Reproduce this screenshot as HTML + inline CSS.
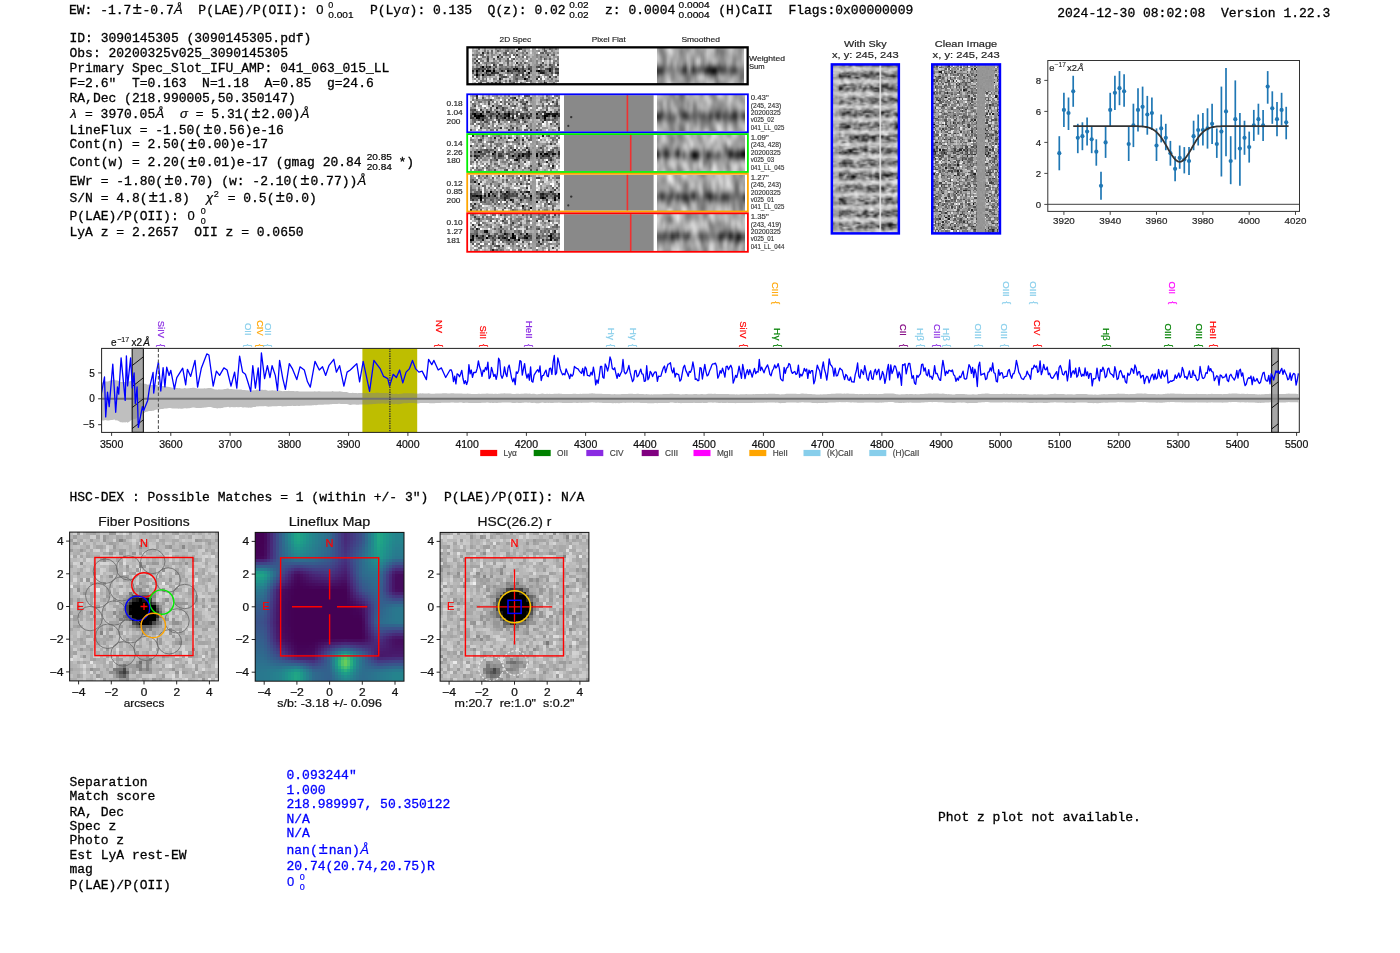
<!DOCTYPE html>
<html><head><meta charset="utf-8"><title>ELiXer report</title>
<style>html,body{margin:0;padding:0;background:#fff;width:1400px;height:953px;overflow:hidden;position:relative}
canvas{position:absolute;display:block}</style></head><body>
<canvas id="cv0" width="45" height="18" style="left:471.70px;top:47.80px;width:87.20px;height:36.00px;background:#8d8d8d;image-rendering:pixelated;filter:blur(0.45px)"></canvas>
<canvas id="cv1" width="44" height="18" style="left:657.00px;top:47.80px;width:87.30px;height:36.00px;background:#8f8f8f"></canvas>
<canvas id="cv2" width="45" height="18" style="left:470.20px;top:95.20px;width:89.80px;height:36.20px;background:#8c8c8c;image-rendering:pixelated;filter:blur(0.45px)"></canvas>
<canvas id="cv3" width="44" height="18" style="left:657.00px;top:95.20px;width:88.30px;height:36.20px;background:#8f8f8f"></canvas>
<canvas id="cv4" width="45" height="18" style="left:470.20px;top:135.00px;width:89.80px;height:36.10px;background:#929292;image-rendering:pixelated;filter:blur(0.45px)"></canvas>
<canvas id="cv5" width="44" height="18" style="left:657.00px;top:135.00px;width:88.30px;height:36.10px;background:#969696"></canvas>
<canvas id="cv6" width="45" height="18" style="left:470.20px;top:174.70px;width:89.80px;height:35.90px;background:#909090;image-rendering:pixelated;filter:blur(0.45px)"></canvas>
<canvas id="cv7" width="44" height="18" style="left:657.00px;top:174.70px;width:88.30px;height:35.90px;background:#939393"></canvas>
<canvas id="cv8" width="45" height="18" style="left:470.20px;top:214.20px;width:89.80px;height:36.70px;background:#909090;image-rendering:pixelated;filter:blur(0.45px)"></canvas>
<canvas id="cv9" width="44" height="18" style="left:657.00px;top:214.20px;width:88.30px;height:36.70px;background:#969696"></canvas>
<canvas id="cv10" width="44" height="112" style="left:832.60px;top:64.90px;width:66.00px;height:168.00px;background:#9a9a9a"></canvas>
<canvas id="cv11" width="44" height="112" style="left:932.60px;top:64.90px;width:67.00px;height:168.00px;background:#8d8d8d;image-rendering:pixelated;filter:blur(0.6px)"></canvas>
<canvas id="cv12" width="45" height="45" style="left:69.61px;top:532.11px;width:148.78px;height:148.79px;background:#aeaeae;image-rendering:pixelated;filter:blur(0.4px)"></canvas>
<canvas id="cv13" width="50" height="50" style="left:255.21px;top:532.41px;width:148.78px;height:148.79px;background:#394379;image-rendering:pixelated;filter:blur(0.4px)"></canvas>
<canvas id="cv14" width="45" height="45" style="left:440.11px;top:532.41px;width:148.79px;height:148.79px;background:#ababab;image-rendering:pixelated;filter:blur(0.4px)"></canvas>
<svg width="1400" height="953" style="position:absolute;left:0;top:0">
<text x="69.00" y="14.00" font-family="Liberation Mono" font-size="13" fill="#000" stroke="#000" stroke-width="0.30" xml:space="preserve">EW: -1.7</text>
<text x="137.09" y="14.30" font-family="Liberation Sans" font-size="16.25" fill="#000" stroke="#000" stroke-width="0.22" text-anchor="middle" >±</text>
<text x="142.53" y="14.00" font-family="Liberation Mono" font-size="13" fill="#000" stroke="#000" stroke-width="0.30" xml:space="preserve">-0.7</text>
<text x="178.30" y="14.00" font-family="Liberation Sans" font-size="13" fill="#000" stroke="#000" stroke-width="0.22" text-anchor="middle" font-style="italic" >Å</text>
<text x="182.75" y="14.00" font-family="Liberation Mono" font-size="13" fill="#000" stroke="#000" stroke-width="0.30" xml:space="preserve">  P(LAE)/P(OII): </text>
<text x="319.99" y="14.00" font-family="Liberation Sans" font-size="13" fill="#000" stroke="#000" stroke-width="0.22" text-anchor="middle" >0</text>
<text x="328.32" y="7.80" font-family="Liberation Sans" font-size="9.1" fill="#000" stroke="#000" stroke-width="0.20" textLength="5.0" lengthAdjust="spacingAndGlyphs" >0</text>
<text x="328.32" y="17.50" font-family="Liberation Sans" font-size="9.1" fill="#000" stroke="#000" stroke-width="0.20" textLength="25.2" lengthAdjust="spacingAndGlyphs" >0.001</text>
<text x="354.37" y="14.00" font-family="Liberation Mono" font-size="13" fill="#000" stroke="#000" stroke-width="0.30" xml:space="preserve">  P(Ly</text>
<text x="405.47" y="14.00" font-family="Liberation Sans" font-size="13" fill="#000" stroke="#000" stroke-width="0.22" text-anchor="middle" font-style="italic" >α</text>
<text x="409.59" y="14.00" font-family="Liberation Mono" font-size="13" fill="#000" stroke="#000" stroke-width="0.30" xml:space="preserve">): 0.135  Q(z): 0.02</text>
<text x="569.19" y="7.80" font-family="Liberation Sans" font-size="9.1" fill="#000" stroke="#000" stroke-width="0.20" textLength="19.5" lengthAdjust="spacingAndGlyphs" >0.02</text>
<text x="569.19" y="17.50" font-family="Liberation Sans" font-size="9.1" fill="#000" stroke="#000" stroke-width="0.20" textLength="19.5" lengthAdjust="spacingAndGlyphs" >0.02</text>
<text x="589.45" y="14.00" font-family="Liberation Mono" font-size="13" fill="#000" stroke="#000" stroke-width="0.30" xml:space="preserve">  z: 0.0004</text>
<text x="678.58" y="7.80" font-family="Liberation Sans" font-size="9.1" fill="#000" stroke="#000" stroke-width="0.20" textLength="31.0" lengthAdjust="spacingAndGlyphs" >0.0004</text>
<text x="678.58" y="17.50" font-family="Liberation Sans" font-size="9.1" fill="#000" stroke="#000" stroke-width="0.20" textLength="31.0" lengthAdjust="spacingAndGlyphs" >0.0004</text>
<text x="710.41" y="14.00" font-family="Liberation Mono" font-size="13" fill="#000" stroke="#000" stroke-width="0.30" xml:space="preserve"> (H)CaII  Flags:0x00000009</text>
<text x="1057.20" y="16.80" font-family="Liberation Mono" font-size="13" fill="#000" stroke="#000" stroke-width="0.30" xml:space="preserve">2024-12-30 08:02:08  Version 1.22.3</text>
<text x="69.50" y="42.40" font-family="Liberation Mono" font-size="13" fill="#000" stroke="#000" stroke-width="0.30" xml:space="preserve">ID: 3090145305 (3090145305.pdf)</text>
<text x="69.50" y="56.70" font-family="Liberation Mono" font-size="13" fill="#000" stroke="#000" stroke-width="0.30" xml:space="preserve">Obs: 20200325v025_3090145305</text>
<text x="69.50" y="71.90" font-family="Liberation Mono" font-size="13" fill="#000" stroke="#000" stroke-width="0.30" xml:space="preserve">Primary Spec_Slot_IFU_AMP: 041_063_015_LL</text>
<text x="69.50" y="86.70" font-family="Liberation Mono" font-size="13" fill="#000" stroke="#000" stroke-width="0.30" xml:space="preserve">F=2.6&quot;  T=0.163  N=1.18  A=0.85  g=24.6</text>
<text x="69.50" y="102.10" font-family="Liberation Mono" font-size="13" fill="#000" stroke="#000" stroke-width="0.30" xml:space="preserve">RA,Dec (218.990005,50.350147)</text>
<text x="73.35" y="118.10" font-family="Liberation Sans" font-size="13" fill="#000" stroke="#000" stroke-width="0.22" text-anchor="middle" font-style="italic" >λ</text>
<text x="77.20" y="118.10" font-family="Liberation Mono" font-size="13" fill="#000" stroke="#000" stroke-width="0.30" xml:space="preserve"> = 3970.05</text>
<text x="159.94" y="118.10" font-family="Liberation Sans" font-size="13" fill="#000" stroke="#000" stroke-width="0.22" text-anchor="middle" font-style="italic" >Å</text>
<text x="164.39" y="118.10" font-family="Liberation Mono" font-size="13" fill="#000" stroke="#000" stroke-width="0.30" xml:space="preserve">  </text>
<text x="183.97" y="118.10" font-family="Liberation Sans" font-size="13" fill="#000" stroke="#000" stroke-width="0.22" text-anchor="middle" font-style="italic" >σ</text>
<text x="187.89" y="118.10" font-family="Liberation Mono" font-size="13" fill="#000" stroke="#000" stroke-width="0.30" xml:space="preserve"> = 5.31(</text>
<text x="255.97" y="118.40" font-family="Liberation Sans" font-size="16.25" fill="#000" stroke="#000" stroke-width="0.22" text-anchor="middle" >±</text>
<text x="261.42" y="118.10" font-family="Liberation Mono" font-size="13" fill="#000" stroke="#000" stroke-width="0.30" xml:space="preserve">2.00)</text>
<text x="305.02" y="118.10" font-family="Liberation Sans" font-size="13" fill="#000" stroke="#000" stroke-width="0.22" text-anchor="middle" font-style="italic" >Å</text>
<text x="69.50" y="133.60" font-family="Liberation Mono" font-size="13" fill="#000" stroke="#000" stroke-width="0.30" xml:space="preserve">LineFlux = -1.50(</text>
<text x="208.06" y="133.90" font-family="Liberation Sans" font-size="16.25" fill="#000" stroke="#000" stroke-width="0.22" text-anchor="middle" >±</text>
<text x="213.50" y="133.60" font-family="Liberation Mono" font-size="13" fill="#000" stroke="#000" stroke-width="0.30" xml:space="preserve">0.56)e-16</text>
<text x="69.50" y="148.30" font-family="Liberation Mono" font-size="13" fill="#000" stroke="#000" stroke-width="0.30" xml:space="preserve">Cont(n) = 2.50(</text>
<text x="192.40" y="148.60" font-family="Liberation Sans" font-size="16.25" fill="#000" stroke="#000" stroke-width="0.22" text-anchor="middle" >±</text>
<text x="197.84" y="148.30" font-family="Liberation Mono" font-size="13" fill="#000" stroke="#000" stroke-width="0.30" xml:space="preserve">0.00)e-17</text>
<text x="69.50" y="166.40" font-family="Liberation Mono" font-size="13" fill="#000" stroke="#000" stroke-width="0.30" xml:space="preserve">Cont(w) = 2.20(</text>
<text x="192.40" y="166.70" font-family="Liberation Sans" font-size="16.25" fill="#000" stroke="#000" stroke-width="0.22" text-anchor="middle" >±</text>
<text x="197.84" y="166.40" font-family="Liberation Mono" font-size="13" fill="#000" stroke="#000" stroke-width="0.30" xml:space="preserve">0.01)e-17 (gmag 20.84</text>
<text x="366.77" y="160.20" font-family="Liberation Sans" font-size="9.1" fill="#000" stroke="#000" stroke-width="0.20" textLength="25.2" lengthAdjust="spacingAndGlyphs" >20.85</text>
<text x="366.77" y="169.90" font-family="Liberation Sans" font-size="9.1" fill="#000" stroke="#000" stroke-width="0.20" textLength="25.2" lengthAdjust="spacingAndGlyphs" >20.84</text>
<text x="390.60" y="166.40" font-family="Liberation Mono" font-size="13" fill="#000" stroke="#000" stroke-width="0.30" xml:space="preserve"> *)</text>
<text x="69.50" y="184.60" font-family="Liberation Mono" font-size="13" fill="#000" stroke="#000" stroke-width="0.30" xml:space="preserve">EWr = -1.80(</text>
<text x="168.91" y="184.90" font-family="Liberation Sans" font-size="16.25" fill="#000" stroke="#000" stroke-width="0.22" text-anchor="middle" >±</text>
<text x="174.35" y="184.60" font-family="Liberation Mono" font-size="13" fill="#000" stroke="#000" stroke-width="0.30" xml:space="preserve">0.70) (w: -2.10(</text>
<text x="305.08" y="184.90" font-family="Liberation Sans" font-size="16.25" fill="#000" stroke="#000" stroke-width="0.22" text-anchor="middle" >±</text>
<text x="310.53" y="184.60" font-family="Liberation Mono" font-size="13" fill="#000" stroke="#000" stroke-width="0.30" xml:space="preserve">0.77))</text>
<text x="361.95" y="184.60" font-family="Liberation Sans" font-size="13" fill="#000" stroke="#000" stroke-width="0.22" text-anchor="middle" font-style="italic" >Å</text>
<text x="69.50" y="202.10" font-family="Liberation Mono" font-size="13" fill="#000" stroke="#000" stroke-width="0.30" xml:space="preserve">S/N = 4.8(</text>
<text x="153.25" y="202.40" font-family="Liberation Sans" font-size="16.25" fill="#000" stroke="#000" stroke-width="0.22" text-anchor="middle" >±</text>
<text x="158.69" y="202.10" font-family="Liberation Mono" font-size="13" fill="#000" stroke="#000" stroke-width="0.30" xml:space="preserve">1.8)  </text>
<text x="209.52" y="202.10" font-family="Liberation Sans" font-size="13" fill="#000" stroke="#000" stroke-width="0.22" text-anchor="middle" font-style="italic" >χ</text>
<text x="213.87" y="196.60" font-family="Liberation Sans" font-size="9.1" fill="#000" stroke="#000" stroke-width="0.20" >2</text>
<text x="219.87" y="202.10" font-family="Liberation Mono" font-size="13" fill="#000" stroke="#000" stroke-width="0.30" xml:space="preserve"> = 0.5(</text>
<text x="280.13" y="202.40" font-family="Liberation Sans" font-size="16.25" fill="#000" stroke="#000" stroke-width="0.22" text-anchor="middle" >±</text>
<text x="285.57" y="202.10" font-family="Liberation Mono" font-size="13" fill="#000" stroke="#000" stroke-width="0.30" xml:space="preserve">0.0)</text>
<text x="69.50" y="220.00" font-family="Liberation Mono" font-size="13" fill="#000" stroke="#000" stroke-width="0.30" xml:space="preserve">P(LAE)/P(OII): </text>
<text x="191.08" y="220.00" font-family="Liberation Sans" font-size="13" fill="#000" stroke="#000" stroke-width="0.22" text-anchor="middle" >0</text>
<text x="200.72" y="213.80" font-family="Liberation Sans" font-size="9.1" fill="#000" stroke="#000" stroke-width="0.20" textLength="5.0" lengthAdjust="spacingAndGlyphs" >0</text>
<text x="200.72" y="223.50" font-family="Liberation Sans" font-size="9.1" fill="#000" stroke="#000" stroke-width="0.20" textLength="5.0" lengthAdjust="spacingAndGlyphs" >0</text>
<text x="69.50" y="236.40" font-family="Liberation Mono" font-size="13" fill="#000" stroke="#000" stroke-width="0.30" xml:space="preserve">LyA z = 2.2657  OII z = 0.0650</text>
<text x="69.50" y="785.70" font-family="Liberation Mono" font-size="13" fill="#000" stroke="#000" stroke-width="0.30" >Separation</text>
<text x="69.50" y="800.40" font-family="Liberation Mono" font-size="13" fill="#000" stroke="#000" stroke-width="0.30" >Match score</text>
<text x="69.50" y="815.70" font-family="Liberation Mono" font-size="13" fill="#000" stroke="#000" stroke-width="0.30" >RA, Dec</text>
<text x="69.50" y="830.00" font-family="Liberation Mono" font-size="13" fill="#000" stroke="#000" stroke-width="0.30" >Spec z</text>
<text x="69.50" y="844.30" font-family="Liberation Mono" font-size="13" fill="#000" stroke="#000" stroke-width="0.30" >Photo z</text>
<text x="69.50" y="859.30" font-family="Liberation Mono" font-size="13" fill="#000" stroke="#000" stroke-width="0.30" >Est LyA rest-EW</text>
<text x="69.50" y="872.90" font-family="Liberation Mono" font-size="13" fill="#000" stroke="#000" stroke-width="0.30" >mag</text>
<text x="69.50" y="888.60" font-family="Liberation Mono" font-size="13" fill="#000" stroke="#000" stroke-width="0.30" >P(LAE)/P(OII)</text>
<text x="286.50" y="778.80" font-family="Liberation Mono" font-size="13" fill="#0000ff" stroke="#0000ff" stroke-width="0.30" xml:space="preserve">0.093244&quot;</text>
<text x="286.50" y="793.50" font-family="Liberation Mono" font-size="13" fill="#0000ff" stroke="#0000ff" stroke-width="0.30" xml:space="preserve">1.000</text>
<text x="286.50" y="808.20" font-family="Liberation Mono" font-size="13" fill="#0000ff" stroke="#0000ff" stroke-width="0.30" xml:space="preserve">218.989997, 50.350122</text>
<text x="286.50" y="822.50" font-family="Liberation Mono" font-size="13" fill="#0000ff" stroke="#0000ff" stroke-width="0.30" xml:space="preserve">N/A</text>
<text x="286.50" y="837.10" font-family="Liberation Mono" font-size="13" fill="#0000ff" stroke="#0000ff" stroke-width="0.30" xml:space="preserve">N/A</text>
<text x="286.50" y="854.00" font-family="Liberation Mono" font-size="13" fill="#0000ff" stroke="#0000ff" stroke-width="0.30" xml:space="preserve">nan(</text>
<text x="323.27" y="854.30" font-family="Liberation Sans" font-size="16.25" fill="#0000ff" stroke="#0000ff" stroke-width="0.22" text-anchor="middle" >±</text>
<text x="328.71" y="854.00" font-family="Liberation Mono" font-size="13" fill="#0000ff" stroke="#0000ff" stroke-width="0.30" xml:space="preserve">nan)</text>
<text x="364.48" y="854.00" font-family="Liberation Sans" font-size="13" fill="#0000ff" stroke="#0000ff" stroke-width="0.22" text-anchor="middle" font-style="italic" >Å</text>
<text x="286.50" y="869.50" font-family="Liberation Mono" font-size="13" fill="#0000ff" stroke="#0000ff" stroke-width="0.30" xml:space="preserve">20.74(20.74,20.75)R</text>
<text x="290.63" y="886.40" font-family="Liberation Sans" font-size="13" fill="#0000ff" stroke="#0000ff" stroke-width="0.22" text-anchor="middle" >0</text>
<text x="299.77" y="880.20" font-family="Liberation Sans" font-size="9.1" fill="#0000ff" stroke="#0000ff" stroke-width="0.20" textLength="5.0" lengthAdjust="spacingAndGlyphs" >0</text>
<text x="299.77" y="889.90" font-family="Liberation Sans" font-size="9.1" fill="#0000ff" stroke="#0000ff" stroke-width="0.20" textLength="5.0" lengthAdjust="spacingAndGlyphs" >0</text>
<text x="938.00" y="821.10" font-family="Liberation Mono" font-size="13" fill="#000" stroke="#000" stroke-width="0.30" >Phot z plot not available.</text>
<text x="69.50" y="501.30" font-family="Liberation Mono" font-size="13" fill="#000" stroke="#000" stroke-width="0.30" xml:space="preserve">HSC-DEX : Possible Matches = 1 (within +/- 3&quot;)  P(LAE)/P(OII): N/A</text>
<rect x="362.4" y="348.4" width="54.8" height="84.0" fill="#bebe00"/>
<polygon points="101.5,382.2 102.7,382.4 103.9,382.2 105.1,381.5 106.3,381.5 107.5,381.5 108.6,381.3 109.8,380.8 111.0,380.3 112.2,380.3 113.4,379.8 114.6,379.5 115.7,380.4 116.9,380.3 118.1,380.7 119.3,381.3 120.5,382.0 121.7,382.1 122.9,382.1 124.0,381.9 125.2,382.0 126.4,381.5 127.6,382.2 128.8,381.5 130.0,381.2 131.2,380.8 132.3,381.6 133.5,381.6 134.7,382.4 135.9,383.1 137.1,383.0 138.3,382.7 139.4,382.9 140.6,383.0 141.8,383.6 143.0,383.5 144.2,383.7 145.4,383.8 146.6,384.3 147.7,384.8 148.9,384.4 150.1,385.0 151.3,385.1 152.5,385.1 153.7,385.4 154.9,385.1 156.0,385.1 157.2,385.3 158.4,385.5 159.6,385.8 160.8,385.7 162.0,385.9 163.1,386.1 164.3,386.0 165.5,386.3 166.7,386.8 167.9,386.7 169.1,387.0 170.3,387.2 171.4,387.5 172.6,387.8 173.8,387.9 175.0,387.8 176.2,387.9 177.4,388.1 178.6,388.3 179.7,388.1 180.9,388.6 182.1,388.4 183.3,388.4 184.5,388.1 185.7,388.2 186.8,388.5 188.0,388.3 189.2,388.3 190.4,388.1 191.6,387.9 192.8,387.8 194.0,387.8 195.1,388.1 196.3,388.3 197.5,388.5 198.7,388.4 199.9,388.5 201.1,388.6 202.3,388.4 203.4,388.4 204.6,388.3 205.8,388.4 207.0,388.2 208.2,388.0 209.4,387.9 210.5,388.1 211.7,388.3 212.9,388.8 214.1,389.2 215.3,389.4 216.5,389.5 217.7,389.7 218.8,389.3 220.0,389.6 221.2,389.5 222.4,389.5 223.6,389.2 224.8,388.9 226.0,388.9 227.1,388.6 228.3,388.6 229.5,389.2 230.7,389.1 231.9,389.0 233.1,389.3 234.2,389.3 235.4,389.5 236.6,389.3 237.8,389.4 239.0,389.5 240.2,389.5 241.4,389.5 242.5,389.9 243.7,390.0 244.9,390.0 246.1,390.2 247.3,390.3 248.5,390.6 249.7,390.5 250.8,390.6 252.0,390.5 253.2,390.2 254.4,390.3 255.6,390.2 256.8,389.6 257.9,389.8 259.1,389.6 260.3,389.8 261.5,389.8 262.7,389.8 263.9,389.9 265.1,389.7 266.2,390.1 267.4,390.5 268.6,390.7 269.8,390.5 271.0,390.5 272.2,390.2 273.4,390.4 274.5,390.5 275.7,390.6 276.9,390.6 278.1,390.5 279.3,390.4 280.5,390.7 281.6,390.9 282.8,391.2 284.0,391.0 285.2,391.0 286.4,391.1 287.6,391.0 288.8,390.8 289.9,391.0 291.1,391.0 292.3,391.0 293.5,391.1 294.7,391.3 295.9,391.2 297.1,391.1 298.2,391.3 299.4,391.5 300.6,391.4 301.8,391.4 303.0,391.5 304.2,391.4 305.3,391.4 306.5,391.5 307.7,391.5 308.9,391.4 310.1,391.6 311.3,391.6 312.5,391.5 313.6,391.5 314.8,391.3 316.0,391.6 317.2,391.4 318.4,391.3 319.6,391.3 320.8,391.4 321.9,391.5 323.1,391.5 324.3,391.4 325.5,391.4 326.7,391.4 327.9,391.5 329.0,391.5 330.2,391.5 331.4,391.5 332.6,391.1 333.8,391.5 335.0,391.5 336.2,391.5 337.3,391.5 338.5,391.4 339.7,391.3 340.9,391.6 342.1,391.8 343.3,391.9 344.5,391.9 345.6,392.0 346.8,392.0 348.0,392.4 349.2,392.9 350.4,393.0 351.6,392.9 352.7,392.7 353.9,392.9 355.1,392.9 356.3,393.0 357.5,393.2 358.7,393.1 359.9,393.1 361.0,393.1 362.2,393.1 363.4,393.1 364.6,393.2 365.8,393.2 367.0,393.1 368.2,393.2 369.3,393.1 370.5,393.1 371.7,393.1 372.9,393.1 374.1,392.9 375.3,393.0 376.4,392.8 377.6,392.8 378.8,392.7 380.0,392.9 381.2,392.9 382.4,392.9 383.6,392.9 384.7,393.1 385.9,393.0 387.1,393.0 388.3,393.1 389.5,393.3 390.7,393.2 391.9,393.4 393.0,393.8 394.2,393.9 395.4,393.8 396.6,393.8 397.8,394.0 399.0,394.1 400.1,393.8 401.3,393.8 402.5,393.6 403.7,393.3 404.9,393.3 406.1,393.3 407.3,393.3 408.4,393.2 409.6,393.2 410.8,393.3 412.0,393.3 413.2,393.3 414.4,393.4 415.6,393.4 416.7,393.5 417.9,393.7 419.1,393.5 420.3,393.3 421.5,393.4 422.7,393.3 423.8,393.4 425.0,393.5 426.2,393.5 427.4,393.5 428.6,393.3 429.8,393.6 431.0,393.8 432.1,393.8 433.3,393.7 434.5,393.7 435.7,393.5 436.9,393.4 438.1,393.4 439.3,393.5 440.4,393.6 441.6,393.4 442.8,393.3 444.0,393.3 445.2,393.3 446.4,393.3 447.5,393.5 448.7,393.4 449.9,393.4 451.1,393.3 452.3,393.3 453.5,393.3 454.7,393.4 455.8,393.5 457.0,393.6 458.2,393.5 459.4,393.4 460.6,393.4 461.8,393.5 463.0,393.7 464.1,393.8 465.3,393.7 466.5,393.7 467.7,393.6 468.9,393.8 470.1,393.8 471.2,394.0 472.4,394.0 473.6,394.0 474.8,393.9 476.0,394.0 477.2,393.9 478.4,393.8 479.5,393.8 480.7,393.9 481.9,393.7 483.1,393.7 484.3,393.7 485.5,393.7 486.7,393.5 487.8,393.6 489.0,393.7 490.2,393.8 491.4,393.7 492.6,393.8 493.8,393.9 494.9,393.7 496.1,393.8 497.3,393.9 498.5,393.8 499.7,393.7 500.9,393.6 502.1,393.4 503.2,393.4 504.4,393.3 505.6,393.5 506.8,393.5 508.0,393.4 509.2,393.5 510.4,393.6 511.5,393.7 512.7,393.9 513.9,393.9 515.1,393.9 516.3,393.7 517.5,393.7 518.6,393.8 519.8,393.9 521.0,393.8 522.2,393.8 523.4,393.7 524.6,393.5 525.8,393.5 526.9,393.5 528.1,393.7 529.3,393.6 530.5,393.8 531.7,393.9 532.9,393.8 534.1,393.8 535.2,394.0 536.4,394.2 537.6,394.2 538.8,394.1 540.0,394.1 541.2,393.8 542.3,393.6 543.5,393.8 544.7,393.9 545.9,393.9 547.1,393.8 548.3,393.9 549.5,393.8 550.6,393.9 551.8,394.0 553.0,394.0 554.2,393.8 555.4,393.7 556.6,393.7 557.8,393.7 558.9,393.6 560.1,393.7 561.3,393.7 562.5,393.9 563.7,393.9 564.9,394.0 566.0,394.0 567.2,393.9 568.4,394.1 569.6,394.1 570.8,394.1 572.0,393.9 573.2,393.8 574.3,393.8 575.5,393.8 576.7,393.9 577.9,394.1 579.1,393.9 580.3,393.7 581.5,393.9 582.6,393.8 583.8,393.8 585.0,393.7 586.2,393.8 587.4,393.7 588.6,393.7 589.7,393.6 590.9,393.6 592.1,393.3 593.3,393.5 594.5,393.5 595.7,393.8 596.9,393.8 598.0,393.7 599.2,393.7 600.4,393.8 601.6,393.8 602.8,394.0 604.0,394.0 605.2,394.1 606.3,393.9 607.5,393.9 608.7,394.1 609.9,394.0 611.1,394.2 612.3,394.3 613.4,394.3 614.6,394.1 615.8,394.2 617.0,394.2 618.2,394.2 619.4,394.3 620.6,394.2 621.7,394.1 622.9,393.9 624.1,393.9 625.3,394.0 626.5,393.9 627.7,393.9 628.9,393.8 630.0,393.8 631.2,393.8 632.4,393.7 633.6,394.0 634.8,393.9 636.0,393.9 637.1,393.8 638.3,393.8 639.5,393.9 640.7,394.0 641.9,394.0 643.1,394.1 644.3,394.2 645.4,394.2 646.6,394.1 647.8,394.3 649.0,394.3 650.2,394.4 651.4,394.3 652.6,394.4 653.7,394.3 654.9,394.2 656.1,394.2 657.3,394.3 658.5,394.2 659.7,394.2 660.8,394.2 662.0,394.3 663.2,394.1 664.4,394.1 665.6,394.0 666.8,394.1 668.0,394.0 669.1,394.0 670.3,393.8 671.5,393.8 672.7,393.7 673.9,394.0 675.1,394.1 676.3,394.0 677.4,394.0 678.6,394.1 679.8,394.2 681.0,394.4 682.2,394.2 683.4,394.3 684.5,394.2 685.7,394.1 686.9,394.1 688.1,394.3 689.3,394.2 690.5,394.2 691.7,394.3 692.8,394.3 694.0,394.0 695.2,394.1 696.4,394.0 697.6,394.3 698.8,394.2 700.0,394.2 701.1,394.1 702.3,394.0 703.5,394.2 704.7,394.3 705.9,394.3 707.1,394.1 708.2,393.8 709.4,393.7 710.6,393.8 711.8,393.8 713.0,393.9 714.2,393.8 715.4,393.8 716.5,393.9 717.7,394.0 718.9,394.1 720.1,394.1 721.3,394.1 722.5,394.1 723.7,394.1 724.8,394.1 726.0,394.1 727.2,394.0 728.4,394.1 729.6,394.2 730.8,394.2 731.9,394.3 733.1,394.3 734.3,394.2 735.5,394.4 736.7,394.3 737.9,394.4 739.1,394.4 740.2,394.3 741.4,394.3 742.6,394.3 743.8,394.3 745.0,394.3 746.2,394.1 747.4,394.2 748.5,394.2 749.7,394.2 750.9,394.2 752.1,394.2 753.3,394.0 754.5,394.2 755.6,394.1 756.8,394.1 758.0,393.9 759.2,393.9 760.4,394.0 761.6,394.0 762.8,393.9 763.9,393.9 765.1,393.8 766.3,393.9 767.5,393.9 768.7,393.8 769.9,393.8 771.1,393.7 772.2,393.8 773.4,393.8 774.6,393.8 775.8,394.1 777.0,393.9 778.2,394.1 779.3,394.3 780.5,394.4 781.7,394.3 782.9,394.2 784.1,394.3 785.3,394.1 786.5,393.8 787.6,393.8 788.8,393.7 790.0,393.7 791.2,393.7 792.4,393.8 793.6,393.7 794.8,393.8 795.9,393.8 797.1,394.0 798.3,394.0 799.5,393.9 800.7,393.8 801.9,393.6 803.0,393.6 804.2,393.7 805.4,393.7 806.6,393.8 807.8,393.9 809.0,393.9 810.2,393.9 811.3,394.0 812.5,394.2 813.7,394.3 814.9,394.3 816.1,394.4 817.3,394.5 818.5,394.4 819.6,394.4 820.8,394.3 822.0,394.4 823.2,394.3 824.4,394.2 825.6,394.3 826.7,394.3 827.9,394.1 829.1,394.0 830.3,393.9 831.5,393.8 832.7,393.8 833.9,393.7 835.0,393.7 836.2,393.5 837.4,393.5 838.6,393.5 839.8,393.4 841.0,393.6 842.2,393.7 843.3,393.7 844.5,393.6 845.7,393.7 846.9,393.5 848.1,393.6 849.3,393.7 850.4,393.8 851.6,393.8 852.8,393.7 854.0,393.8 855.2,394.0 856.4,394.0 857.6,394.1 858.7,394.2 859.9,394.1 861.1,394.0 862.3,394.1 863.5,394.2 864.7,394.0 865.9,393.9 867.0,393.9 868.2,393.9 869.4,393.8 870.6,393.9 871.8,394.0 873.0,394.0 874.1,393.9 875.3,394.1 876.5,394.1 877.7,394.2 878.9,394.0 880.1,394.0 881.3,394.1 882.4,393.9 883.6,393.8 884.8,393.6 886.0,393.5 887.2,393.5 888.4,393.4 889.6,393.5 890.7,393.5 891.9,393.5 893.1,393.5 894.3,393.8 895.5,394.1 896.7,394.2 897.8,394.2 899.0,394.4 900.2,394.4 901.4,394.3 902.6,394.2 903.8,394.3 905.0,394.2 906.1,394.1 907.3,394.0 908.5,394.2 909.7,394.0 910.9,394.0 912.1,394.1 913.3,394.2 914.4,394.2 915.6,394.1 916.8,394.2 918.0,394.3 919.2,394.2 920.4,394.1 921.5,394.0 922.7,394.0 923.9,393.9 925.1,393.7 926.3,393.8 927.5,393.7 928.7,393.5 929.8,393.4 931.0,393.5 932.2,393.7 933.4,393.5 934.6,393.4 935.8,393.5 937.0,393.5 938.1,393.6 939.3,393.7 940.5,393.7 941.7,393.7 942.9,393.6 944.1,393.8 945.2,394.1 946.4,394.1 947.6,394.2 948.8,394.1 950.0,394.2 951.2,394.2 952.4,394.5 953.5,394.4 954.7,394.4 955.9,394.1 957.1,394.0 958.3,393.9 959.5,394.1 960.7,394.1 961.8,394.1 963.0,394.0 964.2,394.1 965.4,394.3 966.6,394.3 967.8,394.6 968.9,394.6 970.1,394.5 971.3,394.4 972.5,394.3 973.7,394.3 974.9,394.4 976.1,394.4 977.2,394.4 978.4,394.1 979.6,394.0 980.8,393.9 982.0,393.8 983.2,393.8 984.4,393.7 985.5,393.6 986.7,393.5 987.9,393.5 989.1,393.7 990.3,393.9 991.5,394.0 992.6,394.1 993.8,394.1 995.0,394.0 996.2,394.0 997.4,394.0 998.6,394.0 999.8,393.9 1000.9,394.0 1002.1,394.0 1003.3,393.8 1004.5,393.8 1005.7,394.0 1006.9,393.8 1008.1,393.9 1009.2,393.9 1010.4,394.0 1011.6,393.8 1012.8,393.9 1014.0,394.1 1015.2,394.1 1016.3,394.1 1017.5,394.2 1018.7,394.0 1019.9,394.1 1021.1,394.0 1022.3,394.2 1023.5,394.1 1024.6,394.0 1025.8,394.0 1027.0,394.2 1028.2,394.3 1029.4,394.5 1030.6,394.5 1031.8,394.5 1032.9,394.4 1034.1,394.3 1035.3,394.3 1036.5,394.4 1037.7,394.3 1038.9,394.3 1040.0,394.3 1041.2,394.2 1042.4,394.3 1043.6,394.5 1044.8,394.5 1046.0,394.5 1047.2,394.4 1048.3,394.3 1049.5,394.2 1050.7,394.1 1051.9,394.0 1053.1,393.9 1054.3,393.7 1055.5,393.7 1056.6,393.9 1057.8,393.9 1059.0,393.9 1060.2,394.0 1061.4,394.1 1062.6,394.0 1063.7,394.1 1064.9,394.2 1066.1,394.4 1067.3,394.3 1068.5,394.3 1069.7,394.3 1070.9,394.3 1072.0,394.3 1073.2,394.4 1074.4,394.4 1075.6,394.3 1076.8,394.1 1078.0,393.9 1079.2,393.9 1080.3,393.9 1081.5,394.0 1082.7,393.9 1083.9,394.0 1085.1,394.0 1086.3,394.0 1087.4,394.2 1088.6,394.5 1089.8,394.4 1091.0,394.5 1092.2,394.6 1093.4,394.7 1094.6,394.6 1095.7,394.6 1096.9,394.7 1098.1,394.7 1099.3,394.5 1100.5,394.4 1101.7,394.3 1102.9,394.2 1104.0,394.1 1105.2,394.2 1106.4,394.3 1107.6,394.2 1108.8,394.0 1110.0,394.1 1111.1,394.0 1112.3,394.1 1113.5,393.9 1114.7,394.0 1115.9,394.0 1117.1,393.7 1118.3,393.6 1119.4,393.7 1120.6,393.7 1121.8,393.8 1123.0,393.7 1124.2,393.8 1125.4,393.9 1126.6,393.9 1127.7,394.1 1128.9,394.2 1130.1,394.0 1131.3,394.0 1132.5,393.9 1133.7,394.1 1134.8,394.0 1136.0,393.7 1137.2,393.6 1138.4,393.6 1139.6,393.6 1140.8,393.5 1142.0,393.6 1143.1,393.7 1144.3,393.6 1145.5,393.6 1146.7,393.8 1147.9,393.9 1149.1,393.9 1150.3,393.9 1151.4,394.1 1152.6,394.1 1153.8,394.1 1155.0,394.0 1156.2,394.2 1157.4,394.2 1158.5,394.1 1159.7,394.2 1160.9,394.2 1162.1,394.3 1163.3,394.1 1164.5,393.9 1165.7,393.8 1166.8,393.7 1168.0,393.6 1169.2,393.7 1170.4,393.6 1171.6,393.5 1172.8,393.5 1174.0,393.5 1175.1,393.7 1176.3,393.8 1177.5,393.7 1178.7,393.8 1179.9,393.8 1181.1,393.8 1182.2,393.9 1183.4,393.7 1184.6,393.9 1185.8,394.1 1187.0,394.1 1188.2,394.1 1189.4,394.0 1190.5,394.0 1191.7,394.0 1192.9,394.0 1194.1,394.1 1195.3,394.1 1196.5,393.8 1197.7,394.0 1198.8,394.0 1200.0,394.0 1201.2,394.1 1202.4,394.1 1203.6,394.1 1204.8,394.1 1205.9,394.1 1207.1,394.2 1208.3,393.9 1209.5,394.1 1210.7,394.0 1211.9,393.8 1213.1,394.0 1214.2,394.0 1215.4,393.9 1216.6,393.9 1217.8,394.0 1219.0,394.1 1220.2,394.0 1221.4,394.1 1222.5,394.2 1223.7,394.1 1224.9,394.1 1226.1,394.0 1227.3,393.9 1228.5,393.8 1229.6,393.6 1230.8,393.7 1232.0,393.6 1233.2,393.5 1234.4,393.5 1235.6,393.4 1236.8,393.6 1237.9,393.8 1239.1,393.8 1240.3,393.9 1241.5,393.8 1242.7,393.8 1243.9,393.8 1245.1,393.9 1246.2,394.0 1247.4,393.8 1248.6,393.9 1249.8,393.9 1251.0,394.0 1252.2,394.0 1253.3,394.0 1254.5,394.1 1255.7,394.2 1256.9,394.2 1258.1,394.4 1259.3,394.3 1260.5,394.4 1261.6,394.3 1262.8,394.3 1264.0,394.2 1265.2,394.1 1266.4,394.1 1267.6,394.0 1268.8,393.9 1269.9,393.7 1271.1,393.7 1272.3,393.8 1273.5,393.9 1274.7,393.9 1275.9,394.0 1277.0,394.0 1278.2,394.0 1279.4,394.0 1280.6,394.1 1281.8,394.1 1283.0,394.0 1284.2,394.1 1285.3,393.9 1286.5,393.8 1287.7,393.7 1288.9,393.6 1290.1,393.7 1291.3,393.7 1292.5,393.7 1293.6,393.7 1294.8,393.7 1296.0,393.8 1297.2,393.9 1298.4,394.0 1298.4,402.5 1297.2,402.3 1296.0,402.3 1294.8,402.2 1293.6,402.2 1292.5,402.2 1291.3,402.2 1290.1,402.2 1288.9,402.1 1287.7,402.2 1286.5,402.3 1285.3,402.4 1284.2,402.5 1283.0,402.5 1281.8,402.6 1280.6,402.6 1279.4,402.5 1278.2,402.5 1277.0,402.4 1275.9,402.5 1274.7,402.4 1273.5,402.4 1272.3,402.3 1271.1,402.2 1269.9,402.2 1268.8,402.4 1267.6,402.5 1266.4,402.6 1265.2,402.6 1264.0,402.7 1262.8,402.7 1261.6,402.8 1260.5,402.9 1259.3,402.8 1258.1,402.9 1256.9,402.7 1255.7,402.7 1254.5,402.6 1253.3,402.5 1252.2,402.5 1251.0,402.5 1249.8,402.4 1248.6,402.4 1247.4,402.3 1246.2,402.5 1245.1,402.4 1243.9,402.3 1242.7,402.3 1241.5,402.3 1240.3,402.4 1239.1,402.3 1237.9,402.3 1236.8,402.1 1235.6,401.9 1234.4,402.0 1233.2,402.0 1232.0,402.0 1230.8,402.2 1229.6,402.1 1228.5,402.3 1227.3,402.4 1226.1,402.5 1224.9,402.6 1223.7,402.6 1222.5,402.7 1221.4,402.6 1220.2,402.5 1219.0,402.6 1217.8,402.5 1216.6,402.4 1215.4,402.4 1214.2,402.5 1213.1,402.5 1211.9,402.3 1210.7,402.5 1209.5,402.6 1208.3,402.4 1207.1,402.7 1205.9,402.6 1204.8,402.6 1203.6,402.6 1202.4,402.6 1201.2,402.6 1200.0,402.5 1198.8,402.5 1197.7,402.5 1196.5,402.3 1195.3,402.6 1194.1,402.6 1192.9,402.5 1191.7,402.5 1190.5,402.5 1189.4,402.5 1188.2,402.5 1187.0,402.6 1185.8,402.5 1184.6,402.4 1183.4,402.2 1182.2,402.4 1181.1,402.3 1179.9,402.3 1178.7,402.3 1177.5,402.2 1176.3,402.2 1175.1,402.2 1174.0,402.0 1172.8,402.0 1171.6,402.0 1170.4,402.1 1169.2,402.2 1168.0,402.1 1166.8,402.2 1165.7,402.3 1164.5,402.4 1163.3,402.6 1162.1,402.8 1160.9,402.7 1159.7,402.7 1158.5,402.6 1157.4,402.7 1156.2,402.7 1155.0,402.5 1153.8,402.6 1152.6,402.6 1151.4,402.6 1150.3,402.4 1149.1,402.4 1147.9,402.3 1146.7,402.3 1145.5,402.1 1144.3,402.1 1143.1,402.2 1142.0,402.1 1140.8,402.0 1139.6,402.1 1138.4,402.1 1137.2,402.1 1136.0,402.2 1134.8,402.5 1133.7,402.6 1132.5,402.4 1131.3,402.5 1130.1,402.5 1128.9,402.6 1127.7,402.6 1126.6,402.4 1125.4,402.4 1124.2,402.3 1123.0,402.2 1121.8,402.3 1120.6,402.2 1119.4,402.2 1118.3,402.1 1117.1,402.2 1115.9,402.5 1114.7,402.5 1113.5,402.4 1112.3,402.6 1111.1,402.5 1110.0,402.6 1108.8,402.5 1107.6,402.7 1106.4,402.8 1105.2,402.7 1104.0,402.6 1102.9,402.7 1101.7,402.8 1100.5,402.9 1099.3,403.0 1098.1,403.2 1096.9,403.2 1095.7,403.1 1094.6,403.1 1093.4,403.2 1092.2,403.1 1091.0,403.0 1089.8,402.9 1088.6,403.0 1087.4,402.7 1086.3,402.5 1085.1,402.5 1083.9,402.5 1082.7,402.4 1081.5,402.5 1080.3,402.4 1079.2,402.4 1078.0,402.4 1076.8,402.6 1075.6,402.8 1074.4,402.9 1073.2,402.9 1072.0,402.8 1070.9,402.8 1069.7,402.8 1068.5,402.8 1067.3,402.8 1066.1,402.9 1064.9,402.7 1063.7,402.6 1062.6,402.5 1061.4,402.6 1060.2,402.5 1059.0,402.4 1057.8,402.4 1056.6,402.4 1055.5,402.2 1054.3,402.2 1053.1,402.4 1051.9,402.5 1050.7,402.6 1049.5,402.7 1048.3,402.8 1047.2,402.9 1046.0,403.0 1044.8,403.0 1043.6,403.0 1042.4,402.8 1041.2,402.7 1040.0,402.8 1038.9,402.8 1037.7,402.8 1036.5,402.9 1035.3,402.8 1034.1,402.8 1032.9,402.9 1031.8,403.0 1030.6,403.0 1029.4,403.0 1028.2,402.8 1027.0,402.7 1025.8,402.5 1024.6,402.5 1023.5,402.6 1022.3,402.7 1021.1,402.5 1019.9,402.6 1018.7,402.5 1017.5,402.7 1016.3,402.6 1015.2,402.6 1014.0,402.6 1012.8,402.4 1011.6,402.3 1010.4,402.5 1009.2,402.4 1008.1,402.4 1006.9,402.3 1005.7,402.5 1004.5,402.3 1003.3,402.3 1002.1,402.5 1000.9,402.5 999.8,402.4 998.6,402.5 997.4,402.5 996.2,402.5 995.0,402.5 993.8,402.6 992.6,402.6 991.5,402.5 990.3,402.4 989.1,402.2 987.9,402.0 986.7,402.0 985.5,402.1 984.4,402.2 983.2,402.3 982.0,402.3 980.8,402.4 979.6,402.5 978.4,402.6 977.2,402.9 976.1,402.9 974.9,402.9 973.7,402.9 972.5,402.9 971.3,403.0 970.1,403.0 968.9,403.1 967.8,403.2 966.6,402.9 965.4,402.8 964.2,402.6 963.0,402.5 961.8,402.7 960.7,402.6 959.5,402.6 958.3,402.5 957.1,402.5 955.9,402.7 954.7,402.9 953.5,403.0 952.4,403.0 951.2,402.8 950.0,402.8 948.8,402.7 947.6,402.8 946.4,402.7 945.2,402.7 944.1,402.4 942.9,402.2 941.7,402.3 940.5,402.3 939.3,402.2 938.1,402.2 937.0,402.0 935.8,402.1 934.6,402.0 933.4,402.1 932.2,402.2 931.0,402.1 929.8,402.0 928.7,402.0 927.5,402.2 926.3,402.3 925.1,402.2 923.9,402.4 922.7,402.5 921.5,402.6 920.4,402.7 919.2,402.8 918.0,402.8 916.8,402.8 915.6,402.7 914.4,402.7 913.3,402.8 912.1,402.7 910.9,402.6 909.7,402.6 908.5,402.8 907.3,402.6 906.1,402.7 905.0,402.8 903.8,402.9 902.6,402.8 901.4,402.9 900.2,403.0 899.0,403.0 897.8,402.8 896.7,402.8 895.5,402.7 894.3,402.4 893.1,402.1 891.9,402.1 890.7,402.1 889.6,402.1 888.4,402.0 887.2,402.2 886.0,402.2 884.8,402.2 883.6,402.4 882.4,402.5 881.3,402.7 880.1,402.6 878.9,402.7 877.7,402.8 876.5,402.7 875.3,402.7 874.1,402.5 873.0,402.6 871.8,402.6 870.6,402.5 869.4,402.5 868.2,402.5 867.0,402.5 865.9,402.6 864.7,402.6 863.5,402.8 862.3,402.7 861.1,402.7 859.9,402.7 858.7,402.8 857.6,402.8 856.4,402.6 855.2,402.6 854.0,402.5 852.8,402.3 851.6,402.4 850.4,402.5 849.3,402.3 848.1,402.2 846.9,402.1 845.7,402.3 844.5,402.2 843.3,402.3 842.2,402.3 841.0,402.2 839.8,402.1 838.6,402.2 837.4,402.2 836.2,402.2 835.0,402.4 833.9,402.4 832.7,402.4 831.5,402.5 830.3,402.6 829.1,402.6 827.9,402.7 826.7,403.0 825.6,403.0 824.4,402.8 823.2,402.9 822.0,403.1 820.8,403.0 819.6,403.0 818.5,403.1 817.3,403.2 816.1,403.1 814.9,403.0 813.7,403.0 812.5,402.9 811.3,402.7 810.2,402.6 809.0,402.6 807.8,402.6 806.6,402.5 805.4,402.4 804.2,402.4 803.0,402.3 801.9,402.3 800.7,402.5 799.5,402.6 798.3,402.7 797.1,402.7 795.9,402.5 794.8,402.5 793.6,402.5 792.4,402.5 791.2,402.5 790.0,402.4 788.8,402.5 787.6,402.6 786.5,402.5 785.3,402.9 784.1,403.0 782.9,403.0 781.7,403.1 780.5,403.2 779.3,403.0 778.2,402.8 777.0,402.6 775.8,402.8 774.6,402.6 773.4,402.5 772.2,402.6 771.1,402.4 769.9,402.5 768.7,402.6 767.5,402.6 766.3,402.7 765.1,402.5 763.9,402.7 762.8,402.7 761.6,402.7 760.4,402.7 759.2,402.7 758.0,402.7 756.8,402.8 755.6,402.8 754.5,402.9 753.3,402.8 752.1,402.9 750.9,402.9 749.7,402.9 748.5,403.0 747.4,403.0 746.2,402.9 745.0,403.1 743.8,403.0 742.6,403.1 741.4,403.1 740.2,403.1 739.1,403.1 737.9,403.1 736.7,403.1 735.5,403.2 734.3,403.0 733.1,403.1 731.9,403.1 730.8,403.0 729.6,403.0 728.4,402.9 727.2,402.8 726.0,402.9 724.8,402.9 723.7,402.9 722.5,402.9 721.3,402.8 720.1,402.9 718.9,402.9 717.7,402.8 716.5,402.7 715.4,402.6 714.2,402.6 713.0,402.7 711.8,402.6 710.6,402.6 709.4,402.5 708.2,402.6 707.1,402.9 705.9,403.1 704.7,403.1 703.5,403.0 702.3,402.8 701.1,402.9 700.0,403.0 698.8,403.0 697.6,403.1 696.4,402.9 695.2,402.9 694.0,402.8 692.8,403.1 691.7,403.1 690.5,403.1 689.3,403.0 688.1,403.1 686.9,402.9 685.7,403.0 684.5,403.0 683.4,403.1 682.2,403.0 681.0,403.2 679.8,403.0 678.6,402.9 677.4,402.8 676.3,402.9 675.1,402.9 673.9,402.8 672.7,402.6 671.5,402.6 670.3,402.6 669.1,402.9 668.0,402.9 666.8,402.9 665.6,402.9 664.4,403.0 663.2,403.0 662.0,403.1 660.8,403.1 659.7,403.0 658.5,403.0 657.3,403.2 656.1,403.1 654.9,403.1 653.7,403.2 652.6,403.2 651.4,403.2 650.2,403.3 649.0,403.2 647.8,403.2 646.6,403.0 645.4,403.1 644.3,403.1 643.1,403.0 641.9,402.9 640.7,402.9 639.5,402.8 638.3,402.7 637.1,402.7 636.0,402.8 634.8,402.8 633.6,402.9 632.4,402.6 631.2,402.7 630.0,402.7 628.9,402.7 627.7,402.8 626.5,402.8 625.3,402.9 624.1,402.8 622.9,402.8 621.7,403.0 620.6,403.1 619.4,403.2 618.2,403.2 617.0,403.1 615.8,403.2 614.6,403.1 613.4,403.2 612.3,403.3 611.1,403.1 609.9,402.9 608.7,403.0 607.5,402.9 606.3,402.9 605.2,403.0 604.0,403.0 602.8,403.0 601.6,402.7 600.4,402.8 599.2,402.7 598.0,402.6 596.9,402.8 595.7,402.8 594.5,402.5 593.3,402.5 592.1,402.3 590.9,402.6 589.7,402.5 588.6,402.7 587.4,402.7 586.2,402.8 585.0,402.7 583.8,402.7 582.6,402.8 581.5,402.9 580.3,402.7 579.1,402.8 577.9,403.0 576.7,402.9 575.5,402.8 574.3,402.8 573.2,402.8 572.0,402.9 570.8,403.1 569.6,403.1 568.4,403.1 567.2,402.9 566.0,403.0 564.9,403.0 563.7,402.9 562.5,402.9 561.3,402.7 560.1,402.7 558.9,402.6 557.8,402.7 556.6,402.7 555.4,402.8 554.2,402.8 553.0,403.0 551.8,403.1 550.6,403.0 549.5,402.8 548.3,402.9 547.1,402.8 545.9,402.9 544.7,402.9 543.5,402.8 542.3,402.6 541.2,402.8 540.0,403.1 538.8,403.2 537.6,403.3 536.4,403.2 535.2,403.0 534.1,402.8 532.9,402.9 531.7,402.9 530.5,402.8 529.3,402.6 528.1,402.7 526.9,402.5 525.8,402.5 524.6,402.6 523.4,402.7 522.2,402.8 521.0,402.9 519.8,403.0 518.6,402.9 517.5,402.7 516.3,402.8 515.1,402.9 513.9,402.9 512.7,403.0 511.5,402.8 510.4,402.6 509.2,402.5 508.0,402.5 506.8,402.5 505.6,402.6 504.4,402.4 503.2,402.4 502.1,402.5 500.9,402.7 499.7,402.8 498.5,402.8 497.3,403.0 496.1,402.9 494.9,402.8 493.8,403.0 492.6,402.9 491.4,402.8 490.2,402.9 489.0,402.8 487.8,402.6 486.7,402.6 485.5,402.8 484.3,402.8 483.1,402.8 481.9,402.8 480.7,403.0 479.5,402.9 478.4,402.9 477.2,403.0 476.0,403.1 474.8,403.0 473.6,403.1 472.4,403.1 471.2,403.1 470.1,403.0 468.9,402.9 467.7,402.8 466.5,402.8 465.3,402.8 464.1,402.9 463.0,402.9 461.8,402.6 460.6,402.6 459.4,402.6 458.2,402.7 457.0,402.8 455.8,402.8 454.7,402.7 453.5,402.6 452.3,402.6 451.1,402.6 449.9,402.7 448.7,402.8 447.5,402.8 446.4,402.7 445.2,402.7 444.0,402.7 442.8,402.7 441.6,402.8 440.4,403.0 439.3,403.0 438.1,402.9 436.9,402.9 435.7,403.0 434.5,403.3 433.3,403.3 432.1,403.3 431.0,403.3 429.8,403.2 428.6,402.9 427.4,403.1 426.2,403.1 425.0,403.1 423.8,403.0 422.7,402.9 421.5,403.1 420.3,403.0 419.1,403.2 417.9,403.4 416.7,403.2 415.6,403.2 414.4,403.1 413.2,403.0 412.0,403.1 410.8,403.1 409.6,403.0 408.4,403.0 407.3,403.2 406.1,403.2 404.9,403.2 403.7,403.3 402.5,403.6 401.3,403.8 400.1,403.9 399.0,404.3 397.8,404.2 396.6,404.0 395.4,404.1 394.2,404.2 393.0,404.2 391.9,403.8 390.7,403.7 389.5,403.8 388.3,403.6 387.1,403.6 385.9,403.7 384.7,403.8 383.6,403.6 382.4,403.6 381.2,403.6 380.0,403.7 378.8,403.5 377.6,403.7 376.4,403.8 375.3,404.0 374.1,403.9 372.9,404.1 371.7,404.2 370.5,404.2 369.3,404.3 368.2,404.5 367.0,404.4 365.8,404.5 364.6,404.5 363.4,404.5 362.2,404.5 361.0,404.6 359.9,404.6 358.7,404.7 357.5,404.8 356.3,404.7 355.1,404.5 353.9,404.6 352.7,404.5 351.6,404.7 350.4,404.9 349.2,404.7 348.0,404.3 346.8,404.0 345.6,404.1 344.5,404.0 343.3,404.1 342.1,404.0 340.9,403.9 339.7,403.7 338.5,403.8 337.3,404.0 336.2,404.0 335.0,404.1 333.8,404.1 332.6,403.9 331.4,404.3 330.2,404.3 329.0,404.4 327.9,404.5 326.7,404.5 325.5,404.5 324.3,404.6 323.1,404.8 321.9,404.8 320.8,404.8 319.6,404.8 318.4,404.8 317.2,404.9 316.0,405.2 314.8,405.0 313.6,405.2 312.5,405.3 311.3,405.5 310.1,405.5 308.9,405.4 307.7,405.6 306.5,405.6 305.3,405.6 304.2,405.7 303.0,405.8 301.8,405.8 300.6,405.8 299.4,406.0 298.2,405.9 297.1,405.7 295.9,405.9 294.7,406.0 293.5,405.9 292.3,405.8 291.1,406.0 289.9,406.0 288.8,405.9 287.6,406.1 286.4,406.3 285.2,406.2 284.0,406.3 282.8,406.5 281.6,406.3 280.5,406.1 279.3,405.9 278.1,406.1 276.9,406.2 275.7,406.3 274.5,406.3 273.4,406.3 272.2,406.2 271.0,406.5 269.8,406.5 268.6,406.8 267.4,406.6 266.2,406.3 265.1,406.0 263.9,406.3 262.7,406.2 261.5,406.3 260.3,406.3 259.1,406.2 257.9,406.5 256.8,406.3 255.6,407.0 254.4,407.1 253.2,407.1 252.0,407.5 250.8,407.7 249.7,407.6 248.5,407.8 247.3,407.5 246.1,407.5 244.9,407.3 243.7,407.4 242.5,407.4 241.4,407.1 240.2,407.1 239.0,407.2 237.8,407.2 236.6,407.1 235.4,407.3 234.2,407.3 233.1,407.2 231.9,407.0 230.7,407.2 229.5,407.4 228.3,406.8 227.1,406.9 226.0,407.2 224.8,407.2 223.6,407.6 222.4,408.0 221.2,408.0 220.0,408.2 218.8,407.9 217.7,408.4 216.5,408.2 215.3,408.1 214.1,408.0 212.9,407.7 211.7,407.2 210.5,407.1 209.4,407.0 208.2,407.1 207.0,407.3 205.8,407.6 204.6,407.6 203.4,407.7 202.3,407.7 201.1,408.0 199.9,407.9 198.7,407.9 197.5,408.0 196.3,407.9 195.1,407.7 194.0,407.5 192.8,407.6 191.6,407.7 190.4,408.0 189.2,408.2 188.0,408.3 186.8,408.5 185.7,408.3 184.5,408.2 183.3,408.6 182.1,408.7 180.9,408.8 179.7,408.5 178.6,408.7 177.4,408.5 176.2,408.4 175.0,408.4 173.8,408.5 172.6,408.5 171.4,408.2 170.3,408.1 169.1,408.1 167.9,408.2 166.7,408.6 165.5,408.4 164.3,408.4 163.1,408.9 162.0,409.0 160.8,409.1 159.6,409.5 158.4,409.5 157.2,409.6 156.0,409.7 154.9,410.0 153.7,410.7 152.5,410.7 151.3,411.0 150.1,411.1 148.9,410.9 147.7,411.6 146.6,411.7 145.4,412.1 144.2,412.9 143.0,413.6 141.8,414.6 140.6,414.9 139.4,415.8 138.3,416.5 137.1,417.7 135.9,418.7 134.7,418.9 133.5,419.0 132.3,419.9 131.2,420.0 130.0,421.3 128.8,422.1 127.6,422.7 126.4,421.9 125.2,422.4 124.0,422.3 122.9,422.4 121.7,422.3 120.5,422.2 119.3,421.4 118.1,420.8 116.9,420.3 115.7,420.4 114.6,419.4 113.4,419.7 112.2,420.1 111.0,419.9 109.8,420.3 108.6,420.5 107.5,420.5 106.3,420.2 105.1,420.0 103.9,420.4 102.7,420.4 101.5,420.0" fill="#808080" fill-opacity="0.5"/>
<line x1="101.6" y1="398.8" x2="1299.3" y2="398.8" stroke="#707070" stroke-width="2"/>
<pattern id="hatch" patternUnits="userSpaceOnUse" width="12" height="21" patternTransform="translate(0,0)"><path d="M-1,9.5 L13,-1.5" stroke="#111" stroke-width="1"/><path d="M-1,30.5 L13,19.5" stroke="#111" stroke-width="1"/></pattern>
<rect x="132.2" y="348.4" width="11.2" height="84.0" fill="#8a8a8a" fill-opacity="0.75" stroke="#222" stroke-width="1.2"/>
<rect x="132.2" y="348.4" width="11.2" height="84.0" fill="url(#hatch)"/>
<rect x="1271.6" y="348.4" width="6.7" height="84.0" fill="#8a8a8a" fill-opacity="0.75" stroke="#222" stroke-width="1.2"/>
<rect x="1271.6" y="348.4" width="6.7" height="84.0" fill="url(#hatch)"/>
<clipPath id="spc"><rect x="101.6" y="348.4" width="1197.7" height="84.0"/></clipPath>
<polyline points="100.9,396.2 104.5,377.0 105.7,416.9 107.5,392.1 109.2,406.6 112.8,364.1 115.7,412.3 117.5,386.9 118.7,394.1 121.1,357.9 125.2,400.4 126.4,355.8 127.6,385.9 130.6,357.9 132.3,387.9 134.1,372.9 135.3,403.5 137.1,386.9 138.3,427.3 142.4,406.6 143.6,410.7 147.7,400.4 149.5,387.9 153.1,372.4 153.7,393.1 156.6,371.3 158.4,362.0 160.8,391.0 163.1,367.7 164.9,386.9 166.7,367.2 169.1,375.5 170.8,370.3 174.4,389.0 176.8,377.6 182.7,368.2 185.7,384.8 187.4,369.3 190.7,376.4 195.0,360.4 197.6,387.1 201.4,367.9 206.8,353.9 208.9,355.0 213.2,386.1 216.4,371.1 219.6,375.4 223.9,367.9 227.1,370.0 231.0,386.1 234.6,372.1 236.8,388.2 239.6,356.1 242.6,372.1 245.4,374.3 247.5,380.7 250.7,391.4 252.8,365.7 255.4,388.2 258.2,367.9 259.7,390.4 261.4,352.9 264.6,378.6 267.4,365.7 270.0,377.5 272.1,365.7 275.3,375.4 277.5,390.4 279.6,360.4 282.8,378.6 285.4,389.3 289.3,363.6 292.5,368.9 296.8,379.6 300.0,366.8 304.3,370.0 307.5,381.8 310.3,387.1 315.0,361.4 319.3,370.0 322.5,366.8 325.7,375.4 328.9,365.7 333.8,359.3 336.4,372.1 339.6,365.7 343.9,386.1 347.1,372.1 350.3,370.0 353.6,366.8 356.8,363.6 359.6,381.8 363.2,361.4 366.4,376.4 369.6,391.4 373.9,360.4 377.1,364.6 380.3,368.9 383.6,376.4 387.8,378.6 389.6,386.1 393.2,374.3 396.4,377.5 399.6,370.0 402.8,382.9 406.1,372.1 409.3,368.9 412.5,360.4 415.7,368.9 418.9,372.1 422.1,371.1 426.4,379.6 428.6,359.3 431.8,364.6 433.9,360.4 438.2,370.0 441.4,367.9 445.7,377.5 450.0,370.0 451.2,369.8 452.3,372.8 453.5,381.7 454.7,376.2 455.9,383.8 457.1,373.8 458.3,374.5 459.5,376.7 460.6,374.0 461.8,370.3 463.0,378.5 464.2,383.7 465.4,380.6 466.6,384.5 467.8,380.7 468.9,364.7 470.1,373.8 471.3,370.0 472.5,377.4 473.7,372.5 474.9,372.5 476.0,372.3 477.2,368.4 478.4,360.8 479.6,366.8 480.8,370.3 482.0,376.3 483.2,370.2 484.3,371.5 485.5,367.4 486.7,370.0 487.9,362.2 489.1,378.5 490.3,377.0 491.5,367.3 492.6,371.5 493.8,376.3 495.0,374.4 496.2,379.3 497.4,373.5 498.6,358.2 499.7,360.5 500.9,375.0 502.1,378.3 503.3,375.3 504.5,366.9 505.7,373.8 506.9,376.7 508.0,368.1 509.2,365.1 510.4,371.7 511.6,378.1 512.8,381.9 514.0,378.2 515.2,384.7 516.3,371.9 517.5,373.3 518.7,370.2 519.9,360.6 521.1,361.6 522.3,375.2 523.4,369.2 524.6,363.6 525.8,373.1 527.0,378.0 528.2,373.9 529.4,380.2 530.6,366.9 531.7,381.3 532.9,382.1 534.1,375.1 535.3,373.2 536.5,371.1 537.7,369.7 538.9,372.1 540.0,366.0 541.2,380.5 542.4,375.7 543.6,375.3 544.8,372.2 546.0,370.1 547.1,375.9 548.3,376.7 549.5,368.6 550.7,368.1 551.9,374.4 553.1,362.2 554.3,355.5 555.4,374.7 556.6,372.8 557.8,357.8 559.0,362.5 560.2,368.9 561.4,372.2 562.6,374.8 563.7,373.7 564.9,374.9 566.1,368.8 567.3,372.2 568.5,374.6 569.7,378.7 570.8,374.2 572.0,376.3 573.2,374.3 574.4,366.5 575.6,367.7 576.8,368.3 578.0,368.8 579.1,370.6 580.3,372.1 581.5,373.4 582.7,368.3 583.9,375.7 585.1,366.8 586.3,368.8 587.4,375.4 588.6,375.6 589.8,376.1 591.0,372.1 592.2,375.0 593.4,367.1 594.5,373.5 595.7,384.9 596.9,379.8 598.1,383.4 599.3,375.7 600.5,366.3 601.7,366.3 602.8,377.3 604.0,378.2 605.2,364.0 606.4,366.6 607.6,371.0 608.8,366.2 610.0,357.0 611.1,360.3 612.3,368.5 613.5,369.6 614.7,367.8 615.9,373.6 617.1,378.3 618.2,373.4 619.4,376.4 620.6,373.8 621.8,371.3 623.0,359.5 624.2,371.6 625.4,373.9 626.5,372.8 627.7,369.8 628.9,365.5 630.1,372.2 631.3,376.8 632.5,381.6 633.7,379.6 634.8,370.8 636.0,370.5 637.2,376.8 638.4,375.6 639.6,372.3 640.8,369.1 641.9,373.8 643.1,374.1 644.3,381.4 645.5,381.0 646.7,365.7 647.9,379.8 649.1,377.6 650.2,371.3 651.4,373.2 652.6,376.6 653.8,373.6 655.0,371.9 656.2,372.2 657.4,381.4 658.5,376.1 659.7,376.4 660.9,376.2 662.1,371.7 663.3,368.1 664.5,366.0 665.6,372.6 666.8,368.1 668.0,364.1 669.2,363.9 670.4,362.7 671.6,369.9 672.8,372.9 673.9,368.0 675.1,377.1 676.3,373.3 677.5,374.1 678.7,374.7 679.9,381.2 681.1,379.6 682.2,373.6 683.4,367.4 684.6,365.2 685.8,370.4 687.0,372.9 688.2,376.3 689.3,371.4 690.5,372.3 691.7,369.3 692.9,362.0 694.1,368.7 695.3,379.4 696.5,378.9 697.6,380.7 698.8,380.5 700.0,367.6 701.2,368.3 702.4,379.0 703.6,371.4 704.8,364.4 705.9,371.3 707.1,375.9 708.3,374.8 709.5,371.1 710.7,368.2 711.9,364.9 713.0,363.8 714.2,363.9 715.4,363.1 716.6,366.2 717.8,378.2 719.0,375.4 720.2,370.7 721.3,373.2 722.5,368.2 723.7,372.1 724.9,377.1 726.1,366.7 727.3,366.2 728.5,369.7 729.6,367.2 730.8,365.3 732.0,368.5 733.2,383.1 734.4,379.6 735.6,375.4 736.7,377.5 737.9,372.8 739.1,366.1 740.3,372.2 741.5,378.3 742.7,364.5 743.9,370.6 745.0,378.7 746.2,373.1 747.4,369.7 748.6,374.6 749.8,369.7 751.0,373.0 752.2,377.2 753.3,372.9 754.5,368.3 755.7,373.7 756.9,371.7 758.1,372.0 759.3,359.4 760.4,370.6 761.6,367.1 762.8,370.0 764.0,372.8 765.2,369.1 766.4,366.9 767.6,364.9 768.7,368.5 769.9,374.4 771.1,375.7 772.3,370.8 773.5,368.7 774.7,364.9 775.9,368.0 777.0,366.7 778.2,363.6 779.4,368.9 780.6,378.7 781.8,380.2 783.0,380.8 784.1,367.5 785.3,373.4 786.5,368.1 787.7,367.5 788.9,363.5 790.1,364.8 791.3,371.1 792.4,373.4 793.6,372.3 794.8,371.4 796.0,374.5 797.2,373.4 798.4,365.1 799.6,377.3 800.7,374.1 801.9,376.0 803.1,373.1 804.3,368.3 805.5,371.2 806.7,369.0 807.8,378.3 809.0,370.1 810.2,373.3 811.4,370.6 812.6,370.6 813.8,383.8 815.0,380.2 816.1,372.7 817.3,365.1 818.5,368.5 819.7,370.8 820.9,378.4 822.1,368.4 823.3,361.9 824.4,369.3 825.6,373.4 826.8,380.2 828.0,371.3 829.2,358.9 830.4,364.7 831.5,365.6 832.7,368.0 833.9,376.1 835.1,368.2 836.3,375.9 837.5,375.6 838.7,371.7 839.8,368.1 841.0,369.2 842.2,370.2 843.4,375.4 844.6,379.7 845.8,374.5 847.0,375.7 848.1,379.7 849.3,380.5 850.5,377.0 851.7,381.8 852.9,381.8 854.1,382.2 855.2,374.6 856.4,370.5 857.6,363.0 858.8,376.0 860.0,378.2 861.2,369.7 862.4,372.1 863.5,374.5 864.7,365.6 865.9,371.4 867.1,378.5 868.3,380.5 869.5,373.4 870.7,370.8 871.8,378.4 873.0,379.4 874.2,372.0 875.4,369.3 876.6,374.7 877.8,371.1 878.9,369.2 880.1,379.8 881.3,377.2 882.5,371.5 883.7,374.7 884.9,383.3 886.1,377.6 887.2,370.0 888.4,364.5 889.6,379.9 890.8,364.9 892.0,373.5 893.2,370.5 894.4,365.8 895.5,366.4 896.7,370.6 897.9,377.8 899.1,372.0 900.3,375.0 901.5,385.3 902.6,364.6 903.8,365.1 905.0,363.7 906.2,373.9 907.4,367.9 908.6,363.5 909.8,363.4 910.9,370.5 912.1,378.3 913.3,375.7 914.5,383.0 915.7,384.2 916.9,375.4 918.1,377.2 919.2,375.4 920.4,373.8 921.6,364.7 922.8,364.1 924.0,371.1 925.2,367.8 926.3,374.5 927.5,375.8 928.7,369.6 929.9,377.0 931.1,376.3 932.3,379.3 933.5,374.7 934.6,365.7 935.8,373.7 937.0,373.3 938.2,376.7 939.4,379.6 940.6,380.4 941.8,368.7 942.9,360.3 944.1,367.1 945.3,375.5 946.5,371.2 947.7,373.4 948.9,370.2 950.0,370.6 951.2,371.5 952.4,370.0 953.6,374.7 954.8,375.9 956.0,381.4 957.2,378.0 958.3,380.2 959.5,376.2 960.7,377.6 961.9,374.3 963.1,371.1 964.3,378.7 965.5,379.1 966.6,378.7 967.8,371.5 969.0,364.6 970.2,366.7 971.4,373.4 972.6,367.4 973.7,377.5 974.9,369.2 976.1,373.7 977.3,386.5 978.5,366.3 979.7,362.1 980.9,375.2 982.0,374.3 983.2,374.0 984.4,373.2 985.6,379.6 986.8,378.7 988.0,372.4 989.2,371.6 990.3,367.8 991.5,371.1 992.7,363.0 993.9,372.7 995.1,373.4 996.3,381.3 997.4,382.0 998.6,369.7 999.8,375.3 1001.0,372.7 1002.2,372.8 1003.4,378.1 1004.6,376.7 1005.7,376.3 1006.9,376.4 1008.1,371.0 1009.3,369.4 1010.5,375.0 1011.7,378.4 1012.9,373.8 1014.0,373.5 1015.2,369.2 1016.4,360.3 1017.6,365.6 1018.8,372.4 1020.0,374.4 1021.1,377.6 1022.3,379.0 1023.5,379.5 1024.7,377.0 1025.9,376.1 1027.1,371.1 1028.3,374.2 1029.4,375.2 1030.6,379.3 1031.8,368.5 1033.0,368.8 1034.2,365.1 1035.4,367.3 1036.6,366.0 1037.7,372.4 1038.9,371.0 1040.1,360.8 1041.3,374.7 1042.5,370.7 1043.7,364.5 1044.8,369.2 1046.0,369.8 1047.2,367.0 1048.4,374.7 1049.6,373.1 1050.8,377.0 1052.0,378.3 1053.1,377.8 1054.3,375.6 1055.5,373.5 1056.7,371.6 1057.9,379.5 1059.1,367.5 1060.3,365.5 1061.4,368.8 1062.6,374.3 1063.8,375.0 1065.0,371.7 1066.2,371.2 1067.4,380.8 1068.5,373.5 1069.7,359.8 1070.9,377.4 1072.1,372.7 1073.3,370.7 1074.5,373.9 1075.7,368.1 1076.8,377.1 1078.0,375.3 1079.2,367.3 1080.4,372.5 1081.6,376.3 1082.8,374.3 1084.0,375.9 1085.1,368.0 1086.3,375.6 1087.5,371.8 1088.7,378.3 1089.9,373.3 1091.1,373.6 1092.2,385.9 1093.4,378.6 1094.6,379.0 1095.8,378.0 1097.0,368.1 1098.2,376.7 1099.4,380.9 1100.5,369.6 1101.7,371.4 1102.9,367.2 1104.1,370.3 1105.3,377.7 1106.5,376.1 1107.7,369.0 1108.8,368.1 1110.0,372.8 1111.2,374.2 1112.4,374.8 1113.6,377.2 1114.8,366.7 1115.9,371.1 1117.1,379.5 1118.3,378.5 1119.5,372.0 1120.7,370.4 1121.9,374.0 1123.1,377.7 1124.2,375.5 1125.4,381.9 1126.6,383.1 1127.8,373.1 1129.0,375.3 1130.2,373.7 1131.4,368.5 1132.5,369.6 1133.7,373.4 1134.9,365.0 1136.1,368.0 1137.3,375.1 1138.5,371.9 1139.6,371.6 1140.8,377.8 1142.0,375.8 1143.2,375.3 1144.4,383.7 1145.6,378.7 1146.8,376.2 1147.9,377.1 1149.1,382.8 1150.3,379.1 1151.5,375.5 1152.7,374.3 1153.9,379.7 1155.1,373.8 1156.2,379.1 1157.4,377.8 1158.6,369.3 1159.8,375.7 1161.0,378.3 1162.2,370.9 1163.3,374.7 1164.5,376.8 1165.7,374.4 1166.9,369.8 1168.1,383.0 1169.3,382.3 1170.5,380.8 1171.6,381.4 1172.8,380.6 1174.0,380.1 1175.2,375.0 1176.4,378.4 1177.6,375.9 1178.8,373.0 1179.9,377.6 1181.1,375.6 1182.3,367.5 1183.5,370.8 1184.7,377.3 1185.9,376.4 1187.0,379.2 1188.2,375.4 1189.4,370.8 1190.6,377.3 1191.8,377.4 1193.0,370.5 1194.2,375.5 1195.3,375.1 1196.5,379.4 1197.7,380.5 1198.9,378.8 1200.1,366.5 1201.3,373.4 1202.5,378.1 1203.6,378.5 1204.8,376.8 1206.0,372.6 1207.2,373.3 1208.4,366.0 1209.6,370.9 1210.7,368.6 1211.9,371.7 1213.1,372.2 1214.3,380.6 1215.5,378.2 1216.7,375.8 1217.9,376.5 1219.0,385.1 1220.2,375.0 1221.4,375.6 1222.6,377.9 1223.8,377.2 1225.0,376.8 1226.2,374.0 1227.3,380.3 1228.5,381.5 1229.7,375.7 1230.9,374.3 1232.1,376.8 1233.3,378.5 1234.4,380.0 1235.6,377.1 1236.8,370.4 1238.0,378.2 1239.2,370.6 1240.4,369.3 1241.6,376.1 1242.7,372.9 1243.9,380.6 1245.1,385.5 1246.3,384.0 1247.5,379.4 1248.7,377.7 1249.9,378.4 1251.0,376.0 1252.2,384.7 1253.4,376.9 1254.6,381.0 1255.8,380.8 1257.0,378.5 1258.1,381.4 1259.3,383.5 1260.5,382.3 1261.7,377.4 1262.9,373.1 1264.1,372.3 1265.3,379.1 1266.4,380.8 1267.6,381.0 1268.8,375.3 1270.0,383.9 1271.2,373.7 1272.4,375.9 1273.6,380.0 1274.7,375.6 1275.9,370.8 1277.1,372.6 1278.3,370.7 1279.5,373.5 1280.7,370.3 1281.8,368.4 1283.0,374.3 1284.2,369.8 1285.4,372.8 1286.6,375.3 1287.8,379.8 1289.0,378.7 1290.1,373.0 1291.3,380.4 1292.5,375.3 1293.7,373.4 1294.9,374.2 1296.1,385.1 1297.3,380.0 1298.4,373.4" fill="none" stroke="#0000ff" stroke-width="1.3" stroke-linejoin="round" clip-path="url(#spc)"/>
<line x1="158.4" y1="348.4" x2="158.4" y2="432.4" stroke="#555" stroke-width="1.1" stroke-dasharray="3.5,2"/>
<line x1="389.9" y1="348.4" x2="389.9" y2="432.4" stroke="#333" stroke-width="1.4" stroke-dasharray="1.3,1.1"/>
<rect x="101.6" y="348.4" width="1197.7" height="84.0" fill="none" stroke="#222" stroke-width="1"/>
<line x1="111.6" y1="432.4" x2="111.6" y2="435.9" stroke="#222" stroke-width="0.9"/>
<text x="111.60" y="447.80" font-family="Liberation Sans" font-size="10" fill="#111" stroke="#111" stroke-width="0.22" text-anchor="middle" textLength="23.4" lengthAdjust="spacingAndGlyphs" >3500</text>
<line x1="170.8" y1="432.4" x2="170.8" y2="435.9" stroke="#222" stroke-width="0.9"/>
<text x="170.85" y="447.80" font-family="Liberation Sans" font-size="10" fill="#111" stroke="#111" stroke-width="0.22" text-anchor="middle" textLength="23.4" lengthAdjust="spacingAndGlyphs" >3600</text>
<line x1="230.1" y1="432.4" x2="230.1" y2="435.9" stroke="#222" stroke-width="0.9"/>
<text x="230.10" y="447.80" font-family="Liberation Sans" font-size="10" fill="#111" stroke="#111" stroke-width="0.22" text-anchor="middle" textLength="23.4" lengthAdjust="spacingAndGlyphs" >3700</text>
<line x1="289.4" y1="432.4" x2="289.4" y2="435.9" stroke="#222" stroke-width="0.9"/>
<text x="289.35" y="447.80" font-family="Liberation Sans" font-size="10" fill="#111" stroke="#111" stroke-width="0.22" text-anchor="middle" textLength="23.4" lengthAdjust="spacingAndGlyphs" >3800</text>
<line x1="348.6" y1="432.4" x2="348.6" y2="435.9" stroke="#222" stroke-width="0.9"/>
<text x="348.60" y="447.80" font-family="Liberation Sans" font-size="10" fill="#111" stroke="#111" stroke-width="0.22" text-anchor="middle" textLength="23.4" lengthAdjust="spacingAndGlyphs" >3900</text>
<line x1="407.9" y1="432.4" x2="407.9" y2="435.9" stroke="#222" stroke-width="0.9"/>
<text x="407.85" y="447.80" font-family="Liberation Sans" font-size="10" fill="#111" stroke="#111" stroke-width="0.22" text-anchor="middle" textLength="23.4" lengthAdjust="spacingAndGlyphs" >4000</text>
<line x1="467.1" y1="432.4" x2="467.1" y2="435.9" stroke="#222" stroke-width="0.9"/>
<text x="467.10" y="447.80" font-family="Liberation Sans" font-size="10" fill="#111" stroke="#111" stroke-width="0.22" text-anchor="middle" textLength="23.4" lengthAdjust="spacingAndGlyphs" >4100</text>
<line x1="526.4" y1="432.4" x2="526.4" y2="435.9" stroke="#222" stroke-width="0.9"/>
<text x="526.35" y="447.80" font-family="Liberation Sans" font-size="10" fill="#111" stroke="#111" stroke-width="0.22" text-anchor="middle" textLength="23.4" lengthAdjust="spacingAndGlyphs" >4200</text>
<line x1="585.6" y1="432.4" x2="585.6" y2="435.9" stroke="#222" stroke-width="0.9"/>
<text x="585.60" y="447.80" font-family="Liberation Sans" font-size="10" fill="#111" stroke="#111" stroke-width="0.22" text-anchor="middle" textLength="23.4" lengthAdjust="spacingAndGlyphs" >4300</text>
<line x1="644.9" y1="432.4" x2="644.9" y2="435.9" stroke="#222" stroke-width="0.9"/>
<text x="644.85" y="447.80" font-family="Liberation Sans" font-size="10" fill="#111" stroke="#111" stroke-width="0.22" text-anchor="middle" textLength="23.4" lengthAdjust="spacingAndGlyphs" >4400</text>
<line x1="704.1" y1="432.4" x2="704.1" y2="435.9" stroke="#222" stroke-width="0.9"/>
<text x="704.10" y="447.80" font-family="Liberation Sans" font-size="10" fill="#111" stroke="#111" stroke-width="0.22" text-anchor="middle" textLength="23.4" lengthAdjust="spacingAndGlyphs" >4500</text>
<line x1="763.4" y1="432.4" x2="763.4" y2="435.9" stroke="#222" stroke-width="0.9"/>
<text x="763.35" y="447.80" font-family="Liberation Sans" font-size="10" fill="#111" stroke="#111" stroke-width="0.22" text-anchor="middle" textLength="23.4" lengthAdjust="spacingAndGlyphs" >4600</text>
<line x1="822.6" y1="432.4" x2="822.6" y2="435.9" stroke="#222" stroke-width="0.9"/>
<text x="822.60" y="447.80" font-family="Liberation Sans" font-size="10" fill="#111" stroke="#111" stroke-width="0.22" text-anchor="middle" textLength="23.4" lengthAdjust="spacingAndGlyphs" >4700</text>
<line x1="881.9" y1="432.4" x2="881.9" y2="435.9" stroke="#222" stroke-width="0.9"/>
<text x="881.85" y="447.80" font-family="Liberation Sans" font-size="10" fill="#111" stroke="#111" stroke-width="0.22" text-anchor="middle" textLength="23.4" lengthAdjust="spacingAndGlyphs" >4800</text>
<line x1="941.1" y1="432.4" x2="941.1" y2="435.9" stroke="#222" stroke-width="0.9"/>
<text x="941.10" y="447.80" font-family="Liberation Sans" font-size="10" fill="#111" stroke="#111" stroke-width="0.22" text-anchor="middle" textLength="23.4" lengthAdjust="spacingAndGlyphs" >4900</text>
<line x1="1000.4" y1="432.4" x2="1000.4" y2="435.9" stroke="#222" stroke-width="0.9"/>
<text x="1000.35" y="447.80" font-family="Liberation Sans" font-size="10" fill="#111" stroke="#111" stroke-width="0.22" text-anchor="middle" textLength="23.4" lengthAdjust="spacingAndGlyphs" >5000</text>
<line x1="1059.6" y1="432.4" x2="1059.6" y2="435.9" stroke="#222" stroke-width="0.9"/>
<text x="1059.60" y="447.80" font-family="Liberation Sans" font-size="10" fill="#111" stroke="#111" stroke-width="0.22" text-anchor="middle" textLength="23.4" lengthAdjust="spacingAndGlyphs" >5100</text>
<line x1="1118.8" y1="432.4" x2="1118.8" y2="435.9" stroke="#222" stroke-width="0.9"/>
<text x="1118.85" y="447.80" font-family="Liberation Sans" font-size="10" fill="#111" stroke="#111" stroke-width="0.22" text-anchor="middle" textLength="23.4" lengthAdjust="spacingAndGlyphs" >5200</text>
<line x1="1178.1" y1="432.4" x2="1178.1" y2="435.9" stroke="#222" stroke-width="0.9"/>
<text x="1178.10" y="447.80" font-family="Liberation Sans" font-size="10" fill="#111" stroke="#111" stroke-width="0.22" text-anchor="middle" textLength="23.4" lengthAdjust="spacingAndGlyphs" >5300</text>
<line x1="1237.3" y1="432.4" x2="1237.3" y2="435.9" stroke="#222" stroke-width="0.9"/>
<text x="1237.35" y="447.80" font-family="Liberation Sans" font-size="10" fill="#111" stroke="#111" stroke-width="0.22" text-anchor="middle" textLength="23.4" lengthAdjust="spacingAndGlyphs" >5400</text>
<line x1="1296.6" y1="432.4" x2="1296.6" y2="435.9" stroke="#222" stroke-width="0.9"/>
<text x="1296.60" y="447.80" font-family="Liberation Sans" font-size="10" fill="#111" stroke="#111" stroke-width="0.22" text-anchor="middle" textLength="23.4" lengthAdjust="spacingAndGlyphs" >5500</text>
<line x1="98.1" y1="372.9" x2="101.6" y2="372.9" stroke="#222" stroke-width="0.9"/>
<text x="94.70" y="376.50" font-family="Liberation Sans" font-size="10" fill="#111" stroke="#111" stroke-width="0.22" text-anchor="end" >5</text>
<line x1="98.1" y1="398.8" x2="101.6" y2="398.8" stroke="#222" stroke-width="0.9"/>
<text x="94.70" y="402.40" font-family="Liberation Sans" font-size="10" fill="#111" stroke="#111" stroke-width="0.22" text-anchor="end" >0</text>
<line x1="98.1" y1="424.7" x2="101.6" y2="424.7" stroke="#222" stroke-width="0.9"/>
<text x="94.70" y="428.30" font-family="Liberation Sans" font-size="10" fill="#111" stroke="#111" stroke-width="0.22" text-anchor="end" >−5</text>
<text x="111.00" y="346.40" font-family="Liberation Sans" font-size="10" fill="#111" stroke="#111" stroke-width="0.22" >e</text>
<text x="117.20" y="341.50" font-family="Liberation Sans" font-size="7" fill="#111" stroke="#111" stroke-width="0.15" >−17</text>
<text x="131.50" y="346.40" font-family="Liberation Sans" font-size="10" fill="#111" stroke="#111" stroke-width="0.22" >x2</text>
<text x="143.20" y="346.40" font-family="Liberation Sans" font-size="10" fill="#111" stroke="#111" stroke-width="0.22" font-style="italic" >Å</text>
<g transform="translate(157.6,320.7) rotate(90)"><text x="0.00" y="0.00" font-family="Liberation Sans" font-size="9.2" fill="#8a2be2" stroke="#8a2be2" stroke-width="0.20" textLength="17.4" lengthAdjust="spacingAndGlyphs" >SiIV</text></g>
<g transform="translate(158.3,344.0) rotate(90)"><text x="0.00" y="0.00" font-family="Liberation Sans" font-size="9" fill="#8a2be2" stroke="#8a2be2" stroke-width="0.20" >{</text></g>
<g transform="translate(244.7,322.9) rotate(90)"><text x="0.00" y="0.00" font-family="Liberation Sans" font-size="9.2" fill="#87ceeb" stroke="#87ceeb" stroke-width="0.20" textLength="12.7" lengthAdjust="spacingAndGlyphs" >OII</text></g>
<g transform="translate(245.4,344.0) rotate(90)"><text x="0.00" y="0.00" font-family="Liberation Sans" font-size="9" fill="#87ceeb" stroke="#87ceeb" stroke-width="0.20" >{</text></g>
<g transform="translate(256.5,320.2) rotate(90)"><text x="0.00" y="0.00" font-family="Liberation Sans" font-size="9.2" fill="#ffa500" stroke="#ffa500" stroke-width="0.20" textLength="15.4" lengthAdjust="spacingAndGlyphs" >CIV</text></g>
<g transform="translate(257.2,344.0) rotate(90)"><text x="0.00" y="0.00" font-family="Liberation Sans" font-size="9" fill="#ffa500" stroke="#ffa500" stroke-width="0.20" >{</text></g>
<g transform="translate(264.7,322.9) rotate(90)"><text x="0.00" y="0.00" font-family="Liberation Sans" font-size="9.2" fill="#87ceeb" stroke="#87ceeb" stroke-width="0.20" textLength="12.7" lengthAdjust="spacingAndGlyphs" >OII</text></g>
<g transform="translate(265.4,344.0) rotate(90)"><text x="0.00" y="0.00" font-family="Liberation Sans" font-size="9" fill="#87ceeb" stroke="#87ceeb" stroke-width="0.20" >{</text></g>
<g transform="translate(435.6,319.9) rotate(90)"><text x="0.00" y="0.00" font-family="Liberation Sans" font-size="9.2" fill="#ff0000" stroke="#ff0000" stroke-width="0.20" textLength="13.2" lengthAdjust="spacingAndGlyphs" >NV</text></g>
<g transform="translate(436.3,344.0) rotate(90)"><text x="0.00" y="0.00" font-family="Liberation Sans" font-size="9" fill="#ff0000" stroke="#ff0000" stroke-width="0.20" >{</text></g>
<g transform="translate(480.3,325.4) rotate(90)"><text x="0.00" y="0.00" font-family="Liberation Sans" font-size="9.2" fill="#ff0000" stroke="#ff0000" stroke-width="0.20" textLength="13.8" lengthAdjust="spacingAndGlyphs" >SiII</text></g>
<g transform="translate(481.0,344.0) rotate(90)"><text x="0.00" y="0.00" font-family="Liberation Sans" font-size="9" fill="#ff0000" stroke="#ff0000" stroke-width="0.20" >{</text></g>
<g transform="translate(525.6,320.7) rotate(90)"><text x="0.00" y="0.00" font-family="Liberation Sans" font-size="9.2" fill="#8a2be2" stroke="#8a2be2" stroke-width="0.20" textLength="18.0" lengthAdjust="spacingAndGlyphs" >HeII</text></g>
<g transform="translate(526.3,344.0) rotate(90)"><text x="0.00" y="0.00" font-family="Liberation Sans" font-size="9" fill="#8a2be2" stroke="#8a2be2" stroke-width="0.20" >{</text></g>
<g transform="translate(607.6,327.8) rotate(90)"><text x="0.00" y="0.00" font-family="Liberation Sans" font-size="9.2" fill="#87ceeb" stroke="#87ceeb" stroke-width="0.20" textLength="12.4" lengthAdjust="spacingAndGlyphs" >Hγ</text></g>
<g transform="translate(608.3,344.0) rotate(90)"><text x="0.00" y="0.00" font-family="Liberation Sans" font-size="9" fill="#87ceeb" stroke="#87ceeb" stroke-width="0.20" >{</text></g>
<g transform="translate(629.6,327.8) rotate(90)"><text x="0.00" y="0.00" font-family="Liberation Sans" font-size="9.2" fill="#87ceeb" stroke="#87ceeb" stroke-width="0.20" textLength="12.4" lengthAdjust="spacingAndGlyphs" >Hγ</text></g>
<g transform="translate(630.3,344.0) rotate(90)"><text x="0.00" y="0.00" font-family="Liberation Sans" font-size="9" fill="#87ceeb" stroke="#87ceeb" stroke-width="0.20" >{</text></g>
<g transform="translate(740.4,321.3) rotate(90)"><text x="0.00" y="0.00" font-family="Liberation Sans" font-size="9.2" fill="#ff0000" stroke="#ff0000" stroke-width="0.20" textLength="17.4" lengthAdjust="spacingAndGlyphs" >SiIV</text></g>
<g transform="translate(741.1,344.0) rotate(90)"><text x="0.00" y="0.00" font-family="Liberation Sans" font-size="9" fill="#ff0000" stroke="#ff0000" stroke-width="0.20" >{</text></g>
<g transform="translate(774.1,328.1) rotate(90)"><text x="0.00" y="0.00" font-family="Liberation Sans" font-size="9.2" fill="#008000" stroke="#008000" stroke-width="0.20" textLength="12.4" lengthAdjust="spacingAndGlyphs" >Hγ</text></g>
<g transform="translate(774.8,344.0) rotate(90)"><text x="0.00" y="0.00" font-family="Liberation Sans" font-size="9" fill="#008000" stroke="#008000" stroke-width="0.20" >{</text></g>
<g transform="translate(899.8,324.1) rotate(90)"><text x="0.00" y="0.00" font-family="Liberation Sans" font-size="9.2" fill="#800080" stroke="#800080" stroke-width="0.20" textLength="11.8" lengthAdjust="spacingAndGlyphs" >CII</text></g>
<g transform="translate(900.5,344.0) rotate(90)"><text x="0.00" y="0.00" font-family="Liberation Sans" font-size="9" fill="#800080" stroke="#800080" stroke-width="0.20" >{</text></g>
<g transform="translate(917.3,328.1) rotate(90)"><text x="0.00" y="0.00" font-family="Liberation Sans" font-size="9.2" fill="#87ceeb" stroke="#87ceeb" stroke-width="0.20" textLength="12.8" lengthAdjust="spacingAndGlyphs" >Hβ</text></g>
<g transform="translate(918.0,344.0) rotate(90)"><text x="0.00" y="0.00" font-family="Liberation Sans" font-size="9" fill="#87ceeb" stroke="#87ceeb" stroke-width="0.20" >{</text></g>
<g transform="translate(933.6,324.1) rotate(90)"><text x="0.00" y="0.00" font-family="Liberation Sans" font-size="9.2" fill="#8a2be2" stroke="#8a2be2" stroke-width="0.20" textLength="14.6" lengthAdjust="spacingAndGlyphs" >CIII</text></g>
<g transform="translate(934.3,344.0) rotate(90)"><text x="0.00" y="0.00" font-family="Liberation Sans" font-size="9" fill="#8a2be2" stroke="#8a2be2" stroke-width="0.20" >{</text></g>
<g transform="translate(943.3,328.1) rotate(90)"><text x="0.00" y="0.00" font-family="Liberation Sans" font-size="9.2" fill="#87ceeb" stroke="#87ceeb" stroke-width="0.20" textLength="12.8" lengthAdjust="spacingAndGlyphs" >Hβ</text></g>
<g transform="translate(944.0,344.0) rotate(90)"><text x="0.00" y="0.00" font-family="Liberation Sans" font-size="9" fill="#87ceeb" stroke="#87ceeb" stroke-width="0.20" >{</text></g>
<g transform="translate(975.3,323.6) rotate(90)"><text x="0.00" y="0.00" font-family="Liberation Sans" font-size="9.2" fill="#87ceeb" stroke="#87ceeb" stroke-width="0.20" textLength="15.4" lengthAdjust="spacingAndGlyphs" >OIII</text></g>
<g transform="translate(976.0,344.0) rotate(90)"><text x="0.00" y="0.00" font-family="Liberation Sans" font-size="9" fill="#87ceeb" stroke="#87ceeb" stroke-width="0.20" >{</text></g>
<g transform="translate(1001.0,323.6) rotate(90)"><text x="0.00" y="0.00" font-family="Liberation Sans" font-size="9.2" fill="#87ceeb" stroke="#87ceeb" stroke-width="0.20" textLength="15.4" lengthAdjust="spacingAndGlyphs" >OIII</text></g>
<g transform="translate(1001.7,344.0) rotate(90)"><text x="0.00" y="0.00" font-family="Liberation Sans" font-size="9" fill="#87ceeb" stroke="#87ceeb" stroke-width="0.20" >{</text></g>
<g transform="translate(1034.1,320.1) rotate(90)"><text x="0.00" y="0.00" font-family="Liberation Sans" font-size="9.2" fill="#ff0000" stroke="#ff0000" stroke-width="0.20" textLength="15.4" lengthAdjust="spacingAndGlyphs" >CIV</text></g>
<g transform="translate(1034.8,344.0) rotate(90)"><text x="0.00" y="0.00" font-family="Liberation Sans" font-size="9" fill="#ff0000" stroke="#ff0000" stroke-width="0.20" >{</text></g>
<g transform="translate(1103.2,328.0) rotate(90)"><text x="0.00" y="0.00" font-family="Liberation Sans" font-size="9.2" fill="#008000" stroke="#008000" stroke-width="0.20" textLength="12.8" lengthAdjust="spacingAndGlyphs" >Hβ</text></g>
<g transform="translate(1103.9,344.0) rotate(90)"><text x="0.00" y="0.00" font-family="Liberation Sans" font-size="9" fill="#008000" stroke="#008000" stroke-width="0.20" >{</text></g>
<g transform="translate(1165.2,323.5) rotate(90)"><text x="0.00" y="0.00" font-family="Liberation Sans" font-size="9.2" fill="#008000" stroke="#008000" stroke-width="0.20" textLength="15.4" lengthAdjust="spacingAndGlyphs" >OIII</text></g>
<g transform="translate(1165.9,344.0) rotate(90)"><text x="0.00" y="0.00" font-family="Liberation Sans" font-size="9" fill="#008000" stroke="#008000" stroke-width="0.20" >{</text></g>
<g transform="translate(1195.5,323.5) rotate(90)"><text x="0.00" y="0.00" font-family="Liberation Sans" font-size="9.2" fill="#008000" stroke="#008000" stroke-width="0.20" textLength="15.4" lengthAdjust="spacingAndGlyphs" >OIII</text></g>
<g transform="translate(1196.2,344.0) rotate(90)"><text x="0.00" y="0.00" font-family="Liberation Sans" font-size="9" fill="#008000" stroke="#008000" stroke-width="0.20" >{</text></g>
<g transform="translate(1210.2,321.0) rotate(90)"><text x="0.00" y="0.00" font-family="Liberation Sans" font-size="9.2" fill="#ff0000" stroke="#ff0000" stroke-width="0.20" textLength="18.0" lengthAdjust="spacingAndGlyphs" >HeII</text></g>
<g transform="translate(1210.9,344.0) rotate(90)"><text x="0.00" y="0.00" font-family="Liberation Sans" font-size="9" fill="#ff0000" stroke="#ff0000" stroke-width="0.20" >{</text></g>
<g transform="translate(772.4,281.9) rotate(90)"><text x="0.00" y="0.00" font-family="Liberation Sans" font-size="9.2" fill="#ffa500" stroke="#ffa500" stroke-width="0.20" textLength="14.6" lengthAdjust="spacingAndGlyphs" >CIII</text></g>
<g transform="translate(773.1,301.2) rotate(90)"><text x="0.00" y="0.00" font-family="Liberation Sans" font-size="9" fill="#ffa500" stroke="#ffa500" stroke-width="0.20" >{</text></g>
<g transform="translate(1003.3,281.3) rotate(90)"><text x="0.00" y="0.00" font-family="Liberation Sans" font-size="9.2" fill="#87ceeb" stroke="#87ceeb" stroke-width="0.20" textLength="15.4" lengthAdjust="spacingAndGlyphs" >OIII</text></g>
<g transform="translate(1004.0,301.2) rotate(90)"><text x="0.00" y="0.00" font-family="Liberation Sans" font-size="9" fill="#87ceeb" stroke="#87ceeb" stroke-width="0.20" >{</text></g>
<g transform="translate(1030.1,281.3) rotate(90)"><text x="0.00" y="0.00" font-family="Liberation Sans" font-size="9.2" fill="#87ceeb" stroke="#87ceeb" stroke-width="0.20" textLength="15.4" lengthAdjust="spacingAndGlyphs" >OIII</text></g>
<g transform="translate(1030.8,301.2) rotate(90)"><text x="0.00" y="0.00" font-family="Liberation Sans" font-size="9" fill="#87ceeb" stroke="#87ceeb" stroke-width="0.20" >{</text></g>
<g transform="translate(1169.2,281.5) rotate(90)"><text x="0.00" y="0.00" font-family="Liberation Sans" font-size="9.2" fill="#ff00ff" stroke="#ff00ff" stroke-width="0.20" textLength="12.7" lengthAdjust="spacingAndGlyphs" >OII</text></g>
<g transform="translate(1169.9,301.2) rotate(90)"><text x="0.00" y="0.00" font-family="Liberation Sans" font-size="9" fill="#ff00ff" stroke="#ff00ff" stroke-width="0.20" >{</text></g>
<rect x="480.2" y="449.9" width="17" height="6.2" fill="#ff0000"/>
<text x="503.60" y="456.00" font-family="Liberation Sans" font-size="8.3" fill="#444" stroke="#444" stroke-width="0.18" >Lyα</text>
<rect x="533.7" y="449.9" width="17" height="6.2" fill="#008000"/>
<text x="557.10" y="456.00" font-family="Liberation Sans" font-size="8.3" fill="#444" stroke="#444" stroke-width="0.18" >OII</text>
<rect x="586.3" y="449.9" width="17" height="6.2" fill="#8a2be2"/>
<text x="609.70" y="456.00" font-family="Liberation Sans" font-size="8.3" fill="#444" stroke="#444" stroke-width="0.18" >CIV</text>
<rect x="641.7" y="449.9" width="17" height="6.2" fill="#800080"/>
<text x="665.10" y="456.00" font-family="Liberation Sans" font-size="8.3" fill="#444" stroke="#444" stroke-width="0.18" >CIII</text>
<rect x="693.5" y="449.9" width="17" height="6.2" fill="#ff00ff"/>
<text x="716.90" y="456.00" font-family="Liberation Sans" font-size="8.3" fill="#444" stroke="#444" stroke-width="0.18" >MgII</text>
<rect x="749.3" y="449.9" width="17" height="6.2" fill="#ffa500"/>
<text x="772.70" y="456.00" font-family="Liberation Sans" font-size="8.3" fill="#444" stroke="#444" stroke-width="0.18" >HeII</text>
<rect x="803.5" y="449.9" width="17" height="6.2" fill="#87ceeb"/>
<text x="826.90" y="456.00" font-family="Liberation Sans" font-size="8.3" fill="#444" stroke="#444" stroke-width="0.18" >(K)CaII</text>
<rect x="869.3" y="449.9" width="17" height="6.2" fill="#87ceeb"/>
<text x="892.70" y="456.00" font-family="Liberation Sans" font-size="8.3" fill="#444" stroke="#444" stroke-width="0.18" >(H)CaII</text>
<text x="515.40" y="41.90" font-family="Liberation Sans" font-size="7.6" fill="#262626" stroke="#262626" stroke-width="0.17" text-anchor="middle" textLength="31.7" lengthAdjust="spacingAndGlyphs" >2D Spec</text>
<text x="608.70" y="41.60" font-family="Liberation Sans" font-size="7.6" fill="#262626" stroke="#262626" stroke-width="0.17" text-anchor="middle" textLength="34.0" lengthAdjust="spacingAndGlyphs" >Pixel Flat</text>
<text x="700.70" y="41.60" font-family="Liberation Sans" font-size="7.6" fill="#262626" stroke="#262626" stroke-width="0.17" text-anchor="middle" textLength="38.6" lengthAdjust="spacingAndGlyphs" >Smoothed</text>
<rect x="467.45" y="47.35" width="280.2" height="36.9" fill="none" stroke="#000" stroke-width="2.3"/>
<text x="749.00" y="60.70" font-family="Liberation Sans" font-size="7.6" fill="#262626" stroke="#262626" stroke-width="0.17" textLength="36.0" lengthAdjust="spacingAndGlyphs" >Weighted</text>
<text x="749.00" y="69.30" font-family="Liberation Sans" font-size="7.6" fill="#262626" stroke="#262626" stroke-width="0.17" >Sum</text>
<rect x="564.0" y="95.2" width="89.6" height="36.2" fill="#898989"/>
<rect x="626.6" y="95.2" width="1.6" height="36.2" fill="#f03030"/>
<rect x="467.2" y="94.30" width="280.7" height="38.00" fill="none" stroke="#0000ff" stroke-width="1.8"/>
<text x="446.50" y="106.00" font-family="Liberation Sans" font-size="7.6" fill="#262626" stroke="#262626" stroke-width="0.17" textLength="16.2" lengthAdjust="spacingAndGlyphs" >0.18</text>
<text x="446.50" y="114.80" font-family="Liberation Sans" font-size="7.6" fill="#262626" stroke="#262626" stroke-width="0.17" textLength="16.2" lengthAdjust="spacingAndGlyphs" >1.04</text>
<text x="446.50" y="123.60" font-family="Liberation Sans" font-size="7.6" fill="#262626" stroke="#262626" stroke-width="0.17" textLength="13.9" lengthAdjust="spacingAndGlyphs" >200</text>
<text x="750.70" y="100.20" font-family="Liberation Sans" font-size="6.3" fill="#333" stroke="#333" stroke-width="0.14" textLength="18.0" lengthAdjust="spacingAndGlyphs" >0.43&quot;</text>
<text x="750.70" y="107.60" font-family="Liberation Sans" font-size="6.3" fill="#333" stroke="#333" stroke-width="0.14" textLength="30.5" lengthAdjust="spacingAndGlyphs" >(245, 243)</text>
<text x="750.70" y="115.00" font-family="Liberation Sans" font-size="6.3" fill="#333" stroke="#333" stroke-width="0.14" textLength="30.0" lengthAdjust="spacingAndGlyphs" >20200325</text>
<text x="750.70" y="122.40" font-family="Liberation Sans" font-size="6.3" fill="#333" stroke="#333" stroke-width="0.14" textLength="23.5" lengthAdjust="spacingAndGlyphs" >v025_02</text>
<text x="750.70" y="129.80" font-family="Liberation Sans" font-size="6.3" fill="#333" stroke="#333" stroke-width="0.14" textLength="33.6" lengthAdjust="spacingAndGlyphs" >041_LL_025</text>
<rect x="564.0" y="135.0" width="89.6" height="36.1" fill="#898989"/>
<rect x="629.9" y="135.0" width="1.6" height="36.1" fill="#f03030"/>
<rect x="467.2" y="134.10" width="280.7" height="37.90" fill="none" stroke="#00ee00" stroke-width="1.8"/>
<text x="446.50" y="145.80" font-family="Liberation Sans" font-size="7.6" fill="#262626" stroke="#262626" stroke-width="0.17" textLength="16.2" lengthAdjust="spacingAndGlyphs" >0.14</text>
<text x="446.50" y="154.60" font-family="Liberation Sans" font-size="7.6" fill="#262626" stroke="#262626" stroke-width="0.17" textLength="16.2" lengthAdjust="spacingAndGlyphs" >2.26</text>
<text x="446.50" y="163.40" font-family="Liberation Sans" font-size="7.6" fill="#262626" stroke="#262626" stroke-width="0.17" textLength="13.9" lengthAdjust="spacingAndGlyphs" >180</text>
<text x="750.70" y="140.00" font-family="Liberation Sans" font-size="6.3" fill="#333" stroke="#333" stroke-width="0.14" textLength="18.0" lengthAdjust="spacingAndGlyphs" >1.09&quot;</text>
<text x="750.70" y="147.40" font-family="Liberation Sans" font-size="6.3" fill="#333" stroke="#333" stroke-width="0.14" textLength="30.5" lengthAdjust="spacingAndGlyphs" >(243, 428)</text>
<text x="750.70" y="154.80" font-family="Liberation Sans" font-size="6.3" fill="#333" stroke="#333" stroke-width="0.14" textLength="30.0" lengthAdjust="spacingAndGlyphs" >20200325</text>
<text x="750.70" y="162.20" font-family="Liberation Sans" font-size="6.3" fill="#333" stroke="#333" stroke-width="0.14" textLength="23.5" lengthAdjust="spacingAndGlyphs" >v025_03</text>
<text x="750.70" y="169.60" font-family="Liberation Sans" font-size="6.3" fill="#333" stroke="#333" stroke-width="0.14" textLength="33.6" lengthAdjust="spacingAndGlyphs" >041_LL_045</text>
<rect x="564.0" y="174.7" width="89.6" height="35.9" fill="#898989"/>
<rect x="626.6" y="174.7" width="1.6" height="35.9" fill="#f03030"/>
<rect x="467.2" y="173.80" width="280.7" height="37.70" fill="none" stroke="#ffa500" stroke-width="1.8"/>
<text x="446.50" y="185.50" font-family="Liberation Sans" font-size="7.6" fill="#262626" stroke="#262626" stroke-width="0.17" textLength="16.2" lengthAdjust="spacingAndGlyphs" >0.12</text>
<text x="446.50" y="194.30" font-family="Liberation Sans" font-size="7.6" fill="#262626" stroke="#262626" stroke-width="0.17" textLength="16.2" lengthAdjust="spacingAndGlyphs" >0.85</text>
<text x="446.50" y="203.10" font-family="Liberation Sans" font-size="7.6" fill="#262626" stroke="#262626" stroke-width="0.17" textLength="13.9" lengthAdjust="spacingAndGlyphs" >200</text>
<text x="750.70" y="179.70" font-family="Liberation Sans" font-size="6.3" fill="#333" stroke="#333" stroke-width="0.14" textLength="18.0" lengthAdjust="spacingAndGlyphs" >1.27&quot;</text>
<text x="750.70" y="187.10" font-family="Liberation Sans" font-size="6.3" fill="#333" stroke="#333" stroke-width="0.14" textLength="30.5" lengthAdjust="spacingAndGlyphs" >(245, 243)</text>
<text x="750.70" y="194.50" font-family="Liberation Sans" font-size="6.3" fill="#333" stroke="#333" stroke-width="0.14" textLength="30.0" lengthAdjust="spacingAndGlyphs" >20200325</text>
<text x="750.70" y="201.90" font-family="Liberation Sans" font-size="6.3" fill="#333" stroke="#333" stroke-width="0.14" textLength="23.5" lengthAdjust="spacingAndGlyphs" >v025_01</text>
<text x="750.70" y="209.30" font-family="Liberation Sans" font-size="6.3" fill="#333" stroke="#333" stroke-width="0.14" textLength="33.6" lengthAdjust="spacingAndGlyphs" >041_LL_025</text>
<rect x="564.0" y="214.2" width="89.6" height="36.7" fill="#898989"/>
<rect x="629.9" y="214.2" width="1.6" height="36.7" fill="#f03030"/>
<rect x="467.2" y="213.30" width="280.7" height="38.50" fill="none" stroke="#ff0000" stroke-width="1.8"/>
<text x="446.50" y="225.00" font-family="Liberation Sans" font-size="7.6" fill="#262626" stroke="#262626" stroke-width="0.17" textLength="16.2" lengthAdjust="spacingAndGlyphs" >0.10</text>
<text x="446.50" y="233.80" font-family="Liberation Sans" font-size="7.6" fill="#262626" stroke="#262626" stroke-width="0.17" textLength="16.2" lengthAdjust="spacingAndGlyphs" >1.27</text>
<text x="446.50" y="242.60" font-family="Liberation Sans" font-size="7.6" fill="#262626" stroke="#262626" stroke-width="0.17" textLength="13.9" lengthAdjust="spacingAndGlyphs" >181</text>
<text x="750.70" y="219.20" font-family="Liberation Sans" font-size="6.3" fill="#333" stroke="#333" stroke-width="0.14" textLength="18.0" lengthAdjust="spacingAndGlyphs" >1.35&quot;</text>
<text x="750.70" y="226.60" font-family="Liberation Sans" font-size="6.3" fill="#333" stroke="#333" stroke-width="0.14" textLength="30.5" lengthAdjust="spacingAndGlyphs" >(243, 419)</text>
<text x="750.70" y="234.00" font-family="Liberation Sans" font-size="6.3" fill="#333" stroke="#333" stroke-width="0.14" textLength="30.0" lengthAdjust="spacingAndGlyphs" >20200325</text>
<text x="750.70" y="241.40" font-family="Liberation Sans" font-size="6.3" fill="#333" stroke="#333" stroke-width="0.14" textLength="23.5" lengthAdjust="spacingAndGlyphs" >v025_01</text>
<text x="750.70" y="248.80" font-family="Liberation Sans" font-size="6.3" fill="#333" stroke="#333" stroke-width="0.14" textLength="33.6" lengthAdjust="spacingAndGlyphs" >041_LL_044</text>
<circle cx="571.2" cy="117.1" r="1.2" fill="#333"/>
<circle cx="568.3" cy="125.9" r="1.1" fill="#333"/>
<circle cx="571.2" cy="196.6" r="1.2" fill="#333"/>
<circle cx="568.3" cy="205.4" r="1.1" fill="#333"/>
<text x="865.30" y="47.40" font-family="Liberation Sans" font-size="9.3" fill="#262626" stroke="#262626" stroke-width="0.20" text-anchor="middle" textLength="42.7" lengthAdjust="spacingAndGlyphs" >With Sky</text>
<text x="865.30" y="58.20" font-family="Liberation Sans" font-size="9.3" fill="#262626" stroke="#262626" stroke-width="0.20" text-anchor="middle" textLength="66.8" lengthAdjust="spacingAndGlyphs" >x, y: 245, 243</text>
<text x="966.00" y="47.40" font-family="Liberation Sans" font-size="9.3" fill="#262626" stroke="#262626" stroke-width="0.20" text-anchor="middle" textLength="62.4" lengthAdjust="spacingAndGlyphs" >Clean Image</text>
<text x="966.20" y="58.20" font-family="Liberation Sans" font-size="9.3" fill="#262626" stroke="#262626" stroke-width="0.20" text-anchor="middle" textLength="67.2" lengthAdjust="spacingAndGlyphs" >x, y: 245, 243</text>
<rect x="831.85" y="64.4" width="67.0" height="169.0" fill="none" stroke="#0000ff" stroke-width="2.5"/>
<rect x="932.25" y="64.4" width="67.7" height="169.0" fill="none" stroke="#0000ff" stroke-width="2.5"/>
<line x1="1047.8" y1="204.4" x2="1299.5" y2="204.4" stroke="#666" stroke-width="1.4"/>
<line x1="1059.3" y1="170.3" x2="1059.3" y2="136.2" stroke="#1f77b4" stroke-width="1.7"/>
<circle cx="1059.3" cy="153.2" r="2.1" fill="#1f77b4"/>
<line x1="1063.9" y1="126.9" x2="1063.9" y2="92.8" stroke="#1f77b4" stroke-width="1.7"/>
<circle cx="1063.9" cy="109.9" r="2.1" fill="#1f77b4"/>
<line x1="1068.5" y1="130.0" x2="1068.5" y2="97.5" stroke="#1f77b4" stroke-width="1.7"/>
<circle cx="1068.5" cy="113.0" r="2.1" fill="#1f77b4"/>
<line x1="1073.2" y1="106.8" x2="1073.2" y2="75.8" stroke="#1f77b4" stroke-width="1.7"/>
<circle cx="1073.2" cy="91.3" r="2.1" fill="#1f77b4"/>
<line x1="1077.8" y1="153.2" x2="1077.8" y2="123.8" stroke="#1f77b4" stroke-width="1.7"/>
<circle cx="1077.8" cy="137.8" r="2.1" fill="#1f77b4"/>
<line x1="1082.4" y1="150.2" x2="1082.4" y2="122.3" stroke="#1f77b4" stroke-width="1.7"/>
<circle cx="1082.4" cy="136.2" r="2.1" fill="#1f77b4"/>
<line x1="1087.1" y1="145.5" x2="1087.1" y2="117.6" stroke="#1f77b4" stroke-width="1.7"/>
<circle cx="1087.1" cy="131.6" r="2.1" fill="#1f77b4"/>
<line x1="1091.7" y1="153.2" x2="1091.7" y2="126.9" stroke="#1f77b4" stroke-width="1.7"/>
<circle cx="1091.7" cy="139.3" r="2.1" fill="#1f77b4"/>
<line x1="1096.3" y1="165.7" x2="1096.3" y2="139.3" stroke="#1f77b4" stroke-width="1.7"/>
<circle cx="1096.3" cy="151.7" r="2.1" fill="#1f77b4"/>
<line x1="1101.0" y1="199.8" x2="1101.0" y2="171.8" stroke="#1f77b4" stroke-width="1.7"/>
<circle cx="1101.0" cy="185.8" r="2.1" fill="#1f77b4"/>
<line x1="1105.6" y1="157.9" x2="1105.6" y2="126.9" stroke="#1f77b4" stroke-width="1.7"/>
<circle cx="1105.6" cy="142.4" r="2.1" fill="#1f77b4"/>
<line x1="1110.2" y1="126.9" x2="1110.2" y2="92.8" stroke="#1f77b4" stroke-width="1.7"/>
<circle cx="1110.2" cy="109.9" r="2.1" fill="#1f77b4"/>
<line x1="1114.9" y1="109.9" x2="1114.9" y2="75.8" stroke="#1f77b4" stroke-width="1.7"/>
<circle cx="1114.9" cy="92.8" r="2.1" fill="#1f77b4"/>
<line x1="1119.5" y1="105.2" x2="1119.5" y2="71.1" stroke="#1f77b4" stroke-width="1.7"/>
<circle cx="1119.5" cy="88.2" r="2.1" fill="#1f77b4"/>
<line x1="1124.1" y1="106.8" x2="1124.1" y2="74.2" stroke="#1f77b4" stroke-width="1.7"/>
<circle cx="1124.1" cy="91.3" r="2.1" fill="#1f77b4"/>
<line x1="1128.7" y1="161.0" x2="1128.7" y2="126.9" stroke="#1f77b4" stroke-width="1.7"/>
<circle cx="1128.7" cy="144.0" r="2.1" fill="#1f77b4"/>
<line x1="1133.4" y1="147.1" x2="1133.4" y2="103.7" stroke="#1f77b4" stroke-width="1.7"/>
<circle cx="1133.4" cy="125.4" r="2.1" fill="#1f77b4"/>
<line x1="1138.0" y1="131.6" x2="1138.0" y2="88.2" stroke="#1f77b4" stroke-width="1.7"/>
<circle cx="1138.0" cy="109.9" r="2.1" fill="#1f77b4"/>
<line x1="1142.6" y1="126.9" x2="1142.6" y2="86.6" stroke="#1f77b4" stroke-width="1.7"/>
<circle cx="1142.6" cy="106.8" r="2.1" fill="#1f77b4"/>
<line x1="1147.3" y1="134.7" x2="1147.3" y2="95.9" stroke="#1f77b4" stroke-width="1.7"/>
<circle cx="1147.3" cy="114.5" r="2.1" fill="#1f77b4"/>
<line x1="1151.9" y1="130.0" x2="1151.9" y2="97.5" stroke="#1f77b4" stroke-width="1.7"/>
<circle cx="1151.9" cy="113.0" r="2.1" fill="#1f77b4"/>
<line x1="1156.5" y1="161.0" x2="1156.5" y2="128.4" stroke="#1f77b4" stroke-width="1.7"/>
<circle cx="1156.5" cy="145.5" r="2.1" fill="#1f77b4"/>
<line x1="1161.2" y1="142.4" x2="1161.2" y2="114.5" stroke="#1f77b4" stroke-width="1.7"/>
<circle cx="1161.2" cy="128.4" r="2.1" fill="#1f77b4"/>
<line x1="1165.8" y1="150.2" x2="1165.8" y2="123.8" stroke="#1f77b4" stroke-width="1.7"/>
<circle cx="1165.8" cy="137.8" r="2.1" fill="#1f77b4"/>
<line x1="1170.4" y1="165.7" x2="1170.4" y2="140.9" stroke="#1f77b4" stroke-width="1.7"/>
<circle cx="1170.4" cy="153.2" r="2.1" fill="#1f77b4"/>
<line x1="1175.1" y1="181.2" x2="1175.1" y2="156.3" stroke="#1f77b4" stroke-width="1.7"/>
<circle cx="1175.1" cy="168.8" r="2.1" fill="#1f77b4"/>
<line x1="1179.7" y1="168.8" x2="1179.7" y2="145.5" stroke="#1f77b4" stroke-width="1.7"/>
<circle cx="1179.7" cy="157.9" r="2.1" fill="#1f77b4"/>
<line x1="1184.3" y1="173.4" x2="1184.3" y2="147.1" stroke="#1f77b4" stroke-width="1.7"/>
<circle cx="1184.3" cy="159.5" r="2.1" fill="#1f77b4"/>
<line x1="1189.0" y1="175.0" x2="1189.0" y2="147.1" stroke="#1f77b4" stroke-width="1.7"/>
<circle cx="1189.0" cy="161.0" r="2.1" fill="#1f77b4"/>
<line x1="1193.6" y1="150.2" x2="1193.6" y2="120.7" stroke="#1f77b4" stroke-width="1.7"/>
<circle cx="1193.6" cy="136.2" r="2.1" fill="#1f77b4"/>
<line x1="1198.2" y1="145.5" x2="1198.2" y2="114.5" stroke="#1f77b4" stroke-width="1.7"/>
<circle cx="1198.2" cy="130.0" r="2.1" fill="#1f77b4"/>
<line x1="1202.9" y1="145.5" x2="1202.9" y2="113.0" stroke="#1f77b4" stroke-width="1.7"/>
<circle cx="1202.9" cy="130.0" r="2.1" fill="#1f77b4"/>
<line x1="1207.5" y1="148.6" x2="1207.5" y2="108.3" stroke="#1f77b4" stroke-width="1.7"/>
<circle cx="1207.5" cy="128.4" r="2.1" fill="#1f77b4"/>
<line x1="1212.1" y1="144.0" x2="1212.1" y2="103.7" stroke="#1f77b4" stroke-width="1.7"/>
<circle cx="1212.1" cy="123.8" r="2.1" fill="#1f77b4"/>
<line x1="1216.8" y1="157.9" x2="1216.8" y2="128.4" stroke="#1f77b4" stroke-width="1.7"/>
<circle cx="1216.8" cy="144.0" r="2.1" fill="#1f77b4"/>
<line x1="1221.4" y1="176.5" x2="1221.4" y2="86.6" stroke="#1f77b4" stroke-width="1.7"/>
<circle cx="1221.4" cy="131.6" r="2.1" fill="#1f77b4"/>
<line x1="1226.0" y1="156.3" x2="1226.0" y2="68.0" stroke="#1f77b4" stroke-width="1.7"/>
<circle cx="1226.0" cy="111.4" r="2.1" fill="#1f77b4"/>
<line x1="1230.7" y1="184.2" x2="1230.7" y2="136.2" stroke="#1f77b4" stroke-width="1.7"/>
<circle cx="1230.7" cy="161.0" r="2.1" fill="#1f77b4"/>
<line x1="1235.3" y1="159.5" x2="1235.3" y2="80.4" stroke="#1f77b4" stroke-width="1.7"/>
<circle cx="1235.3" cy="119.2" r="2.1" fill="#1f77b4"/>
<line x1="1239.9" y1="185.8" x2="1239.9" y2="113.0" stroke="#1f77b4" stroke-width="1.7"/>
<circle cx="1239.9" cy="148.6" r="2.1" fill="#1f77b4"/>
<line x1="1244.5" y1="154.8" x2="1244.5" y2="120.7" stroke="#1f77b4" stroke-width="1.7"/>
<circle cx="1244.5" cy="137.8" r="2.1" fill="#1f77b4"/>
<line x1="1249.2" y1="162.6" x2="1249.2" y2="131.6" stroke="#1f77b4" stroke-width="1.7"/>
<circle cx="1249.2" cy="147.1" r="2.1" fill="#1f77b4"/>
<line x1="1253.8" y1="140.9" x2="1253.8" y2="109.9" stroke="#1f77b4" stroke-width="1.7"/>
<circle cx="1253.8" cy="125.4" r="2.1" fill="#1f77b4"/>
<line x1="1258.4" y1="134.7" x2="1258.4" y2="103.7" stroke="#1f77b4" stroke-width="1.7"/>
<circle cx="1258.4" cy="119.2" r="2.1" fill="#1f77b4"/>
<line x1="1263.1" y1="140.9" x2="1263.1" y2="109.9" stroke="#1f77b4" stroke-width="1.7"/>
<circle cx="1263.1" cy="125.4" r="2.1" fill="#1f77b4"/>
<line x1="1267.7" y1="103.7" x2="1267.7" y2="71.1" stroke="#1f77b4" stroke-width="1.7"/>
<circle cx="1267.7" cy="86.6" r="2.1" fill="#1f77b4"/>
<line x1="1272.3" y1="123.8" x2="1272.3" y2="91.3" stroke="#1f77b4" stroke-width="1.7"/>
<circle cx="1272.3" cy="108.3" r="2.1" fill="#1f77b4"/>
<line x1="1277.0" y1="136.2" x2="1277.0" y2="102.1" stroke="#1f77b4" stroke-width="1.7"/>
<circle cx="1277.0" cy="119.2" r="2.1" fill="#1f77b4"/>
<line x1="1281.6" y1="125.4" x2="1281.6" y2="92.8" stroke="#1f77b4" stroke-width="1.7"/>
<circle cx="1281.6" cy="109.9" r="2.1" fill="#1f77b4"/>
<line x1="1286.2" y1="139.3" x2="1286.2" y2="106.8" stroke="#1f77b4" stroke-width="1.7"/>
<circle cx="1286.2" cy="122.3" r="2.1" fill="#1f77b4"/>
<polyline points="1073.2,126.1 1074.3,126.1 1075.5,126.1 1076.6,126.1 1077.8,126.1 1079.0,126.1 1080.1,126.1 1081.3,126.1 1082.4,126.1 1083.6,126.1 1084.7,126.1 1085.9,126.1 1087.1,126.1 1088.2,126.1 1089.4,126.1 1090.5,126.1 1091.7,126.1 1092.9,126.1 1094.0,126.1 1095.2,126.1 1096.3,126.1 1097.5,126.1 1098.6,126.1 1099.8,126.1 1101.0,126.1 1102.1,126.1 1103.3,126.1 1104.4,126.1 1105.6,126.1 1106.7,126.1 1107.9,126.1 1109.1,126.1 1110.2,126.1 1111.4,126.1 1112.5,126.1 1113.7,126.1 1114.9,126.1 1116.0,126.1 1117.2,126.1 1118.3,126.1 1119.5,126.1 1120.6,126.1 1121.8,126.1 1123.0,126.1 1124.1,126.1 1125.3,126.1 1126.4,126.1 1127.6,126.1 1128.7,126.1 1129.9,126.1 1131.1,126.1 1132.2,126.1 1133.4,126.2 1134.5,126.2 1135.7,126.2 1136.9,126.2 1138.0,126.2 1139.2,126.3 1140.3,126.3 1141.5,126.4 1142.6,126.5 1143.8,126.6 1145.0,126.8 1146.1,127.0 1147.3,127.2 1148.4,127.5 1149.6,127.9 1150.8,128.3 1151.9,128.9 1153.1,129.5 1154.2,130.3 1155.4,131.1 1156.5,132.1 1157.7,133.3 1158.9,134.6 1160.0,136.0 1161.2,137.5 1162.3,139.2 1163.5,141.0 1164.6,142.9 1165.8,144.9 1167.0,146.9 1168.1,149.0 1169.3,151.0 1170.4,152.9 1171.6,154.8 1172.8,156.5 1173.9,158.0 1175.1,159.3 1176.2,160.4 1177.4,161.1 1178.5,161.6 1179.7,161.8 1180.9,161.6 1182.0,161.1 1183.2,160.4 1184.3,159.3 1185.5,158.0 1186.6,156.5 1187.8,154.8 1189.0,152.9 1190.1,151.0 1191.3,149.0 1192.4,146.9 1193.6,144.9 1194.8,142.9 1195.9,141.0 1197.1,139.2 1198.2,137.5 1199.4,136.0 1200.5,134.6 1201.7,133.3 1202.9,132.1 1204.0,131.1 1205.2,130.3 1206.3,129.5 1207.5,128.9 1208.7,128.3 1209.8,127.9 1211.0,127.5 1212.1,127.2 1213.3,127.0 1214.4,126.8 1215.6,126.6 1216.8,126.5 1217.9,126.4 1219.1,126.3 1220.2,126.3 1221.4,126.2 1222.5,126.2 1223.7,126.2 1224.9,126.2 1226.0,126.2 1227.2,126.1 1228.3,126.1 1229.5,126.1 1230.7,126.1 1231.8,126.1 1233.0,126.1 1234.1,126.1 1235.3,126.1 1236.4,126.1 1237.6,126.1 1238.8,126.1 1239.9,126.1 1241.1,126.1 1242.2,126.1 1243.4,126.1 1244.5,126.1 1245.7,126.1 1246.9,126.1 1248.0,126.1 1249.2,126.1 1250.3,126.1 1251.5,126.1 1252.7,126.1 1253.8,126.1 1255.0,126.1 1256.1,126.1 1257.3,126.1 1258.4,126.1 1259.6,126.1 1260.8,126.1 1261.9,126.1 1263.1,126.1 1264.2,126.1 1265.4,126.1 1266.6,126.1 1267.7,126.1 1268.9,126.1 1270.0,126.1 1271.2,126.1 1272.3,126.1 1273.5,126.1 1274.7,126.1 1275.8,126.1 1277.0,126.1 1278.1,126.1 1279.3,126.1 1280.4,126.1 1281.6,126.1 1282.8,126.1 1283.9,126.1 1285.1,126.1 1286.2,126.1 1287.4,126.1 1288.6,126.1" fill="none" stroke="#333" stroke-width="1.8"/>
<rect x="1047.8" y="60.5" width="251.7" height="150.9" fill="none" stroke="#333" stroke-width="1"/>
<line x1="1044.3" y1="204.4" x2="1047.8" y2="204.4" stroke="#333" stroke-width="0.9"/>
<text x="1041.20" y="207.50" font-family="Liberation Sans" font-size="8.6" fill="#262626" stroke="#262626" stroke-width="0.19" text-anchor="end" textLength="5.4" lengthAdjust="spacingAndGlyphs" >0</text>
<line x1="1044.3" y1="173.4" x2="1047.8" y2="173.4" stroke="#333" stroke-width="0.9"/>
<text x="1041.20" y="176.50" font-family="Liberation Sans" font-size="8.6" fill="#262626" stroke="#262626" stroke-width="0.19" text-anchor="end" textLength="5.4" lengthAdjust="spacingAndGlyphs" >2</text>
<line x1="1044.3" y1="142.4" x2="1047.8" y2="142.4" stroke="#333" stroke-width="0.9"/>
<text x="1041.20" y="145.50" font-family="Liberation Sans" font-size="8.6" fill="#262626" stroke="#262626" stroke-width="0.19" text-anchor="end" textLength="5.4" lengthAdjust="spacingAndGlyphs" >4</text>
<line x1="1044.3" y1="111.4" x2="1047.8" y2="111.4" stroke="#333" stroke-width="0.9"/>
<text x="1041.20" y="114.50" font-family="Liberation Sans" font-size="8.6" fill="#262626" stroke="#262626" stroke-width="0.19" text-anchor="end" textLength="5.4" lengthAdjust="spacingAndGlyphs" >6</text>
<line x1="1044.3" y1="80.4" x2="1047.8" y2="80.4" stroke="#333" stroke-width="0.9"/>
<text x="1041.20" y="83.50" font-family="Liberation Sans" font-size="8.6" fill="#262626" stroke="#262626" stroke-width="0.19" text-anchor="end" textLength="5.4" lengthAdjust="spacingAndGlyphs" >8</text>
<line x1="1063.9" y1="211.4" x2="1063.9" y2="214.9" stroke="#333" stroke-width="0.9"/>
<text x="1063.90" y="224.20" font-family="Liberation Sans" font-size="8.6" fill="#262626" stroke="#262626" stroke-width="0.19" text-anchor="middle" textLength="21.8" lengthAdjust="spacingAndGlyphs" >3920</text>
<line x1="1110.2" y1="211.4" x2="1110.2" y2="214.9" stroke="#333" stroke-width="0.9"/>
<text x="1110.22" y="224.20" font-family="Liberation Sans" font-size="8.6" fill="#262626" stroke="#262626" stroke-width="0.19" text-anchor="middle" textLength="21.8" lengthAdjust="spacingAndGlyphs" >3940</text>
<line x1="1156.5" y1="211.4" x2="1156.5" y2="214.9" stroke="#333" stroke-width="0.9"/>
<text x="1156.54" y="224.20" font-family="Liberation Sans" font-size="8.6" fill="#262626" stroke="#262626" stroke-width="0.19" text-anchor="middle" textLength="21.8" lengthAdjust="spacingAndGlyphs" >3960</text>
<line x1="1202.9" y1="211.4" x2="1202.9" y2="214.9" stroke="#333" stroke-width="0.9"/>
<text x="1202.86" y="224.20" font-family="Liberation Sans" font-size="8.6" fill="#262626" stroke="#262626" stroke-width="0.19" text-anchor="middle" textLength="21.8" lengthAdjust="spacingAndGlyphs" >3980</text>
<line x1="1249.2" y1="211.4" x2="1249.2" y2="214.9" stroke="#333" stroke-width="0.9"/>
<text x="1249.18" y="224.20" font-family="Liberation Sans" font-size="8.6" fill="#262626" stroke="#262626" stroke-width="0.19" text-anchor="middle" textLength="21.8" lengthAdjust="spacingAndGlyphs" >4000</text>
<line x1="1295.5" y1="211.4" x2="1295.5" y2="214.9" stroke="#333" stroke-width="0.9"/>
<text x="1295.50" y="224.20" font-family="Liberation Sans" font-size="8.6" fill="#262626" stroke="#262626" stroke-width="0.19" text-anchor="middle" textLength="21.8" lengthAdjust="spacingAndGlyphs" >4020</text>
<text x="1049.20" y="71.00" font-family="Liberation Sans" font-size="9.3" fill="#262626" stroke="#262626" stroke-width="0.20" >e</text>
<text x="1054.80" y="66.60" font-family="Liberation Sans" font-size="6.5" fill="#262626" stroke="#262626" stroke-width="0.14" >−17</text>
<text x="1067.00" y="71.00" font-family="Liberation Sans" font-size="9.3" fill="#262626" stroke="#262626" stroke-width="0.20" >x2</text>
<text x="1077.60" y="71.00" font-family="Liberation Sans" font-size="9.3" fill="#262626" stroke="#262626" stroke-width="0.20" font-style="italic" >Å</text>
<text x="144.00" y="525.90" font-family="Liberation Sans" font-size="12.9" fill="#111" stroke="#111" stroke-width="0.22" text-anchor="middle" textLength="91.4" lengthAdjust="spacingAndGlyphs" >Fiber Positions</text>
<text x="144.00" y="706.60" font-family="Liberation Sans" font-size="10.4" fill="#111" stroke="#111" stroke-width="0.22" text-anchor="middle" textLength="40.7" lengthAdjust="spacingAndGlyphs" xml:space="preserve">arcsecs</text>
<line x1="78.6" y1="680.9" x2="78.6" y2="684.4" stroke="#111" stroke-width="0.9"/>
<text x="78.60" y="695.60" font-family="Liberation Sans" font-size="10.4" fill="#111" stroke="#111" stroke-width="0.22" text-anchor="middle" textLength="14.0" lengthAdjust="spacingAndGlyphs" >−4</text>
<line x1="66.1" y1="671.9" x2="69.6" y2="671.9" stroke="#111" stroke-width="0.9"/>
<text x="63.61" y="675.60" font-family="Liberation Sans" font-size="10.4" fill="#111" stroke="#111" stroke-width="0.22" text-anchor="end" textLength="14.0" lengthAdjust="spacingAndGlyphs" >−4</text>
<line x1="111.3" y1="680.9" x2="111.3" y2="684.4" stroke="#111" stroke-width="0.9"/>
<text x="111.30" y="695.60" font-family="Liberation Sans" font-size="10.4" fill="#111" stroke="#111" stroke-width="0.22" text-anchor="middle" textLength="14.0" lengthAdjust="spacingAndGlyphs" >−2</text>
<line x1="66.1" y1="639.2" x2="69.6" y2="639.2" stroke="#111" stroke-width="0.9"/>
<text x="63.61" y="642.90" font-family="Liberation Sans" font-size="10.4" fill="#111" stroke="#111" stroke-width="0.22" text-anchor="end" textLength="14.0" lengthAdjust="spacingAndGlyphs" >−2</text>
<line x1="144.0" y1="680.9" x2="144.0" y2="684.4" stroke="#111" stroke-width="0.9"/>
<text x="144.00" y="695.60" font-family="Liberation Sans" font-size="10.4" fill="#111" stroke="#111" stroke-width="0.22" text-anchor="middle" textLength="6.6" lengthAdjust="spacingAndGlyphs" >0</text>
<line x1="66.1" y1="606.5" x2="69.6" y2="606.5" stroke="#111" stroke-width="0.9"/>
<text x="63.61" y="610.20" font-family="Liberation Sans" font-size="10.4" fill="#111" stroke="#111" stroke-width="0.22" text-anchor="end" textLength="6.6" lengthAdjust="spacingAndGlyphs" >0</text>
<line x1="176.7" y1="680.9" x2="176.7" y2="684.4" stroke="#111" stroke-width="0.9"/>
<text x="176.70" y="695.60" font-family="Liberation Sans" font-size="10.4" fill="#111" stroke="#111" stroke-width="0.22" text-anchor="middle" textLength="6.6" lengthAdjust="spacingAndGlyphs" >2</text>
<line x1="66.1" y1="573.8" x2="69.6" y2="573.8" stroke="#111" stroke-width="0.9"/>
<text x="63.61" y="577.50" font-family="Liberation Sans" font-size="10.4" fill="#111" stroke="#111" stroke-width="0.22" text-anchor="end" textLength="6.6" lengthAdjust="spacingAndGlyphs" >2</text>
<line x1="209.4" y1="680.9" x2="209.4" y2="684.4" stroke="#111" stroke-width="0.9"/>
<text x="209.40" y="695.60" font-family="Liberation Sans" font-size="10.4" fill="#111" stroke="#111" stroke-width="0.22" text-anchor="middle" textLength="6.6" lengthAdjust="spacingAndGlyphs" >4</text>
<line x1="66.1" y1="541.1" x2="69.6" y2="541.1" stroke="#111" stroke-width="0.9"/>
<text x="63.61" y="544.80" font-family="Liberation Sans" font-size="10.4" fill="#111" stroke="#111" stroke-width="0.22" text-anchor="end" textLength="6.6" lengthAdjust="spacingAndGlyphs" >4</text>
<clipPath id="chf"><rect x="69.6" y="532.1" width="148.8" height="148.8"/></clipPath>
<g clip-path="url(#chf)">
<circle cx="152.8" cy="561.4" r="12.2" fill="none" stroke="#666" stroke-width="0.8"/>
<circle cx="128.6" cy="567.9" r="12.2" fill="none" stroke="#666" stroke-width="0.8"/>
<circle cx="105.4" cy="571.2" r="12.2" fill="none" stroke="#666" stroke-width="0.8"/>
<circle cx="168.2" cy="580.0" r="12.2" fill="none" stroke="#666" stroke-width="0.8"/>
<circle cx="121.9" cy="588.8" r="12.2" fill="none" stroke="#666" stroke-width="0.8"/>
<circle cx="184.7" cy="596.5" r="12.2" fill="none" stroke="#666" stroke-width="0.8"/>
<circle cx="97.7" cy="595.5" r="12.2" fill="none" stroke="#666" stroke-width="0.8"/>
<circle cx="114.2" cy="613.0" r="12.2" fill="none" stroke="#666" stroke-width="0.8"/>
<circle cx="177.0" cy="620.9" r="12.2" fill="none" stroke="#666" stroke-width="0.8"/>
<circle cx="90.0" cy="618.6" r="12.2" fill="none" stroke="#666" stroke-width="0.8"/>
<circle cx="130.8" cy="630.7" r="12.2" fill="none" stroke="#666" stroke-width="0.8"/>
<circle cx="107.7" cy="636.3" r="12.2" fill="none" stroke="#666" stroke-width="0.8"/>
<circle cx="169.3" cy="641.8" r="12.2" fill="none" stroke="#666" stroke-width="0.8"/>
<circle cx="146.1" cy="648.4" r="12.2" fill="none" stroke="#666" stroke-width="0.8"/>
<circle cx="123.1" cy="653.9" r="12.2" fill="none" stroke="#666" stroke-width="0.8"/>
<circle cx="144.0" cy="584.9" r="12.2" fill="none" stroke="#ff0000" stroke-width="1.4"/>
<circle cx="161.7" cy="602.1" r="12.2" fill="none" stroke="#00ee00" stroke-width="1.4"/>
<circle cx="137.5" cy="608.3" r="12.2" fill="none" stroke="#0000ff" stroke-width="1.4"/>
<circle cx="153.3" cy="625.5" r="12.2" fill="none" stroke="#ffa500" stroke-width="1.4"/>
<path d="M140.5,606.5H147.5M144.0,603.0V610.0" stroke="#ff0000" stroke-width="1.3"/>
<rect x="94.9" y="557.5" width="98.1" height="98.1" fill="none" stroke="#ff0000" stroke-width="1.4"/>
</g>
<text x="144.00" y="546.80" font-family="Liberation Sans" font-size="11.0" fill="#ff0000" stroke="#ff0000" stroke-width="0.22" text-anchor="middle" >N</text>
<text x="80.20" y="610.40" font-family="Liberation Sans" font-size="11.0" fill="#ff0000" stroke="#ff0000" stroke-width="0.22" text-anchor="middle" >E</text>
<rect x="69.6" y="532.1" width="148.8" height="148.8" fill="none" stroke="#111" stroke-width="1"/>
<text x="329.60" y="525.90" font-family="Liberation Sans" font-size="12.9" fill="#111" stroke="#111" stroke-width="0.22" text-anchor="middle" textLength="81.5" lengthAdjust="spacingAndGlyphs" >Lineflux Map</text>
<text x="329.60" y="706.60" font-family="Liberation Sans" font-size="10.4" fill="#111" stroke="#111" stroke-width="0.22" text-anchor="middle" textLength="104.6" lengthAdjust="spacingAndGlyphs" xml:space="preserve">s/b: -3.18 +/- 0.096</text>
<line x1="264.2" y1="681.2" x2="264.2" y2="684.7" stroke="#111" stroke-width="0.9"/>
<text x="264.20" y="695.60" font-family="Liberation Sans" font-size="10.4" fill="#111" stroke="#111" stroke-width="0.22" text-anchor="middle" textLength="14.0" lengthAdjust="spacingAndGlyphs" >−4</text>
<line x1="251.7" y1="672.2" x2="255.2" y2="672.2" stroke="#111" stroke-width="0.9"/>
<text x="249.21" y="675.90" font-family="Liberation Sans" font-size="10.4" fill="#111" stroke="#111" stroke-width="0.22" text-anchor="end" textLength="14.0" lengthAdjust="spacingAndGlyphs" >−4</text>
<line x1="296.9" y1="681.2" x2="296.9" y2="684.7" stroke="#111" stroke-width="0.9"/>
<text x="296.90" y="695.60" font-family="Liberation Sans" font-size="10.4" fill="#111" stroke="#111" stroke-width="0.22" text-anchor="middle" textLength="14.0" lengthAdjust="spacingAndGlyphs" >−2</text>
<line x1="251.7" y1="639.5" x2="255.2" y2="639.5" stroke="#111" stroke-width="0.9"/>
<text x="249.21" y="643.20" font-family="Liberation Sans" font-size="10.4" fill="#111" stroke="#111" stroke-width="0.22" text-anchor="end" textLength="14.0" lengthAdjust="spacingAndGlyphs" >−2</text>
<line x1="329.6" y1="681.2" x2="329.6" y2="684.7" stroke="#111" stroke-width="0.9"/>
<text x="329.60" y="695.60" font-family="Liberation Sans" font-size="10.4" fill="#111" stroke="#111" stroke-width="0.22" text-anchor="middle" textLength="6.6" lengthAdjust="spacingAndGlyphs" >0</text>
<line x1="251.7" y1="606.8" x2="255.2" y2="606.8" stroke="#111" stroke-width="0.9"/>
<text x="249.21" y="610.50" font-family="Liberation Sans" font-size="10.4" fill="#111" stroke="#111" stroke-width="0.22" text-anchor="end" textLength="6.6" lengthAdjust="spacingAndGlyphs" >0</text>
<line x1="362.3" y1="681.2" x2="362.3" y2="684.7" stroke="#111" stroke-width="0.9"/>
<text x="362.30" y="695.60" font-family="Liberation Sans" font-size="10.4" fill="#111" stroke="#111" stroke-width="0.22" text-anchor="middle" textLength="6.6" lengthAdjust="spacingAndGlyphs" >2</text>
<line x1="251.7" y1="574.1" x2="255.2" y2="574.1" stroke="#111" stroke-width="0.9"/>
<text x="249.21" y="577.80" font-family="Liberation Sans" font-size="10.4" fill="#111" stroke="#111" stroke-width="0.22" text-anchor="end" textLength="6.6" lengthAdjust="spacingAndGlyphs" >2</text>
<line x1="395.0" y1="681.2" x2="395.0" y2="684.7" stroke="#111" stroke-width="0.9"/>
<text x="395.00" y="695.60" font-family="Liberation Sans" font-size="10.4" fill="#111" stroke="#111" stroke-width="0.22" text-anchor="middle" textLength="6.6" lengthAdjust="spacingAndGlyphs" >4</text>
<line x1="251.7" y1="541.4" x2="255.2" y2="541.4" stroke="#111" stroke-width="0.9"/>
<text x="249.21" y="545.10" font-family="Liberation Sans" font-size="10.4" fill="#111" stroke="#111" stroke-width="0.22" text-anchor="end" textLength="6.6" lengthAdjust="spacingAndGlyphs" >4</text>
<clipPath id="clf"><rect x="255.2" y="532.4" width="148.8" height="148.8"/></clipPath>
<g clip-path="url(#clf)">
<path d="M292.0,606.8H322.2M337.0,606.8H367.2M329.6,569.2V599.4M329.6,614.2V644.4" stroke="#ff0000" stroke-width="1.4"/>
<rect x="280.6" y="557.8" width="98.1" height="98.1" fill="none" stroke="#ff0000" stroke-width="1.4"/>
</g>
<text x="329.60" y="546.80" font-family="Liberation Sans" font-size="11.0" fill="#ff0000" stroke="#ff0000" stroke-width="0.22" text-anchor="middle" >N</text>
<text x="265.80" y="610.40" font-family="Liberation Sans" font-size="11.0" fill="#ff0000" stroke="#ff0000" stroke-width="0.22" text-anchor="middle" >E</text>
<rect x="255.2" y="532.4" width="148.8" height="148.8" fill="none" stroke="#111" stroke-width="1"/>
<text x="514.50" y="525.90" font-family="Liberation Sans" font-size="12.9" fill="#111" stroke="#111" stroke-width="0.22" text-anchor="middle" textLength="73.8" lengthAdjust="spacingAndGlyphs" >HSC(26.2) r</text>
<text x="514.50" y="706.60" font-family="Liberation Sans" font-size="10.4" fill="#111" stroke="#111" stroke-width="0.22" text-anchor="middle" textLength="120.0" lengthAdjust="spacingAndGlyphs" xml:space="preserve">m:20.7  re:1.0&quot;  s:0.2&quot;</text>
<line x1="449.1" y1="681.2" x2="449.1" y2="684.7" stroke="#111" stroke-width="0.9"/>
<text x="449.10" y="695.60" font-family="Liberation Sans" font-size="10.4" fill="#111" stroke="#111" stroke-width="0.22" text-anchor="middle" textLength="14.0" lengthAdjust="spacingAndGlyphs" >−4</text>
<line x1="436.6" y1="672.2" x2="440.1" y2="672.2" stroke="#111" stroke-width="0.9"/>
<text x="434.11" y="675.90" font-family="Liberation Sans" font-size="10.4" fill="#111" stroke="#111" stroke-width="0.22" text-anchor="end" textLength="14.0" lengthAdjust="spacingAndGlyphs" >−4</text>
<line x1="481.8" y1="681.2" x2="481.8" y2="684.7" stroke="#111" stroke-width="0.9"/>
<text x="481.80" y="695.60" font-family="Liberation Sans" font-size="10.4" fill="#111" stroke="#111" stroke-width="0.22" text-anchor="middle" textLength="14.0" lengthAdjust="spacingAndGlyphs" >−2</text>
<line x1="436.6" y1="639.5" x2="440.1" y2="639.5" stroke="#111" stroke-width="0.9"/>
<text x="434.11" y="643.20" font-family="Liberation Sans" font-size="10.4" fill="#111" stroke="#111" stroke-width="0.22" text-anchor="end" textLength="14.0" lengthAdjust="spacingAndGlyphs" >−2</text>
<line x1="514.5" y1="681.2" x2="514.5" y2="684.7" stroke="#111" stroke-width="0.9"/>
<text x="514.50" y="695.60" font-family="Liberation Sans" font-size="10.4" fill="#111" stroke="#111" stroke-width="0.22" text-anchor="middle" textLength="6.6" lengthAdjust="spacingAndGlyphs" >0</text>
<line x1="436.6" y1="606.8" x2="440.1" y2="606.8" stroke="#111" stroke-width="0.9"/>
<text x="434.11" y="610.50" font-family="Liberation Sans" font-size="10.4" fill="#111" stroke="#111" stroke-width="0.22" text-anchor="end" textLength="6.6" lengthAdjust="spacingAndGlyphs" >0</text>
<line x1="547.2" y1="681.2" x2="547.2" y2="684.7" stroke="#111" stroke-width="0.9"/>
<text x="547.20" y="695.60" font-family="Liberation Sans" font-size="10.4" fill="#111" stroke="#111" stroke-width="0.22" text-anchor="middle" textLength="6.6" lengthAdjust="spacingAndGlyphs" >2</text>
<line x1="436.6" y1="574.1" x2="440.1" y2="574.1" stroke="#111" stroke-width="0.9"/>
<text x="434.11" y="577.80" font-family="Liberation Sans" font-size="10.4" fill="#111" stroke="#111" stroke-width="0.22" text-anchor="end" textLength="6.6" lengthAdjust="spacingAndGlyphs" >2</text>
<line x1="579.9" y1="681.2" x2="579.9" y2="684.7" stroke="#111" stroke-width="0.9"/>
<text x="579.90" y="695.60" font-family="Liberation Sans" font-size="10.4" fill="#111" stroke="#111" stroke-width="0.22" text-anchor="middle" textLength="6.6" lengthAdjust="spacingAndGlyphs" >4</text>
<line x1="436.6" y1="541.4" x2="440.1" y2="541.4" stroke="#111" stroke-width="0.9"/>
<text x="434.11" y="545.10" font-family="Liberation Sans" font-size="10.4" fill="#111" stroke="#111" stroke-width="0.22" text-anchor="end" textLength="6.6" lengthAdjust="spacingAndGlyphs" >4</text>
<clipPath id="chr"><rect x="440.1" y="532.4" width="148.8" height="148.8"/></clipPath>
<g clip-path="url(#chr)">
<circle cx="491.0" cy="668.4" r="12.2" fill="none" stroke="#eee" stroke-width="1.1" stroke-dasharray="2.2,1.6"/>
<circle cx="515.2" cy="663.0" r="12.2" fill="none" stroke="#eee" stroke-width="1.1" stroke-dasharray="2.2,1.6"/>
<path d="M476.9,606.8H552.1M514.5,569.2V644.4" stroke="#ff0000" stroke-width="1.3"/>
<circle cx="514.5" cy="606.8" r="16.0" fill="none" stroke="#f5c400" stroke-width="1.5"/>
<rect x="508.0" y="600.3" width="13.1" height="13.1" fill="none" stroke="#0000ff" stroke-width="1.5"/>
<rect x="465.4" y="557.8" width="98.1" height="98.1" fill="none" stroke="#ff0000" stroke-width="1.4"/>
</g>
<text x="514.50" y="546.80" font-family="Liberation Sans" font-size="11.0" fill="#ff0000" stroke="#ff0000" stroke-width="0.22" text-anchor="middle" >N</text>
<text x="450.70" y="610.40" font-family="Liberation Sans" font-size="11.0" fill="#ff0000" stroke="#ff0000" stroke-width="0.22" text-anchor="middle" >E</text>
<rect x="440.1" y="532.4" width="148.8" height="148.8" fill="none" stroke="#111" stroke-width="1"/>
</svg>
<script>
(function(){var D=[["cv0",45,18,1,"tc20Y9G6icG2s6W/f5yMwqaVfZekluXWHEWbj6+v/5uf/8TFilGsqWaCoHWfpKGGvcuvdsOGy2nNnmCPoqxuZ6mIq8VMrNyQdsSszJ6kmYnGqU1jy8F/n7W2w6SSiswmkJhQp3bCkbjUqmtL75F0no3BmZhzrmO446Wctv9lWLRtfoWxg6WOcYtsm2Nk5JiYtYaQsKlhxX5mbojtYKMwm8iPfKe+vLCdfpWYoZqkSMV+YLvdu6t0/89qfKdVq4zg0xulUtqrvm3+/221gaFj/3KUvJyghpxojZiSppTIk5yBimW+a3+2uJA/ubFey4FsqZuuVP+GV8OTtZOhsX/GjaGgu5l5w0xxpmCmotF3hLUp/4F/z6FLw86Nlrx2uq6CXpl41qvKqrF8xf2UhpqlgauV7KS01JXrhHuRmVudS+ebfnGLkmpvlojQ2aK5XcCftu4srWe7X4ipv56lhsyhTMu1zY/Ia7qFr8ppi5zMsE+kr/Y1d9xTWbPLb7Cb2Iq7ZoSF0LNot6SXjYhEn6JpvU1yfOw6hbN9plgAjipYJZuKU7aIdot7kI5rmUNwjrNJ2oliXJiYUj1sXba/sIZUfYvMcWFHLlJISppFeJc1qZpWcHdlR215EzYAaWE/fIcmWZ+ejNdxmKhZRhlMlj8/KYcAS3cHpgAFAG8AdZF0HVTBCjhWYTtTImpMGrKzOp+ZKwAxRUd5eRFZuGVgXa4thH+fcSJijiAzRjeqtaqKY4FPhoeBVF9K1YEAiaCkr2wfGzlrjItLoEAvrmUAT5oAcXE8NGtiyqhCY7jym5/rgXA4cvA4kkqLu5ecuaHqtoFraKFz/9l0ivQ9hNBvg4m8oK63ntd6VkdOgdKnfGR/iX5Sh9Eukp+dezSl+aTYnDGziVDBsYnOd8R0vWvtr+p5i84abte71JS/fl5OiIeDAD+IspymMP9t9/Gxh6ppsKK91PuR2H14hXPV0uSjsodru7Jtwk2bhYpu1MHfq2ORaaSitIaRrlurroiPrHp6yq/3ckrS035aoUySNpc5l++VyYN2WNeg9GeXpun9gpqp5Z6CnyJM0bapcL/7"],["cv1",44,18,1,"noSClK7M28ayp6CVi5GQjpqsrp2VmqCgqcDEw7qYenyAhZCjt8K3pJ+Ti6Onhn6MqMbZz7eqpJGEj5abpbGwn5SVmJyqw8XBt5h8e3h9jaG2v7KloZSPrLSQf4WevdDNtaqokYWPm6mtr62gl5SSmq3FxLuyl4GAeXyNnrG5qqOhlZGywJ2FgJW2xMGuqaqVipCetLGppaCempCXrcTAt6+Zi4h+gJGfrbOhmpyXlLfHqIt+kLS6s6eoqpiPkZ+4saGco6yolJOpvru2saKWj4SFlaOsrpiQlpiYuseukX6OtLSmpaqnmpOSnLewm5OnvbiakaO2tLW2rZ+RiYiXpq6tkomWm5y6vq6Tfo20rpymraOal4+Usa+YjKnGwJuNnqumrbexoI2JiJOnsauNh5uioLaroo16i66kkqWunJiXhoWnrpOCob+4lIaVmY6YqKWSf4GCiqOsooaFn6air4yIenGFoZaIoKiTko5zbZmoh3GNpp+CeIF5aXODgnZnb3N6l52PeXuZop2kZWRfZH6Rh4CWnomGe1lTiZ50V3CFfmxkYlJBR09RVE5XXmaFh3ZkZoaVkJVFRUdbeoeAfIuVhHxoREF6kmJDWGtnYFZGMiQkISY8Q0dOWHR0YFFTcYWChTk7QV1/iYR+hJKHe2JCP3KHXkJTZ2pqXEEtIxoQGDtPTVFab29aTU9pfHh6RUpPa42XkIODlJKGblRPb4FoVmN6hYl6WEg9LiMqUG1paG55eGZfY3N+dHRfaGd+nameh4WXnJaGcGRwfXhzfJaprZ9/cWZUTExsjYuIiYuKfH+DhoVxcHiDfY2ot6uMiJiho5yJdXJ8h4yQqb/CuKGXinx2bH2eo6GdmpqVnZ6Yi29wiZGJla7Bt5OOmqKoppWAdX6Rmpqsv8K7sK6km5WAgZ2qqqOhpqmwqaCOcXeTkoyYsMjFoJidoKWimIV6hJmim6Szt7KxubSwqYx+kqCjnqOut7iooJB4hZiKiJiwzNOzpqKfnZeUioKOo6ibmqSqpqy9vr21lHuEkJOXpLTAuaSekoKW"],["cv2",45,18,1,"rYqPKv7dlMuyiNWUk3y7n7+FqnfOrbS4ccv/Uk1ZzqKYyK6ym89rj7D+fm6Iz5PhQdfTWKfco9H/rZF4v5WWmr9qUiXbo+qeerebYJmisbSRfMuaeZhyqNd13nWfbYyZgXR1bkiKq8S3/6eA9GLHZ6k0xI9m672Zcp+ku791e3xTeZK52W6yhf+ZtGxzpYitTbxu8Y3SVbFvg5yLqMG8l1dzkTHBj5mfvaZpq6xvz7U5oVzUy2t2qJfvyJXAPbLOmn+//61r60W8htF45bJMQJPjqZqfyLWxcd7nYv/HikPDwIZK3IaM///UjcQyqX5kVb6orM56ZkuTypzEaYx+ZZugfn6hXLpjkXGMYVV0gJKl7ciTxYDrvl3Iyxp8ikFqcbmx/47bpa9mQnvI8KOhdu7mh55u67abtbeNWVI/qf88mrFspV/Vfpa5hT11uoynXaC9mfaIZUbRkpSi49SIpMdT4NbBiaNgglN/VnmoML0sHXaEoBp8jrtljjuBXaZQVJrLl41trqCYf0dtSy6tqEjEf0aTXB0AQkgAYptmd0s+Yn8We2IUNABKSnY39kBMXUmgOZmeDIRS4yoQASwdFxE9R3gAEAAAAEaZXS56eBtkO2k5IwC3OvE2eTg+hSZLSKCbX2h1OQAFOIMSAFwqPT1zAAdMOVJkuUaPnip4Wz4Fei1cFcOMWj0Aem8cj5WfKj99VwCOdK5+Q2SJqm1gdkhXEZVecH2X63w8kWKEVk50WCtkgb1ndZ6dzJ6qt8h0iB5hV35ZcHWcpXlY0tp9sVJQj+Jmc+Q7vLGJn/9kho53VuigQ3atq5eqoaqwPfCf9P+LWMKQjG32i1uKZ6uObsCCx+CQgqzNoaihscJ/iqSAqb2hg6afzWp5/+yn3FihxkR7y92GsvSRYaGR5ax8/4u8xsutwaFdmZqbq4Xm8zalgaaehZGE2uKyx5+rf6aAt8604P87pYiOYaeYhZiHL9qVdbSDONFRmqro4K1+kKKawITYkpCXwrLW5b4wUKyh/6Od1NqZvGx14l7TxsvSwTlyhtJsgZLmXGHEOp6YVo9yrbfvpKqIo9lE"],["cv3",44,18,1,"wruzqaSfkIiHmpV5bnyltKmqtLq5qZ+0ycGfiYWYwNDFsaK70MKkl5ycnbO6s62rppuUkoiTkHtxgKKsqq2vtbWqprjKyrCWho+tvLmvo7rQwqefo5qUpq2lo6+rl5aej42LgXiHn6OprKWrsqqqs8HMv6OMjp6nqKeku828qKesn5SdopeZs6+UmaiYjIqIf42dmqWqmKCwra2ttsjEqJKSlZeYnaS7xbOnrLSqnZyfkJO0sJKarqGRi4uEkp2VoqeMlK+xsqywwL2jk5SQjo+Vobe8qaOsuLaqoqOQjrCukpmvqpuNiIOSnpWhpYOKq7G1rrC4sJiOkIuHipGarrSfmaO0u7GppY+HpqmQk6yxqI9/e4qZlqKifIKhqbGtr7CgjYaGgH2FjY+gq5WJkqi1rqmYhHeXoIqIo7GukXRsdoiPn5t3epGXoqCmo41/fXdvb32Df4+ehnF5laedmXhqYoOSgHeTo6iQbFtaaX2SjW5xf4CJh5KQdG1yZFhfcXJse4pxVVuAlIR6UEtPcYJzZn2LmZBrT0JLZH97ZWlybW9se3lbW2hUQ1JmYF1qclk8Q3CEbFk3OktseGpaa3WLlXNRPT9Vb3BhZnBmX1tqaExUZ1E7T2NWVmFgSjI5an9kSTtAWXZ6aVhia4idgWJQTFttcmZreW1fW2VjTlxyYUpbblxbZV5MO0FxiHFVWVlyi4hxYWVwjqONdm1rdHt/c3WHfGlla2lcboV+bXeDbWh0bmBRVICYinZ9d4qhm4BubnuVo4+DhIqTj42BgJOJdHJ1c2x+lJuXmJmCd4iJemhmjaejmZqPmrCqj3p3hpudiIKLn62gmI+NnpN8fYKAeIWarrm1q5GFnaWUe3WVsLOyraGls7Cbg32MnpmAe4eou6idnJyqm4OIk4+AhZi1z8u3nJCtuqeKf5ixub+6r62wraCJf4ygmHtzgKm+qaGorLWii5eooIiCkbDV2MGmmbjHtZaImKy1wsK5squnoY2CiZ+YeW98qLqpprG3uqeVqL2ykYKJpM/ax66fu82+n5CZo6u9"],["cv4",45,18,1,"/yS5h42ZP5h5/6+SloJvkLyY1Jql8b+Lm7//lpjWeJ2gwajFFtd0ULLHjm6lnOXEqdaVcby8lHiqIsG3TaJvxTlxwtkzhq+A7mOxapabjEnzxMXYsH93d+NWeYeitFhAl9S9ooemi8BvnpGyov/i4jGGeLEl0sxWZp6ft/2NvZ/vvNthjW7ivIyFs3hts/+Pf2FYtcacrKGiT4ShdINyisaHk8S78Jmeg6LF0c+j7I2Uw4D/1f+hj6vHhbai84HXgnN/Z6rWq8L0sKyVUshLw6Lbn5ylhpmlnJl5mTibZ9viQaqcb72MSpacqWbCx2qCnof7rnF8oP+bqbyh/4jIq6CX+52ldH+/1MnfxqXMuZi/3aiKvf+Vm5jePrLZcui6g6hSgflz9pXOoiqBp5Kern5Je8mEyO2cYl6YsJqdc5hublZFfFpmoI7/r2u3oWrGZAC8YsloWc1Yl6OegZS3ZKyj9IVUpn2NYqg2YgAzm2NcQ5eNEp54eUvOiWhaX5lzimypqU8Rf6Kbel1ePrRnN0BOnpAqgZxjcYFaTE+4e8sPSJs+RHV/Q02QkFl0OFoTLDIhOpehCIYAbwgASF8JGnwjPYwTNjF9XLltapNjVJEwL02841JhAGJyAFMAZjgdhZ6hAH9aGkw+Jp5JjqxNmreEMZhrqY6dldORS5FcZnGK22B8aJZKO1eJgkNMkJeecJBIZWl3WUqXtHFtmLg/33fLioaQxGqGbUHRpY/PZI3pwSIAVLt2jaZmnJqin3Wse9P/YSxzm8m8dnjdaNWTw8XIym+wnbDdj3t8kMV32a6WWqnBSdjysJua23Ofl5gowoGllsyOfL7plOiwiPB714u6ZXrZraWOul5snHqBoJyY99bhopukkjuGyvXUeL18zJ7O/9P/rZTn+4moXZrRoIhet8zCsWX9op3JOKGet+i8SZ6arGRRwLajTv0Tkv+csGroZLGrcNFegqOQvNOWiYuSzZq5oHrQcaXvbqJVi5iYiqv0s8WimHtKqPa8ivePhmh0mP+acYaZT6vItcNkUOXbV6+mwK+LrqyiSKWUU7HIspKo34DTyLLt"],["cv5",44,18,1,"o6m8x6+VjIybn4qBiqK6x7alsK6Zm66+uq6rzt3SwbKzv7aioLvJwqyYnaiZqcHNuJyKgY+dkYWImbDCwbGxrpyTpL29tbrV1MnBt7W/vrixu76zo5iZnJaqv8m6oYt/jaCZjIyZq7vIv7Wwo5Wet7y7xdXIvL25tLi9ycO7sqeem5mXmqy4vLKhjISTo56UlaOvtsnMurKqnJ2vur/Gyruyurmvq7DOzbion52fnJmhrq2poJmLipylm5efsru1xtK8srCmoqe3wL+5sa+6uamcm8LHrqCbnaOfm6GtoJSIjIqPoZ+PlKS8xbe+yrSsrq2mn7G6tKqss7u5pY+Fp66dmJeYn5mTkaKTfm55ho+dj3mJobjDuLCxm5igqqSUpaqknqq1tbSliHKFiYSMjIeOhHlwjYRoUmN+jJF1W3mWo7SymohwcoGbm4WPi4mNoqujpaGFZ2ZgY3Z2am5dTkt0d1U7TnSHg1xAaYeGnqWBWz1CWoaQeHVkZ3iQlYWNmYNlUz1DW1dISTIiN2R0UTNEbod+Ujdje3CLlW0+GBw8d4txYURMZn19bHiPg21PLTFHQDIyGw0/aoFfQE92kIdiSm59bISMaDsTFjl4j3JbPUlkdHBlc4uGe1w4PEpANDcnHmCAmHhca42jm4Nwho19jIxyUTEyUYmbd2BMW3J9d3F/jo6LcVdfZFlPVlNNhpqrj3eKp7ewopGdo5uglYFvX2F2o6l8a2RxhpGLhZCXlpWDfIiGf3d/h4SjqbOciJ65xsGxn6i0uLWhjoiMj5m7tYF2eX6VqqKXnqCemIqWqaajm6CvrrOts6ORpL3LybSbpbnJxq6Wlqmtrsm+i4SIg5/AtqKkp6WXiaC7vr+zrsDFua2xqpafs8TJsJGZssvNuZubtrexycKblpSHqdLGqaerrZiEnsLNz7ytv8u3q7KznJejtL+riYyjwczBopy2tam9wKynno+13NCyqa21noWYwdPTvKSzxa+qtr2lk5WeraWHhJSxxcarnrKwnqq4ubOmnMLg1butr7ypj5i90c61nKa4"],["cv6",45,18,1,"g5v3xVKkhatTsLDztL1Z/0Tbk3iDgree7kikd8s6k5me1a3W1HN8msnOgIV8gpOY/4aQtm+MoMZd442nycDUqJ6vbdx4YP+YZPuO1KOcSj9um8f/a9GBl1VVcFuXdNWen9CxlZKRzb6pv3ywUNqboLWWitKdaa1C6qGd//+dts3rkJ7UpL21YnAXjt5k2c2Ym59wjZm6w3bEdJOumpWpgHuRy5b6ppWb7puFb93NvbHjxF7Cq53JpBDx152QrmKyl5F1gdrlvKB3x/NS3TaStl5XrJyc5nz6qa7Bs///vppofqWfoqS9YXHczonlgphJz6TayKmt4JydqM3T/6HlhZ2f/cWQw7iXmHf/rddsbp6ezXPA8njTdbe3/IOu2muleYLIyP/q5p2XrDT5hJ+e0eOSuqJzradY21awZnR8vF6R7nuevICyfcGhcOKYi2+IlaHTXovbp7HwrZuc+NB3tGLVwJiLQMaWcKxtXWU7/4J+rQB9jFuiKIWyC0GHeVaTmj6ERRoTspuaQWqLapWOaBhbzLPFMFRBVWNj0ECVCpw2ZHC7bEEjVD1bR2Y4mrcmrM9cfaSTZmgnGUJNUnI/RJIANx8gABsEeROQBW5gEoe/Q1w+KElNTE5EuH+GMq+xAJ6VmoAuL2QkgmV3LjgdP1lYY0IAYlhjenRvfVeTWVkfOE2BkaaBcnt2QFVpNJqhWW4jACCCfYhcDaUOXTJrV7MAzFCRkVNilHZXinYppocNOrbCliB3sYx5UJukmInAaX0qu7mIAG9797HAtNdVcVuKfZpammv/ff/kUMW4P6mNrGiVqot8i5ibGtyTorta/2Synd2TWbEmlYrtlYt8dYW9X5dYmahigqbIzphtUMfns+6LjJqdwLOn9HOLOG2Ii5ivgkCruGl8/NfbxauKwZqOo6DQc/9xjtN6jKUPinOYvZub7dii2HKf7MxehtLD20xlmHSjprafwcytaOawu65Uw4Ro5pa00vdKgMeEAZ2izbGPsKSMsrdy2c/NG6ufc8Na47mM7by2ZMDs3WTr9tCSWXeHssB/Uo9h552dzXLWnHtzqNhDwZt8"],["cv7",44,18,1,"r6uoprDV59CrmqCgvdLLtq2wuLSkl4iJna+0s66+yMy+ucrJwamKlZ2PjaStpp2Zqdft3LWcnZmwwb22tLK1squjmJGer7O3t8DFz8W6ytHEqoyNlZSXqKiilpKjzeTfv6SflaOrqK62tbOtra2llZqqr7vAv77Qy7rK18erjoSLl56ooqCVk5+9z9fErqiYm5iRoLW6tKmttaqSk6Oovca7tczOusnbzK6Qe4Oao6Obn5mZoK62xcC2taOZi4CUs8C4p7C8q4yMnKG7yLatw8u5ydvRtZN0fJ6pn5mfnp+jpaCttLfAsJuEd42wv7emssGshoeUmbbHsqW5xLjG1dG7lnB4oq+gm5ycnqShkJSiscG1nIF2iqizq5+uw66CfoqOrMGunq+5sb3Gx7mWbXWis6SakY2TnZ2Gf5CjsauVfHSGm5mRkKK/sX1xd3yYs6SXpKahqq+zrZFscpuvoY98cnyNkHhrfY2RkYFtaXuHd216kLOud19dYHuZkIuWjISKj5iYhmptjp+OfGNTYXl8Z1ltdGtxZlVSZnBXTGd+oaNtT0NBWnh1fIVtX2Vse4F4aWp+iG9uV0FRamlXUWlkUl5TQDxPYEk+XnGOkmVKOC5FX19udFVESVNpcnBta3NzUm5hSFVpYFNbdGZTYFM8NENfVUxlbX+DZVVFNEZbWmpsTkBFTmZvcHdzcGpIfnxlbXNhXXKIdmd0aE5AR2t0bnlye3xsa2JPXmxqdHJbUlddcnd3hH1zbFSUmoqMg2ptipuJgIyGcF1Xe5SVkH19e3V+gHJ+hoOIhHRvdXWFgn6Ohndxa6Wvp6aUeYGao5eTnqKWgm2HqbCihoF7eYmVkJmamp+bjouSjpiMgJKNeXWArre2taOQmKWknZ6nuLmkg4+vvKuMg3h5jKGkqaOpsrCioamiqJSBlZN8do6xtrm4rqy1saOeo6nE0b6Zl6+9r5KFdnmQp66upbK/vrCvurK0nYOYmoF6l7Gxs7KyxtLApJyjp8XazKqirruymox7f5arsrCnucbHuLfFvrylh5mfiIKe"],["cv8",45,18,1,"fGKXud2piH3J9rFmdPSuTaBqhIuAwKGGuM1Sl3ObY5yVlW+QbWCvbN7IQLFtoaE7k5LPZMRojnXnu/+/ycmBm+KLqJ69jZerpHTMXpaaz41uZrRqX75jj5+JlNp9WDuNhaSAf3N9n4Sc9q9I7qhoxJh4d2WZzIes9ZibiGJklq18mrumwq6v9rqiv22Kw7vpnFL90mbgnUCGgut0jo2IbabRum1ioamgR/3JasneJICIvJWQoP//iHT/coaku9a2d7yv/6JgbuuIOYaj3nDEyoCZ+5mSs9ycnnijn/+Z4uWZ3zepzyxq2ZdtkonIu5aDoea2xJ1kgcWpd1Oqk5OUspmW0+fNk6K9lcDefEzgo8Zh+cidkamblWvioaenLb2SlKdzzYB2eKvJhVfYbZKhgIO6z5nS/5hpbV2DdFe5GFz/z7q29bmeYJp3eHWXiMtdkfqh19bgv1WQh5qfXkmpmntqhIiIloWvlpJwZaaJghgNm6HJspqHP6pglZyhrXKAXHrjcby3p6yendhuhmuPXNd3L922ZnFqUp2tjo5pY7CkYl2hiHQROWOKAquPejV1nwmDf52fW6WUc9d+vShLd4pfTwJ1BndYI3jMI0l0SbpTTkGISIZ+ACi8c3SEI0kzUpyZaz6IZnF2IQBzWKRtXBSVajdHRocAX3c+cn4dZiwLPLwsAAjZRF5CGABuU5yjNlR5jqlzshY/bVZPAAupfnRzGZ28y4ViR73HVHNqQwl2hzBfALyab1xfaJyWd3vRLYtITACXL0eIU46Ut8ltvZWfiL5SotCC9maWcXlhcpBxveBKuJai/5eYnCa+bZ6RyPfEyoOnxFf/e2Hz/3+D/6c8gv/AxdvAjVK4Z536u6Okw81fqJ2fen46ePGbd4ObmI15w/CIid9bhpGslnizaE0+yU26xcybiKiGY+N3/b2NuZ+jdW+suKV/it/cqmLDs7H7zXR06a/Rn3W19bhvmI+x2/+0lK2qlKqpbsWXeJyh/8Gtg5XThs9AstG5qNt+d67kvp+3vmocdV6LbH2+raf8kpbocVfqusfJ15+hcrG1k8v/cdTa4ILn"],["cv9",44,18,1,"vcaznpSOj7LL1ODIuKWLf4SRlZSerqWKhaHI1sKoqrCtuL6wqKSYm6i4qaPLxK2dj4J+nsHU5cu5qI6CiJabl5yvrJOQobzSxKurtLO6xLanqaGjqrSrtNK/pp+PfnWPtc3hyLWqlYyVpqqhorK0oaGhqsbAqKSsrrXDuKeysK6yt66/0LqlqJiFfY6uwtK/rq2gm6i8va+st72xsqGWsLSgmZ2iqLuzp7y+t7++scPJt6m0opORm663vrOpr6ysus3Mvbe7w72+pIiXopePkJecrKikwMO5yMa1wcK1r7yon6apsK6tqaaxtrnE09XHvrzDwMKqg4WSko6MkpOdm567vrDFybq/u7KwuKShrKqro52ho665vMHN2M6/tbi3va+IfomSko6Pio2OkqyxobfCvLytp6allJiimZqQiJeaoa+tsMHUzrekpKWurI1/h5OUioV7e35+lJ6OnK2zsZWQkId7hYp4e3NshImIlI2WssvGqIuIjpeejH+Dj4t2bGRmamFzhnd2h5iad3N0Z2Nxb1JXVU9vd2xwaHykvLiWcWt2fYmFfHyFd1hNTVdWQVBrXExZdHxiXV5TVmVcOUBHRGZwW1ZScJirrIxiV2VreYF8d3pkPjhEVk0uO1dGKjVXZF9ZWVNbZlo5Q1RUcXtfU1d2lKCpkmdUY2p2h4V8eWA6PFRrVzRAVD0gLlBgbGdmY25yaFFddneKkXNlcYiWna6kfWBtd4GXmo2Ebk1Vd4xvU11hQi9GZG5/fnt5g4N8c3+anaKliHuKmp2gtLeXcnqIkqyzo5OEaHObq4l5gnVSTm+EhJCVjomUkYySnbO1sK2UipahpKS0wKqDhJKgv8i2oJV/h7C8m5afh2Zwlp+Um6iflJyamKq0v8K3r5mOlJ2npK2+s4+HkaXL07+lnYyQtb6jpauSeYywrJijuKybnZ2eusTGy7ywnI2Mk6KforWzmIeJpM/XwKWgl5ezu6epq5aJn7ytla7CtJ6amZy+zc7VwrShi4OJmJiZqLCeh4OiztbApaSkobO6qqmmlpSnvKqX"],["cv10",44,112,1,"io6drqKOb3Kjt4pceK6YZF5YVmJ1h4F9kYZbVllZWOxrYFhQPkNfb5KFVmeqsLKumKCgnKahl5y61N3LxLynqry0q7CypZygoqGh7IiOoJeAg5WQlJ+VmMfIy83Fs7C4w8fFwsHH09PZ49HE09LLzsm+uLvK1dHszsPCu7G5xsfGy8vKzczP09fNxba90NXRwL/Y1MjRw6+yvcfBta2rssbTy+yytrizt9HTxcrDq6m+vry8u9bKn52ynZWbp7irm6izs5qDkqSCYHOZqJuf7I6fxM/Ex8SunI2JkdPCv7iRjmxsbE9Wdm5dY26Ejn50fIeQi2M+UnxyR0Psa2d5k6Cyuq+VfYCLtLixlD5kbGNgeXVqbm9nYHGMe2JLOFRgWlNXZlZCSuyDYU9ibYBxVlRug3q7u6GEHSo8QUZKI0KZqYx/kJN1WlJBPEVaaWxbc5eT7K2mg1hXVkA0JTlnbZiXlZRdXGSDkX5aXoOJZS0taJaupYNmY3x9fH2Lknjsc4iZkZ2blIJmf5mDrq6ytquQjL3Nu6aUmauyo5CUq8PCqKK5vqePkZiTiOyko5umrZifpJqjr77KztTT07Oy0N3Yzby3usC5tsTLu73JztrUyc3X0su87LDM1tLIubWzuLe4w8jO0tPav7nO4+3k0MHHy764wLquwNDQ0c3Kz8vHz8rspLrQyLy3sK67u66tsbrEzdXJs5iiv7mbeoGlraKUi6PGzrikosHNtq+njOx7jINtbJurnJmZm6Snq7Kzg3xrSE58fHBqZXmOopF8mqWVkZB3iKexs5R57EpAREVWj5dzfZCpz7uynoxKTl96mbSrl394dHqYcGWnrHSDs3g7ZJ2dkpTsRCw1ME2AdVttiYxstb6ujR8WTo2AYGF0cl9eiaB5dINYRWaAZkdLQyswSexTbXBSPT4wNlx2kYWkr6qRNEZvg2xVapaYalqEmJ+wjVBbkZuLbltncls+7E1ym591WFBUXmFgWLavrK2Vq6iTgYehqJN3j66sr66IdJa9vK2gimBHSkrsVXKYnJSXhoWPdXCWwsTFxbivq7W8vdDdxsHQ0cfNx7Kpuc7c4dTCr6ijkuyaudPMr6qusLi8t667wMLIy8XI1eLWyNDSzM7Y3NfJvbS3w8za59rAsLCu7MLM3u3bysfFx8/V0qqprbq7wcbK0sq0qq+fo7rH0MCwsbfM1czDwLqqq7zst6SowbWbma7Ly8PUsZqRppGUpMPNuJyUi3KCl6CqtMPFopGUkpSNlqStt+yqgYqbiHd+jai+tKSeoJ2omaCqtKOUgHpqQUB9l4FsfJSWmYJscm1kUWN77HaAnq+KaEsxQmuBnJ+nsbidd4Cbpq6jiYCBgaKzj1xigo+ajXZmcHphV2zsUVuNppFzUmFfPC89oqWqsH5PVHePjpGcsp+JkbK5e2F9jYSQjm5WU1ltm+yCVkNae4aFiHt4bzqXmZqaY2J2kpqGZWGKqKixuqyLkq7AtaKOc1hlgY2I7J+JfnuLm5iEia6tmMPAuLGOnqy+zLeYkq63rLGuo5SKkKbFxK6hoK61rJrsjZunr7eqpLHI2Merzc/NzNTf4tvNurjFxLG609fPysPE09jGtKy62ufc0OzDztDHt7C3v8bIycjMyMXHzce7tr/KzMfGu7vG1tvOuLK/vraxsrzL087J7L/Cz9bQwbm3vMLLysK7ubaeoZd9gpuVdXWNoK7G1sScmZqDfpiyq4uHlJ3st8G3rbCplpOQnLnAyrqvrY2Ql4eNhn58kaaMdo2MdIJ7V1plXWZ4iZaPj+yQjIhsaG11jKLAvqnMs5eeg3ZrYloyJlCKonlkgY2Rbzs3RURCTFdshop/7CQiTF5OXI+ymYaNjK+llp6Dcj0uSFRUX36EZVtwXWRucZeso5aHdnF1fnfsK1CLo4qDmZ12TDxGtpaUqpF1R1OAkX5ra1M7VoV4XmKKfUhQgIyUa0t6kuxsg4laRnCHk4VjNQnFsrPDvqmYn7O6ppWSh2d6oKmrv8OLUlZ0ip+jkJGU7J/BpGlgipisz7J5aNHIxtDatp2lws+/rrO4pqK7z87GvrKfoqmvucTBu7jss7y/sK68x8/SvLjAzsjIytPQxL7Dxrmqs87Wz87a3dLEv7/BwszV1dnTvOzFxcvPz9vp3snAzN+7ub3At7a3v8G1pZ2lvsGpqNXk08LN1721wMKzqKmr7L2bkKm2v9LFppKes7y6uLy1oY6PkJeKfo+ekYSgs56Sj5mdeXKcs4xjaYzsm5KToKmxqJ+ca2ONqquztX5ZSk1gf4B+hX9neYxsUF9bWF9Xfq6delpYW+yevaynp5RvZGpSQj+mscPDimZtblExKWSjmYWNlXBFXXmFiYGdqYNsZl4z7Hann4+fjXKLlV8nG7CpoqJlWUw/JxkZSp2ri4mTfoeepKaPe3JdXXB0h4jspbW0k5CalKOUUxgAwKScq42Ee2xaZYuvupJsfHVgi6ScnZ2TgYOYr8Clg+ySoqCMk7bArYlcU2e+t7GxjJOjqJubrb3IwLe0qpSbtbnAybKIk6ulrqea7KG7uqSuxMO9spabr83JwsK/09jIvL6/xdHW3tfGvcjb4uTi1sbExb/DwsTs2ebW09jLx8rGwcvV18i8tZu+1sa0sbCzwr/G0cW/y87Is6e8zsnJysTAwezK2tvZxqWtsa/Cwra7tKuigKzGsIuLkouQjpahn5GEe3ptYoCvwb6zlod87KW50+rNmZOQhHNra7+orbSbu9azmaqUZG1wTTlCWW5aN0xbTWJlRjxCZljsI02Ef2VaZWxZYF5hsqaco39/kqSuuI5LVGU9EiJocVFCbHpQSzYTJGOem+w8XHBTPGWsvq2afGuoopSbjo+VnauwnHJRTW16V2l/RzJDR16Cd0s6bpOZ7IaHfFk7RnR/iquqeaObla3Kvq+vw8SXcIacpJx5cWtHQkFBgauWak93nKnspK2nln5fYW9jcYx2o6Kuxcyod26WwbV/fZ2ts6qXkpmijIW82sCflaevuuyYiZGIfoiXnpaRsMrEwsXLybm0ydzj4Mm5sLG+y8e8vb20utLSv8LGyc7S7Li4tbOzs7q8xNLSztLJwL3B09bQ3OXdx7m7trbGx8fPuJqevca1rbK5vLjsuLmwobLMybvAyc/bs7GqpX2Onai3wcK9wb64tLqjh5KJbHSjycfGxsKumeyXmqq8ytK/scTUycCSlp2miIeZwdTKwLyoc2eAmY1haWpWap+1oJSapJ6N7F1igZB6eIGJk5KluL2gjpWKmo6bmnA9JzM4Pk9thn9rQSA4lcudc258jHnsNGePdk9LW3KDgnJqvpuUqZeEXmxsYT8HJneilKeulnhpRlCGiG5dSk5sf+xohIpoUUY7T2hVVHqZjoaHPE5bPB89VUJGRT1EXYSarL6ZmK2vfEZdf29d7IqSdF1LQmGSlXlxgaOip62Mgm5pcnlyfIuAbmx4nLLI3cawutK2m7C2pLPstZeChpSVobKwr5J5s7W/yNDFxMe6qKO9xLyzr6+/w8G5p63C2dXH1OHV3ezHsLe3sba5vr7GvrG+wcbM4dvRzMfFxcnLyMbJy87OzMCws8LR297g39fU7NDQ2NjEvsbO09fX5662vsHBwb+7rp6mxdjW0dPUvquvt6mcjpazxMfBtafssMS4o5uXm6aps9DrrbSzubmth2Fvd3JuhKjBx8OznYd5dG1hWVJhepionOyNoZ2GiZecnamikYuXna68sItbSFtqb2dpkMW8jHySjXeRqIdugpF2coKM7G1QdZCRh4R6XExQR7yyr51aXDsoM0xJQ02BqpZxfZ2lrLafe2FeYmOFm3fsUlmBjHZaZWNScYyDo56mpX1/aVBWeIJpcIWdtKB7a1hYa4ephEFAUmyDhOxxiJqgjXVvhIJ9j52PlqGujHhzZ1eAm21VXXeXqoZhZIWapLevkYJ+hpKr7I2Mn6+uraGkpZ+xy7m9vr+urLy/rrG6raaQiJ6qm4ucoZ2gmpiluMG9pajssLGts77W49zKwdf3xsrQz9fV0Mm7srnI1tDFwc3W09HIxMrCusLS39bCwuzFyMbJz9DY6Ofg4enGycjGy8S1pZGMn8TZ2tnXxrm1t7CrtLauuNDdx7O87J+Wrrm2vdTi3NnQyrCzsq2Ih46GhHx4n7Kqrbiroo6CioeapJegyMmVi6fsknh+lZB8gqC2s6mnmau1pUhMZVhwh2dtiYlwWWd2XWOKkpqRdIWqkVE7Wux1W01gaGhJLk5ZYHC2uLSbLDFIerSVam9WQVlkiKF+eHFgbXJXT3BkU01W7E82HQ8SIThUd3eAgaedl5deZnywpVdPVR8AFFyJlYmDi5afglBOfGU0JjnsU3N7Tztle3eQpHg/rrGyrnpriaiTcW9nSDFajImCi393l8fGk3yanHpXOexRa5Wzsqa0sKmjYQ7IycvBmomLineBjnJqe4+mtbesl4qQqbikhpyvkX917IyLmMLCjYSSsNHUxs3MzMa6uLKvr8DJwcfIvcDJzsa5rbDAxsnS4tvLvrPsyLi4xMfE09vd4eTf2NHNzdXTysLAzdDT3M/Fzr6tvcrKx8XExNHf3tvf0+zOy8u+tLTB1ebm49vDuLrHvKmxraSlp7a1npyyoIqat87VxsPV0be0tbqy7MzJv5t9haG4zszLyKKpsbSdrLSdalBmcXR6cGJ5hXOKvMSohXqEfX5vaIDsk5iljGptiqi9qZWmwbaikmqLgndsVFFshYxrUGJrbHOQkWxGV4aSj3pcWexNVn+KoJiRlomJkKzNrImAWY6SfnyAgqiwmHpsa2FcZ4ePdEUzSmFnaVVW7DMubIWeyMqjnbWhq7Obh4tzpbaEbXmTi2RniZ6clIuNlJ6EW1VXXmx1bXXsbE91stPDnXpjgIiMoaGXnpGXmoqKnLCliJO/yrOwr6qdnIJziopmXH6Rj+yHgZu5u6OKbmKGnJe4trO5squjprW4v8vPytbf0cvKzMS5pqOrtby8vbi97LyxsbrQ3cehsdbfxsLFxMbJvr/U2NHW1dDR2uTbycfOyLq3yM/LxcHBw9Ls2Nne2+Lo39HY493TprvNztC3pbnMwrerprLF1cmllKGusq24wMe1lI2erOzM1MWoorS2xODVvbyNpbSpf4F3bnaLkoygs7jCva2hpKmqnqGnytTJq4tv7Jitp46DfGeBrbKnj5uwtZQnIjdifoqPkpSWnJ58cJOpjYl+eo66r5eSe13sZo+AWD4kJWCcpJaAnaqzp2Y4KkJjl56PhYGLsKNvUUhbjKawrKyTdIORdux1solaWml5eYyPfWONi42UamVCOmKaoZuinJy8uKqemZJmTm6BeV9HXXuF7H2gm25XbXtZYXlpLpKFipBZf2pBTHiOhoagrr2zqauiiVA1WIR/ZFxylrDsmpWIb4CdmXhnf52LpKKxvaSkq6Cep62ysqugl4eSo6agpaOvvrGco7zNyezOw6adv9XOxLfA0MfKxcTGytHU09POyr+9xLm2v8rLwLrEw8TM0cK9yszP7MvLw8XR0MvLv8DV5bW8u7ayx8vc3se4tLjKw7GzxNPQwLu9x9Xm2b6wssTs1MS/wMzQxrmvqrDKoKuys56jpq6fio2Vqraysa+0usWthY271u3nwKynk+y3pKG1uLimhHmAiKKhm6KidnNTVmJgY1B4jYCDlLStnXM5PYKyqZSSl6Sb7LOEZmhibINvTVBQQqiioJhbXldeY2R3cWRffJeZs7aHQjFTeYBgUn2Gb2bsgoB1W0FBX2Zzio+ak5abnWdHUnFnY22LsqiblW9/kWA7PlaEqq+deE5JWuxGZGJohId8aWRwZmmYoJqKSXeZiImfm5Gim4hpPz5XfpJ9QkFxj30+I2Cn7GuFf086YX2QjHVQWLKzt7OLpMK8sKqgo6+suL+fgoqionxnjKqqimZohbbstaWmn5eZna+7tZ6T087Py6uoxd/i0by7yMnP4uDIvLq6tMHU1Nzi2MK2xOzDuMLQwMLH0dHDvbvPz9HOztXa3NnV1NvRv8rb3dbLy8vJx8S/v87e4NXN7NDSxsC+yMC4u8TIx6a0vriuvrq+uKu1yMCekqSuus7YzMDEv6WLiaC1urrssbWoq6umnKnBvbevbpKmoWt6oaiNiaKxsI9ybkxHicG6nYmNe1JTc52rp+yTjI54XEY+XKS5pnZ6mZ2WT0drkoWSnqmkipexsZGQl5WEeo+ThX9wcn6O7E47S1Y+ExAhNElvlpKTlKGPhXJ/iIR7kau/yap3UlZrfmNJbIV1gY1zRzHsVVlWZlckJVFta4fCjpOhsoZ0o9TLspuMmLmoblZaX21nUFh9Z1t5h5WXZew9S3OUknBXVWhxhL2Xl6CzpHx5kJx8U1RvmbGUe4ecq491jqyipaWowc/F7HFOfJ6dj21/rba2sK2wt767nYufuLWklZCjs6icmaStrJubrbOwsrXE2Nnsro+du7jCwsPV0Me0y8zP0dG+ucDa5d3Pv7G3ubG6xcrP1tje1LesvdDX3ezg0cPL1+rv1srLy8s="],["cv11",44,112,1,"bJhIqb56oJh9aTjJi/ewmXLIeM99lU7win2waK6QkZucmZGYlpeTlY+6hm1lhG7cXGCBqYJlbH+2ZIp0m55Q8pV4aIOPpo6iSpaUlZCTkZOSlpmWe+BfgqGYhsfKtLiLXell64iXhrZ426SVdpmN3bVMzirOmJmWmJiYlI6XlJ6wiZmTlr+1m7R3bWOu0pE6eKGakbe0VaBul8Laq3h/pGSXlJaTlJiWmJeVj49Pwp93l5NpHRbiXoGmfsBmpTasqp2ambK2ZrpmlIOigJKXlZeVmJSZlpWYhpmrjme1v6q5Q5GJO5KOTmqRp6tfYHiLdYWrqpNeeaWyl5mWkZmTk5eWm5ef167OosTKtY+8fcqCcd19lWFwgGTBb1m9rCx2uG6ChC+TlZaPlpSWmZmQlqdNsZOVRJBMJJKOkZaPvbHT+a+x32uCmk640lpttchJppKXk5uYmJKXjJSTtmhsccmibV1jj1+NxoOxTpyaZ8eNcYG1VJRll3eKrY+llpeXlJKUkpeQk5vBulGZRnpndNB3eJO6RtJtZJOq/7N0hWWpsH+9RnlmdEiTl5ORmJablZaWlnamelRLk0SqeHiXfqtXQeCUIdVS5Nqyjmm2fbuCS3CQeZKYlpaXk5STk42VqKdXj6VtqIPLWaSTP2dqtX+OlPuE4IZLbFp+UGfemJzbk5WVmZKXlpWWmJYTuuOidJDBXZGoY+aw1GCXzqHDQIo6eZqJWZqpirC+wn+QlpeTmJmUlJePmK+1y3GofXfCpJHHlWi0Z2l8h7N/QXabiIhafaana29ltY+XkpOblJiVlpOU7ZqRh6s/cIhtZMRQe3V6Yq6J11STWJe/XrdrXZutk5uMlJeSmJWXlpaZlpnEfMphkotogI5caqJt0NB6naSsd613isKKZXabbmWUZuaUn46VkZqXkpWWlb5xhLKp+4vKiY+7qnmKldVul6eUebFn3yA8lamhdYiPaZeWlpaRlZiSl5WUnoeOkYZfhMFqbHx+yIG/sK2pnaTBOJ2/c4yyRJpgmJ2YlZiWlpVqtVp4u52yZJVpQ6ZikmWlpWNiHnmDbqqKjXNOj7HAlFh/k199cmuTmZeUlZBEmcdsonejrFBnboTEj5OVcrujrphTpHNn/rR8sLyXfbetqkeg5JeUl5GY44DRZaiLfJnGnqqRop+xiXV6eqVsrZnEl7yhl4Kjk3R6PcC/elmrmZeXlpW63o2V47L3IE2moV1laKdQhWsMltmCq4yCRIM1cJCRaINeqlr/roiXmJKRk3VsdJWA2pAcbH+YpFOTZo19vrTKaHOKcW6e5ZbLTN7lkHSjQ5Y/zJiblpiVc7xRuMKAvtNtb6+tbAlMwXhlnUPrO4Wdp15+uJKqlJVpW4JeyavBmZWWmZW2Y1hp5YpsybKxp4PXr1pdcbBzgXmQwHqN1UyblYq46Y6MqVx/m5eQlJaUk56wib59kpeMlWM2d36EYlnirZyVc4i+uHZ5eHC0qZt1w48lw5d1xZKXlZCS4ZqX1qhihGqolsmZbmDOxGtRTbh/232ChKnYZ7DKiX++doRoepugmZKclZqlbo86cVuckmdkn3mmmnqCQIyEjMuTjo18yYzDq2+XvX+ShYavbIGTlJOUl3NmsnGgkW56bbeWRdvIw2h5dcuSmoRUtOyDaXJ0UXmAT6B7XpDRyZmRkpeS5H+yVqvKgdho0YaggKuJv5GbhaJ8hlZ8f4mST7HtkT6xkIeWkIenlpeYkpRnk6uYjMKgpVNWfJm4cdSZfrPOlZSdsoiQmIugdD97gd+9oHxfdKSUlZKXlN6zJ715mp2ZRMNnaZmsd0yhg7LCW1qIa9aUlJrOorNzsIB5eMKCoZOWk5GVlGuOqzvOuZzBO5egpKPdrXZTZ4CZj5p3f6CFc3yieYHbiZe916tYkpGUlJKMPt1M3SOIj3WLu5ask5Z2i7S9XXSViWw3mnHkv6BXcL1thKGof6SXk5WRkzDP/6as0o6MmQJ2qqdNg3ZvtWiEqGaMY4uHp3iASHFfVHyLiLp0bJGalJmccnRVnIjAlIOoql5IW7OnxY+dfOCqzqJtt02viJ5bkHJpyKN9cX2UlZOUl5WsjIaQduRtZJiYqIV1aI2Yi1lWu46F2LNVgLWnmtBVsHjBjEuZJb2SmZiUkLFTes5dWmxPk4W3gdCBs76dhVRepHymb4yPq32qR1aQhaBImEXDbZSUmJOW1GXOd1vEqZO6iX2onXXHpNf/X6ukY6opYLNXdIxZcp2ShMWFrpJVmJaXlJhgQrzXmNaneJWrCJrDrYCCP7Eyr599pLd5VbSKmWDJtFVAmIZyb4mYmJWYmLPISnN7rp+bl7acZmZz25+u16A7nHZ4cYlcuKqin2K0ZkqBlZe9f5eXnJuWkZdUQ9OycH5ekDqyor+Uq6Omd75YeYzwZpuhSfa7nIawLtSBumN0lZSXmJeHiGWmeIhivsiBn3O3tXCoQolil5hWXniAgpJ74aBzwqrAwGKAi1CUlpKekECsb6k+zZiwlsvWc4KptjmcV8akbG7Z4pGCr2uQpaasjYldQqWL0paWlZOYdT3RiZ99ZXTYdl7kgG+9bJ+OaljFteKUjJyoxT+7g51xk9s9pJKEmJeVlpSag4yzo8qBQI1qZpqBntXaoa23xVhKzG49jGXBw5+Gk3iQl3l9fdSSm5qVkxtnUod8k5ZhLZ56aFlg+3mibk22xNKTgr2gxLXtkqFVvHzBYaJqZ5OTkZaWlmnDYWRJjXaf3VWDjLWFcK13iq2TyLpsnpVtjaykrW6DqmJxwm+AkJWTlpd3WD53d5jKlqNug67NVJS3fsl1iZ9dd5SPxYCLb3OxuZyfd5bb1S2Vl5WSllmRmoZCnrxmWrFmiJ5wlp6ALmWUS0iPlleqllCoRoSrkmps2Wa9i5GQlZSWkahOoJyCrT5NeM+Ki7+Wed6toH2lVJGgvsejv3qInMStVTaZXGKjl5iRjpjSzlR1rLR+Zm/WpSQrpWSdfGiaXaxkYmCVx5Cya8hrXq6w0f+BwWmXnZWZj3Wai7yGY6qYi8FmfKCbcl21uOuIn4ujsbrJrJm6eauT1MDDlm54gZKWl5eUqpPAepl9ok2ZYU97m4S7vmNGX79wkcVte5SQnn1wdmCulHzzZmRflJKSlJfnsq+da+2l5rTJnJhDx79/lJaMi7CFpLRtp5urjnK2Tz3GmlBRekCXlZeVky8zor57Y8DoolBwi0mWhaiVysZlyJx/U06HuGVaML5JbHuHjKpnhpSUl5GVaXp8gdNCwpOzjjGEb8gSzSw6X4Wlp4h8QKBzKim1PWoziUp5d5ZcmZOZk5NmY6k8c0j8nKFNKCpMp4tjVVWFZI12WXBdQjBqoVqpR1SeY113aGKVlZSQkW5YgayPcWmwYFZcL5/Oe0lYJlu6opOaRVuejZpoRaluQr1VaL2PYZualZWTU5AbZcbHWoamREpDjkmyZl6YRHR/ecSowno/bai4c1FsOHtPOS61lpSVmJsbSUCloI5wtp2teXlvcE1jXsS0rVx6q4JhmK7HpHGkmym9p5XWoruYlZOTl8hEjknRrbVFkZdIyfBynUt2qo22dacgSHRyyrd9Y151epZvU4KjhJeWl5aVicFyp3FPdmiQlHk7p6tQdb2HeM+Kqp6Id2yci41DcVWhXllgqaGTkoyWmpl61q/AloZJZqiqo5Lukp7/aV+Ysjqtr8zVT19KoieqoWp4XVyErcWYlpeelGa55GF0flSsdN7cYmOL7IrFp5W9xHmhgWHDVIfR3XyedFZ2ecqlepWakZWY3sGsZrNjUJecm4RXkL/I4HuCRMKRyomEvZlUy/SDT655p3qBbnlblZeWlptsOZW2WsRvs1iRv4J9bJpIa112sFhQjXhbhhl/p5mihIGVWY9gloGSkpeRkmxvmZ7NhbZsP5dbqslJiLZqv4mTYmyera+TYqb/jZ61Zl+eSKfgr5mYmJWVqJ+BvmOFdYd5k5Jfn4duo6DBH4qCXEcvrm6/iLqFo4Bmf4aXyaG4lJWZmpaH2meoinx/hJmAb1NLk5mWXbOP5aSFoVxihYJ3hrO01G6Ii6vYfISUl5WSlnWvgG5tdG46gKP5y72TYKJrYqKJSWBDlVtpJLBEdqy0wr6KTrDvUJOUm5KVco9UZbx047JSuZZu/7NYmZK5d1SkwVWZpK5UYaKKq4y2XV5Sg72glJSWlZS6UDJOP3PJXqA/IKOEXchmj46oi6ijmZjLzzprjXl2wNy9hGgxHLiVk5OVlIKLsFCoyYZ6xYuefGiU63dJc4amc4bDtx+BREm9MmzbOIdCXJNfnY+Zk5mUhUVzZnzKo3qEoK59g8nKZox/oVWEfa9+qouuj4irv4A2lZh3VV2NlJiVmZOpp4qon5fviMg9x69+h8enjIWQpNdrkLGrcqIvpYpjgVqjjIbAYHqUl5uSkJWuhVWSUD6Csux0hZOmz7OUnpB5jEr8sq29gJSp171dgoaIxYtrjZeXlZeboMRxZpJ8iXqXj1eYYaLPv3o956NtQ4mumqnQX3WNoYiZnaxgZW1rjJWcn5Kfx6RuRJFsdIN0fnODmD5Cw7+Gyb2nw1l+RX+Hq56AsmdhnKVyh6+VkJWZkoKV50Q6UJ+Ijr+JTWtyh2hRTFybXU7Qgnat507AjGiWYUuHx2tNW5aVk5eVTbCm0aB1Tot8P1Bze4TgNYhfustwnb90uIh9Zm11rVBrp0zUsp1MlpWTmJJpWUuS36nI1IZzoXxomnaScFVPgZ+vs5xksJyDd57AwLlTpHqfa8OVmJiYk6HZoWq4cIiRSMBmhr/Kaad6eX60ySOFsX2CtOFslIZgdZKKop5igJiSkZWWtnSMcO2bq3J/gWBousKBM5agwHKHjX5uhIBhTo6vJSxrUGe2Z6hmlJmQl5OReHqYhZGOVJuWpJ+hbppncZ2vn+G3uI9kqVWtZ62imrCvarehkKmTmJiRmYyQoK+a271Rg82rpHB5oJs0tLyeVZ+XaJsJq6Jwk5SB0NJyq8nir5OVmpOZgrihVIHNkmbCg199qXt0kr6SsHxds5FwZMh0fLNixmWll2eYdp6hlJaZmJJvbcWyaZFfqF1c41E/gH5+wL6mgD6smJFZiMTof6Cpd73NY+6o3N6VkpqVmnaexVS5iWuMU9FtXX+Ncs6+aDXTe2XakWNo3seQsYmHrJess8BQTJGUlJWXxllNoXWPvKuE31+MXJOYZcmyqbvbg1Z1Vrdpo2WYS5yLdbmJfquolJiXk5NxyHSplY9hwOCRc4ejlNiRisBAZl2KZoho5Ilxhre5aaRnouWNvqWUk5mcmo6iH9FWeGiSlLN6TYyoR5y8/4yAgIPCmJFsmJWpk89X/72nnoBZsZeUlpOVt3GlgtzVv2nQhYeohECLpG5SeWOyhmxRz/TB9GVqsoByRZDGCJKYkJWUk5Wo0cCRtHl9n1Z0orfwP5t0T8F5vnB3brOYbYlPjXfFfMRZaYiruXCWlZSSm7mJUZtaglivcXBCVpqblJezkWKcg9A+hYTpfECRT72hjI6HkldNjpeXmJWVq6uXzplTgnd78Etbr2iww2OSkkGMtF7NZdR0f2/EnYOjZIHEqIGBkpWXkpGIdYnR6IezfNR2l25p1qzTg5GOta2ktLTSuUprsJaTl4tgsCSedmuXkZaUlXRfjGaHdWCZpr9ZdnNxJ22JmtBKdHyUZoNOXaWAZmyYR/+PclPNl5iSlpiTuLujQmvBb7qTZLGcorO7W35sOYrCfN2ap6F5vJ5Tip2guXy+oMNqkZaRmqGcqZ+XcWx0q66SvbugrD2uqqWzgsi7hb+TcpOQJHVRvHSb1oCiiWqXkpmXk2Jg2ImZaz9ksGyphJ9fl3OpVqqVO7B4lVdk23Wd1m1WwXm3S1m6eZqUl5uafXxar56bsKnHfrdhr5CFmK+/DHSIWYn/q3WLlKVwrVb/zZ+0mJt1lpuWl5r0b55qhaJRe2d7hHNhaS64k9C7bhm5qpBWpnpuSoWmwGOkemOcv0iUl5WSlqOognbW0Ih+cnerdIZqvKPPc2uR24umTWlxvlZKlmOHlnWusa7Jj5OTlpaUyHNwYZlzd6lSuqNEyoGknSu+ZIx+4s+fn4J+XGd9NqQ8vsWMvcZzkZKXlJSimLqnXHKoxtN++lZ9RGHmq4OUW7ipU3v5Np5fnnOPd1l+Y4umY7uUkZeYkqOarsiTPl9+QI9/a6FNkqVNfpmysUykp2umgJSkirLUwFd7fajBcZaYlZScjqWRp5u5yoeK47yElpKlJImak5p/nYKPOJ10yamEYbSOdW5NHGKdmZiUmJa9loZzZ4iOs4KAiOKRrIZ9RJWPi2KDTqSKrbWiPnxhb4nFsmt9fZ2Yk5GYk7KgPZpfdHV8sHKMnVu1cbPXaeKxz8MdKHmjXJ2Hl516zsKXplMyjpWVl5SYSK+DRlMjW6c4h89jyEetg4qfbnOK3f9/lWTyhrxwfIBro6vGb1WqlpuVlJZtj1FvbCtwnUi3g0CLn6iktJqNgVXSrJGinGNPwaOYw6iXmZq9w4KVlpGYm5aHhl62k7iSfKY="],["cv12",45,45,1,"vdCY07apqaSzxcDBmpzRx9zLpczBuqm3tMa50am/v6iiyL+0vau7rLrHscWlsp+1uLOyzc+iypmqtLilqrirrMLGtbe2r66lwrW0usDPsrC6qMzGwrTDyL+ymsewqMa8nrWyx5awtM+khZ+7xNS9qca2s7fMp6W1tamovc3DwsyVnauiprihr5Smza28w67AusKsnqWtwLOws8mt0KKsxb+otarFwKq9sLW4rb6+vsmyna66t8DEtbWmyLKkpK/RxJq0u8G8rL6tkKqrx8ilubielLW5rIi2raexo8C3rbu2nbSvmau+rM7TscDYsaevn6C6r7u/qrOyq6i8tLzIyKSosrnGpq+7y86ls6nFvrCsvMepsbi3vKask7fJlKzGtJbKns6tqre2wb+0zcO7ubW1wr+3yLK+xaSy06bKpL2krLCtyMXFutLIvKXCwrjDxLHAvLyxr7nP3rClsaivvafBxNDVx92uu7m+yLHUzL2/poy1vLukr9TDwbHDzMSwvKiywa6zz7TEsqS3sZWisNCttsG8sdPNjsfAx7jF19TVycbHpN27vLm/k7uhppeawa61tKOrobGRsMbLyr+mxr+7or3Ow7PAt7rFvLi9qaa/rcCXy7XTjZrOuby5ucCmtM26rLjIs7S/xdC0vciWub61qMHMta+z0cy4pKGxsruktcCa3sHAoabIxo7Lw8Kku63B1sLIsqa3ydC2vLCaub2wtJm4z7fBv6q7qem7pZ3Rwr6grqPKrtjAss6UqbDJyr2ZrqXMsMHXtsOxuLi4uLHXrLuykci7oKucvNLMoZrA1LjJn7W/sLPDrKbEu6a+rcK3sqq6tte2oNqU06jOtMC3tcCsv6SqrrXLqKijsMCqsq24lMHGqLWnyMHos6iuobq8xr6wzcHFo6mssJLLs8XE0MG9qrjTl6m60qSwuuyptcSsvr+yvtW6sau8yru95aumvbTCzb61wcC3rsO1pMOtq76krqCZudCoy8rRpq3Ut7jEwq+0w72szsezr8iPuq6tx73stb+hyq68zcq7xKKVia7KqbOwwJnHy62nqsLRqJ66vcStxcuds8PFr5eroK/JrbmjyK2l1be1faqlgYKHsI6217nZuLLHtrmxo7LEyra9qLW1tbm+zMXAo6q5ucSau7mwpa6YjEdEY1VZe4LAysXMwM7D0Li3r7Cez9DFybzAobearbOzps7Jr6OwyJfCrJmWXCcZABgSQZXRwKaSvLiutq3Gt7WTvKDEt5aypMHAyqvAob20vLjJsrPKqIpbLQAAAAAAI0yNp5rHsMeWmZaZsbensqzEw7zC1MKetLLFv8adz7XHv6ejrptEAAAAAAAAAABakKy1s8CypbTWqeCuwpu1z6OqvLyeobu7w7TBy6LHw8qpoYRDBgAAAAAAAABBgK3Ro727o666t6nDu8HRoce+qLawo8SqlcSuvbqxsIupkJBGAAAAAAAAAAAocKbByKXNt8yltLWhr8XJwbuv2KCiqrmvw5zE08WxrMeVmnVmRwAAAAAAAAAlerqx0r2yya2nuJ2jqbfHybO6sZ+9qsOtprytoce7u7aqfpR7XwoAAAAAAAFYna2a0ZXBzKu2taS9p7zAyc2+v7O1xcO+tsikrrrJoqShvbazp005DwAADEdwgra9r5OQoL3BuLiMvKuyppXDvaWdrMW/t8W8p8G1qMm8nLyrl4VqUWFjYoORorq9za+8s7rLvamvrbKrrrO8qLe3xLq/u8m0nrymkr61uLutvaaZmHGaf6ensafQlbSnnM253cK+v6GhzcOquLnKvKvDrr+thNCnxsGuo9W4yLa+sJefs52us8jRlb7UoaXKuq66w7i9u767vrXKs7ChrLq1wqWumLPHv7G/u6ilpry+vLLVtL+6yJzAtLanrMvGoLuwyb/Et7itn67Lzamqq6ukrMLD0rSUraWxqsWottO2nMW+v8KnprmbqcmivMe1r8ug0ai3paXGuL+hsaK2vr6/rMCvzLPJsMG6n8GomrnJwqmbi6yutMqzpaSnq7uxtbi6wcmmsrS0xMKs0b/CrcOxp7impL3Dq8bJybyyz7G+ydK8u7+7ycjTtsOssc6zma+vmrvFr8eWw7fcuLe3sbDBubq5q9WnxrXItMm/yte7upG4xrS5tZnFrKLHvsG6rcaqvKimxavRo8mzw8GWu6uixLu+zsi6q8+un9fZnr6iwrGix6q/rtPJsZa+qcvRuMejwdKiw7vFtrHAqK2Ss72ztpins7LaxKTcoaWptuGzwKCw4MzG0MHApp+tsqvD1bacn8TBtre2m5yVhK+zva6+vrGnrL3F1bbAy6fCsLHEs72ltqmy5ri0savVqtmnuaihq76Zb6iDlsGWrcHCwafHsLqo1LG2rr6htrTTsrS6ydq/wNO5v661p82hj3acm5qDgbOCpri5w6fS3LmsqqHCxtWixsSzqb3doq6vtcqwkaKivLqjvHx0cEaNsZ6geZN+lbGro7ayqZWzxqytr76dxNq/uL6/sbWzwNe52ajEq7m0jpN1UjxkqJjJpKKcmbOwz7m7yciV2J2msqrWuKSxqqy+wLShrMfAssSXq7i7w6KIbV6Kvrupq8fGz8mztJzNzN2q1cG6vKS3p7C8sMSsr668vMmzrb3Xx5m6r6uvlpeKr6m5xqWwwJusoK63s9HGvMzZsra+y5e45rna"],["cv13",50,50,3,"RAFURAFURAFURQhbRxhqRyp5QzyEPE2KNF6NLmyOKHqOI4eNH5WLH6KGIaaFHp+IHpmKH5KMIoqNJISNJn+OKHqOKneOLHKOLm2OMWWNN1mMPE2KQUGGRTWARyp5RjB9RDeBQj6FP0eIPE6KNlqML2qNKHqOIomNHpmKIqeEH6OGHpuJH5WLIY6MI4iNJISNJISNJISNRAFURAFURAFURQhbRxhqRyp5QzyEPE2KNF6NLmyOKHqOI4eNH5WLH6KGIaaFHp+IHpmKH5KMIoqNJISNJn+OKHqOKneOLHKOLm2OMWWNN1mMPE2KQUGGRTWARyp5RjB9RDeBQj6FP0eIPE6KNlqML2qNKHqOIomNHpmKIqeEH6OGHpuJH5WLIY6MI4iNJISNJISNJISNRAFURAFURAFURQhbRxhqRyp5QzyEPE2KNF6NLmyOKHqOI4eNH5WLH6GHIKWFHp+IHpmKIJGMIoqNJISNJn+OKHqOKnaOLHKOLm2OMWSNN1mMPE2KQUGGRTWARyp5RjB9RDeBQj6FP0eIPE6KNlqML2qNKHqOIomNHpmKIqeEH6OGHpuJH5WLIY6MI4iNJISNJISNJISNRAFURAFURAFURQhbSBlrRyp5QzyEPE2KNV2MLmuOKXiOJIWNH5KMHp6IH6KGHpyJH5aLII+MI4mNJYONJ36OKHqOKnWOLHGOLmuOMWSNN1mMPE2KQUKGRTWARyt6RjF+RDmCQUGGPkmJO1GKNVyMLmuOKHqOIomNHpmKIaaFH6KGHpqJH5SLIYyNJIaNJYONJYONJYONRAFURAFURAJVRglcSBlrRyt6QzyEPE2KNV2ML2qNKnaOJoGOIY2MHpmKHpuJHpeKIJGMIouNJIaNJoCOJ3yOKXiOK3OOLW6OL2mNMmKNN1iMPE2KQUKGRDeBRi18RTR/QzyEQESHPUyJOVWLM2CNLW6OJ3yOIomNHpmKIKSFHp+IHpmKIJGMIoqNJISNJoGOJoCOJoCORAJVRAJVRAJVRglcSBpsRyt6Qj2EPE2KNV2ML2mNK3OOJ36OI4mNH5KMH5aLIJGMIYyNI4iNJYONJ36OKHqOKnWOLHGOLmyOMGeNM2CNOFeMPE2KQEOHRDmCRjB9RDeBQkCFPkmJO1GKN1mMMWSNLHGOJ32OIoqNHpeKH6KGHp2IH5aLII+MI4mNJYKOJ36OJ36OJ36ORAJVRAJVRANXRgteSBpsRyx7Qj2EPE6KNV2MMGeNLHGOKHqOJISNIYyNII+MIouNI4iNJISNJoCOKHuOKXiOK3OOLW6OL2qNMWWNNF6NOFaLPE2KQEOHQzqDRTJ/QzqDQEOHPUyJOVWLNF6NMGiNK3OOJn+OIoqNH5aLHqCHHpqJH5SLIYyNJIaNJn+OJ3yOJ3yOJ3yORANXRANXRANXRgteSBxuRyx7Qj2EPE6KNV2MMWaNLW6OKneOJ36OJIaNI4mNJIaNJYONJoCOJ3yOKHqOKnWOLHGOLmyOMGeNMmONNVyMOVWLPUyJQESHQzyERTWAQj2EP0eIO1CKN1mMMmKNLmyOKnaOJoCOIoqNH5WLHp2IHpmKIJGMIoqNJISNJ32OKHqOKHqOKHqORQZaRQZaRQhbRw9iSB5wRi98Qj6FPE6KNV2MMWSNLmuOLHKOKXmOJ36OJoGOJn+OJ32OKHqOKXmOKnaOLHKOLm2OL2mNMWSNM2CNNlqMOlOLPUyJQESHQzyERDeBQkCFPkmJOlOLNVyMMWaNLW+OKXiOJoGOIoqNH5SLHpqJH5aLIY6MI4eNJoCOKHqOKnaOKnaOKnaOSCN0SCN0SCN0Ryh4RTJ/Qj2EPkiIOlKLNluMNF+NMmONMWaNL2qNLm2OLW6OLm2OLm2OLmyOLmuOL2qNMWaNMmONM2CNNVyMN1mMOVSLPE2KP0eIQj6FRDeBRTJ/QzyEP0eIOlKLNVyMMWaNLW+OKneOJ36OI4eNIY6MH5SLIY2MJISNKHuOK3OOL2qNMWaNMWWNMWWNQEOHQEOHQEOHP0WHPkmJPE2KOlKLOFaLN1mMN1mMN1mMN1mMN1mMN1mMN1mMNlqMNlqMNluMNluMNVyMNlqMN1iMOFaLOVSLO1GKPUyJP0eIQkCFRDmCRTJ/Ri18RDeBQESHO1CKNluMMWWNLW6OKnWOKHuOJYKOI4mNIY2MJISNKHqOLW6OMmONN1mMOVSLOlOLOlOLM2GNM2GNM2GNM2CNNF6NNV2MNluMN1mMOFeMOVSLO1CKPUyJPkiIQESHQEOHP0WHPkiIPUqJPUyJPE2KPE2KPUyJPUuJPUqJPkmJP0WHQkCFQzqDRTJ/Ryx7Ryh4RTR/QUGGPE2KN1mMMWWNLm2OK3OOKXmOJ32OJYONI4eNKHuOLW6OM2GNOVSLP0eIQkCFQj6FQj6FJ36OJ36OJ32OKHqOK3OOLmyOMWSNNV2MOVWLPE2KP0WHQj6FRTaBRi98Ryx7RjB9RTR/RDeBQzuDQj6FQkCFQkCFQkCFQUGGQUGGQj6FRDmCRTJ/Ri18Ryd3SCN0RjB9Qj2EPUuJN1iMMWSNLmyOLHGOKnaOKHqOJ32OJn+OLHKOMmONOVSLQEOHRTR/Ryt6Ryt6Ryt6HpmKHpmKHpmKH5KMJIaNKHqOLmyONF+NOlOLPkiIQzyERjB9RyV1SBpsRxhqSBxuSCFyRyZ2Ryt6RjB9RjF+RTR/RTWARDeBRDmCRTaBRjF+Ryx7Ryd3SCJzSB5wRyt6QzqDPkmJOFeMMmONLmyOLW+OLHKOKnWOKXiOKXmOL2qNN1iMP0eIRTR/SCFyRxhqRxhqRxhqH6OGH6OGH6KGHpqJIouNKHuOLmyONVyMPUyJQj6FRTJ/RyZ2SBlrRg5hRgteRw9iRxVnSBlrSCBxSCN0Ryd3Ryh4Ryt6Ri18Ri98Ri18Ryp5RyV1SCFySBxuSBlrRyZ2RTaBP0WHOVSLM2GNL2mNLmyOLW+OLHGOK3SOK3SOMWSNOlKLQj6FRyt6RxhqRg5hRgxfRgxfHpyJHpyJHpuJH5OLJISNK3OOMmKNOlKLQUGGRTWARyp5SCBxRxVnRgteRQhbRgteRw9iRxRmRxhqSBxuSB5wSCBxSCJzSCN0RyV1RyV1SCFySB1vSBlrRxZpRxVnSCJzRjF+QkCFO1CKNVyMMWWNMGiNLmuOLW6OLHGOLHKOMmKNO1CKQzyERyh4RxZpRgxfRgxfRgxfH5OLH5OLH5KMIomNKHqOL2mNN1iMP0eIRTWARyt6SCJzSBlrRw9iRQhbRQVYRQhbRgteRg5hRxJlRxVnRxZpRxhqSBlrSBpsSBxuSBpsRxhqRxVnRxJlRw9iRw9iSB1vRyx7QzuDPUqJN1iMM2CNMWSNMGiNLmuOLW6OLW+OM2CNPE6KQzuDRyh4RxZpRgxfRgxfRgxfIomNIomNI4mNJoCOLHCONF+NPE2KQzuDRyh4SCFySBlrRxJlRgteRQVYRANXRQVYRQZaRglcRgteRgxfRg5hRw9iRw9iRxFjRxJlRxFjRw9iRg5hRgxfRglcRglcRxhqRyd3RTaBP0WHOlOLNVyMM2CNMWSNMGiNLmyOLm2ONF6NPUyJQzqDRyd3RxZpRgxfRgxfRgxfJoCOJoCOJn+OKXiOMGeNOVWLQUKGRi98SB1vRxZpRxFjRgxfRQZaRANXRAJVRAJVRANXRANXRQVYRQZaRQZaRQZaRQZaRQhbRQhbRQhbRQZaRQZaRQVYRQVYRQVYRxJlSCJzRjF+QkCFPE6KN1iMNVyMM2GNMWWNL2mNLmuONVyMPUuJQzqDRyd3RxZpRgxfRgxfRgxfKXiOKXiOKneOLW6ONF6NPUuJRDeBSCN0RxJlRgxfRglcRQZaRANXRAFURAFURAFURAFURAFURAFURAFURAFURAFURAFURAFURAFURAFURAFURAFURAFURAFURAJVRg5hSB1vRyt6QzuDPkmJOlOLN1iMNV2MM2GNMWaNMGiNNluMPUqJQzqDRyd3RxhqRw9iRg5hRg5hK3OOK3OOLHKOL2qNN1mMP0eIRTR/SCFyRw9iRgteRQhbRQVYRANXRAFURAFURAFURAFURAFURAFURAFURAFURAFURAFURAFURAFURAFURAFURAFURAFURAFURAFURgteRxhqRyV1RjF+Qj6FPkiIO1CKOFaLNVyMMmKNMWaNNVyMO1CKQUKGRTR/Ryd3SCFySCBxSCBxLW6OLW6OLm2OMWWNOFaLQESHRjF+SCBxRw9iRglcRQhbRQVYRAJVRAFURAFURAFURAFURAFURAFURAFURAFURAFURAFURAFURAFURAFURAFURAFURAFURAFURAFURglcRxRmSB5wRyh4RTJ/Qj2EP0WHPE6KOFaLNF6NMWSNNV2MOVWLPUyJQUKGQzqDRTWARTWARTWAL2qNL2qNL2mNM2GNOlKLQUGGRi98SB1vRg5hRglcRQZaRQVYRAJVRAFURAFURAFURAFURAFURAFURAFURAFURAFURAFURAFURAFURAFURAFURAFURAFURAFURAFURQZaRw9iRxZpSCBxRyd3RjF+QzyEP0eIO1GKNlqMMmKNNF+NNlqMOVWLO1GKPUuJPkmJPkmJPkmJMWWNMWWNMWSNNV2MPE6KQj2ERyx7SBxuRgxfRQhbRQZaRANXRAJVRAFURAFURAFURAFURAFURAFURAFURAFURAFURAFURAFURAFURAFURAFURAFURAFURAFURAFURQVYRglcRw9iRxZpSB1vRyZ2RjF+Qj6FPUuJOFaLM2CNM2CNNF+NNF6NNV2MNVyMNVyMNVyMNVyMM2CNM2CNM2CNN1mMPUqJQzuDRyp5SBpsRgteRQhbRQVYRANXRAJVRAFURAFURAFURAFURAFURAFURAFURAFURAFURAFURAFURAFURAFURAFURAFURAFURAFURAFURAJVRQZaRglcRg5hRxJlSBpsRyh4RTaBQESHOlOLNF6NMmKNMWSNMGeNL2mNLmyOLm2OLm2OLm2ONV2MNV2MNVyMOFaLPkiIRDmCRyh4SBlrRgteRQhbRQVYRANXRAJVRAFURAFURAFURAFURAFURAFURAFURAFURAFURAFURAFURAFURAFURAFURAFURAFURAFURAFURAJVRANXRQVYRQhbRgteRxRmSCJzRTJ/QUKGOlKLNF6NMWSNMGiNLmyOLHCOK3SOKnaOKneOKneONluMNluMNlqMOlOLP0WHRTaBRyd3SBlrRgteRQhbRQVYRANXRAJVRAFURAFURAFURAFURAFURAFURAFURAFURAFURAFURAFURAFURAFURAFURAFURAFURAFURAFURAFURAJVRANXRQVYRQhbRxFjSCFyRjF+QUKGOlOLM2CNMWaNL2qNLW6OLHKOKnaOKneOKXiOKXiON1iMN1iMN1iMO1GKQEOHRTWARyZ2RxhqRgteRQhbRQVYRANXRAJVRAFURAFURAFURAFURAFURAFURAFURAFURAFURAFURAFURAFURAFURAFURAFURAFURAFURAFURAFURAJVRANXRANXRQZaRw9iSCBxRjF+QEOHOVSLMmONMGeNLmuOLW+OLHKOKnaOKXiOKXiOKXiOOFaLOFaLOVWLPE6KQUKGRTR/RyZ2RxhqRgteRQhbRQVYRANXRAJVRAFURAFURAFURAFURAFURAFURAFURAFURAFURAFURAFURAFURAFURAFURAFURAFURAFURAFURAFURAFURAJVRAJVRANXRg5hSB5wRjF+QESHOFaLMWWNL2mNLm2OLHCOK3OOKnaOKXiOKXiOKXiOOVSLOVSLOlOLPUyJQkCFRTJ/RyV1RxhqRgteRQhbRQVYRANXRAJVRAFURAFURAFURAFURAFURAFURAFURAFURAFURAFURAFURAFURAFURAFURAFURAFURAFURAFURAFURAFURAFURAFURAJVRgteSB5wRjF+QESHOFeMMGeNLmuOLW6OLHGOK3SOKnaOKXiOKXiOKXiOOlKLOlKLO1GKPUuJQj6FRjF+SCN0RxZpRgteRQhbRQVYRANXRAJVRAFURAFURAFURAFURAFURAFURAFURAFURAFURAFURAFURAFURAFURAFURAFURAFURAFURAFURAFURAFURAFURAFURAFURglcSB1vRjB9QESHN1iMMGiNLmyOLW6OLHCOLHKOK3SOKnWOKnaOKnaOOVSLOVSLOlOLPE2KQUGGRTJ/RyV1RxhqRgteRQhbRQZaRANXRAJVRAFURAFURAFURAFURAFURAFURAFURAFURAFURAFURAFURAFURAFURAFURAFURAFURAFURAFURAFURAFURAFURAFURAFURQhbSBpsRyx7Qj6FO1GKM2CNMmKNMmONMmONMWSNMWSNMWWNMWWNMWWNOFaLOFaLOVWLO1CKQUKGRTWARyd3SBlrRgxfRglcRQZaRQVYRAJVRAFURAFURAFURAFURAFURAFURAFURAFURAFURAFURAFURAFURAFURAFURAFURAFURAFURAFURAFURAFURAFURAFURAFURQhbRxhqRyd3RDmCPkmJOFeMOFeMOFaLOVWLOVSLOlOLOlOLOlOLOlOLN1iMN1iMN1iMOlKLQESHRTaBRyh4SBpsRg5hRglcRQZaRQVYRAJVRAFURAFURAFURAFURAFURAFURAFURAFURAFURAFURAFURAFURAFURAFURAFURAFURAFURAFURAFURAFURAFURAFURAFURQZaRxVnSCN0RjF+QUGGPE2KPUyJPkmJP0WHQEOHQkCFQj6FQj6FQj6FNluMNluMNlqMOVSLP0eIRDmCRyp5SBxuRw9iRgteRQhbRQVYRANXRAFURAFURAFURAFURAFURAFURAFURAFURAFURAFURAFURAFURAFURAFURAFURAFURAFURAFURAFURAFURAFURAFURAFURQVYRxJlSB5wRyt6RDmCQEOHQkCFQzuDRTaBRjF+Ryx7Ryp5Ryp5Ryp5NV2MNV2MNVyMOFaLPkmJQzuDRyx7SB1vRxFjRgxfRglcRQZaRANXRAFURAFURAFURAFURAFURAFURAFURAFURAFURAFURAFURAFURAFURAFURAFURAFURAFURAFURAFURAFURAFURAFURAFURQVYRw9iSBpsRyV1RjB9RDmCRTWARi18Ryd3SCFySBpsRxhqRxhqRxhqNF+NNF+NNF+NN1mMPUyJQj6FRjB9SCJzRxVnRxFjRgxfRQhbRQVYRAJVRAFURAFURAFURAFURAFURAFURAJVRANXRQVYRQZaRQhbRQhbRglcRgteRgteRgxfRg5hRgxfRgxfRgteRgteRgteRg5hRxVnSBxuSCN0Ryt6RjF+Ryx7RyZ2SB5wRxhqRxJlRw9iRg5hRg5hMmKNMmKNM2GNNluMO1GKQESHRDeBRyp5SB5wRxhqRxJlRg5hRQhbRANXRAJVRAJVRAJVRAJVRAJVRANXRQZaRgteRg5hRxJlRxZpSBpsSB1vSCBxSCJzRyZ2Ryd3RyZ2SCN0SCJzSCBxSB5wSB5wSCFySCN0Ryd3Ryp5Ryt6Ryd3SCJzSB1vRxhqRxJlRw9iRw9iRw9iMWSNMWSNMmONNF6NOVWLPUqJQj6FRTJ/Ryd3SCFySBlrRxJlRgxfRQZaRANXRANXRANXRANXRQVYRQVYRgteRxJlSBlrSCFyRyd3Ri18RTJ/RDmCQj2EQUKGP0WHQEOHQj6FQzuDRTaBRTR/RjB9Ri98Ryx7Ryp5Ryh4RyZ2SCJzSCBxSBxuRxhqRxRmRxJlRxJlRxJlMWaNMWaNMWaNM2GNN1mMO1CKP0WHQzuDRjF+Ryh4SCBxRxhqRw9iRQhbRQVYRQVYRQVYRQZaRQZaRQhbRxFjSBpsRyV1Ri98RDmCQUKGPUqJOlOLNluMMmKNMWaNMmKNNVyMOVWLPE6KPkmJQUKGQzuDRTWARi18Ryd3SCFySB5wSBxuSBpsRxhqRxZpRxVnRxVnRxVnMGiNMGiNMGiNMWSNNV2MOVWLPUyJQEOHQzqDRjF+Ryd3SB1vRxRmRgteRQZaRQZaRQZaRQhbRQhbRgteRxZpSCJzRi98QzyEPUqJOFaLM2GNLm2OKHqOJIaNIouNJIWNKHqOLHCOMWaNNF6NOVSLPkmJQj2ERjF+RyZ2SBxuSBpsSBlrSBlrRxhqRxhqRxhqRxhqRxhqLmuOLmuOL2qNMGeNM2GNNlqMOlOLPUyJQESHQzqDRi98RyV1SBpsRw9iRgteRgteRgxfRgxfRgxfRw9iSBxuRyt6QzqDPkmJN1mMMGiNKneOI4iNHpqJJKqCLLF9I6mCHpmKIomNKHuOLHCOMmONOVWLP0WHRTaBRyZ2SBlrRxhqSBlrSBpsSBpsSBxuSBxuSBxuSBxuLm2OLm2OLm2OL2qNMWWNM2CNNluMOFaLO1GKPkmJQUGGQzqDRTJ/Ryt6RyZ2SCN0SCJzSCFySCBxSCBxRyp5RTaBQUKGO1CKNV2MLmyOJ36OH5SLJKqCPrxzUcRoO7p1IqeEH5OLJYKOKnWOMGiNNlqMPE2KQUGGRTR/Ryh4Ryh4Ryp5Ryt6Ryx7Ri18Ri98Ri98Ri98LW+OLW+OLW+OLW6OL2qNMGeNMmONM2CNNVyMN1iMOVSLO1GKPUyJPkiIQESHQkCFQzyERDeBRTR/RjF+RDmCQUGGPUqJOVSLM2CNLW6OJoGOHpmKLrJ8U8VnacxbTcJrKa9/HpiKJISNKnaOL2qNNF+NOFaLPUyJQEOHQzuDQzyEQj2EQj6FQUGGQUKGQEOHQEOHQEOHLHKOLHKOLHKOLHGOLW+OLm2OLmuOL2mNMGiNMGeNMWaNMWWNMWSNMmONM2CNNlqMOVWLPE6KPkiIQEOHP0eIPUyJOlKLN1mMM2GNLW6OJoGOHpmKLLF9UcRoZ8xcS8JsKK5/HpiKJISNKnaOLmyOMWSNNF6NN1iMOlOLPE2KPE6KO1GKOlKLOVSLOFaLOFaLOFaLOFaLK3SOK3SOK3SOK3SOK3SOK3SOK3SOK3OOK3OOKnaOKXiOKHqOJ3yOJ36OKHuOK3SOLmuOMmONNluMOVSLOVWLOFeMNlqMNV2MMmKNLmyOJ32OH5KMIqeEObl2ScFtNrh3IaaFH5KMJoGOKnWOLm2OMGiNMWWNMmONM2CNNF+NM2CNMmKNMWSNMWaNMGiNL2mNL2mNL2mNKnaOKnaOKneOKneOKXmOKHqOKHqOJ3yOJ36OJYONI4iNIY2MH5KMHpeKH5WLIouNJoGOKneOLm2OMmONM2GNM2GNM2CNM2CNMmKNL2qNKXiOI4iNHpmKI6iDK7F9IqeEHpmKIoqNJ3yOK3OOLW6OLmyOLm2OLm2OLW6OLW+OLHGOK3OOKnWOKneOKXmOKHqOKHqOKHqOKXiOKXiOKXiOKXmOKHqOJ3yOJn+OJoGOJISNIomNIJCMHpiKHp6IIKSFH6KGHpiKIouNJoCOKnaOLmuOMGiNMWaNMWSNMmKNMmKNMGeNLHKOJ36OIouNHpiKHp6IHpiKIY2MJYKOKXmOLHGOLW6OLW+OLHCOLHKOKnWOKneOKXmOKHuOJ32OJn+OJYKOJYONJYONJYONKXiOKXiOKXiOKXmOKHqOJ32OJn+OJoGOJISNIoqNIJGMHpmKHp+IIaaFH6OGHpmKIY2MJYKOKneOLmyOMGiNMWaNMWSNMmKNM2GNMWSNLm2OKXiOJoGOIoqNIJGMIYyNJIWNJ3yOKnWOLW+OLm2OLW+OLHGOK3OOKnWOKXiOKHqOJ3yOJ36OJoCOJYONJISNJISNJISNKXiOKXiOKXiOKXmOKHqOJ32OJn+OJoGOJISNIoqNIJGMHpmKHp+IIaaFH6OGHpmKIY2MJYKOKneOLmyOMGiNMWaNMWSNMmKNM2CNMmONLmuOK3OOKHuOJISNIomNJIaNJn+OKHqOK3OOLW6OLm2OLW6OLHGOK3OOKnWOKXiOKHqOJ3yOJ36OJoCOJYONJISNJISNJISN"],["cv14",45,45,1,"n6KgrM+bx8ywq7/L28bSr6iZo7C6oMS1rKnZuaem1q3Lz4/Ns6StwL2+qszQ1sjX2sLFwMDFmbG/k57RpK+9rqiur6260r3Sw8XAsb68pMPAva2Kz7WRwqvCtcq6u7nLoMvCrbavuMarw8bB0bXC4be0t8CsspmlpaOvwrCgu7mfuaSsqsSosbrIy6XLvMvIrbexvdO3q+KmtrahxMm1t7SZu6GmvcaoytW5tbqwqMHDrrCsq6adxrG41a7AoKzCsp6cvKfCu7G1w7emvLCywLzHs6+xvamwqKmz37C7uLS317LRwaisr6TKvb+lvq7ftbu9rrCwxKq0vLCgo6+mxre2pr+wp6zerKjJw7LNnq6bzbfhvr6ko67FpY7Exaa9yMibtqjFtqG2v5ueqbCrlpu0u6a31LGtqb25ua+8vLPJm8Gzw9W2srXNz7jA1L+dqK68rM2u0KvNus7X1MiqqYLQzMik5qzGnK3MyaW2ypnEncKzyK6xsaaypazBsMjCxKO9zsXL0J3AwLOgubTYzbClqLaq2KK1ub6ns7q8rbK616LC0Z/PzrfGz7O6pKu4tdKzo8fHvrarrdLFur+yqLC3nKCbsMKhpJyvo6ak3LWrrsTGuZTFxsG8tsmwx62vrq2uw9Grpcyxu7nGqMrEkrSwvbWqsby3tNy/o7i7pLemj7m+vrGpt7vEy8KrtZ7CwMq/0au8s7OZqpWxq7mYrrKP0r6p1cyMsKq1pK+0iLTJs8TMtrm5rNq8vsXOn6W5v6Kfw8Oxsauip7mzxp+Zv6awtqCbuYa9lL+2tLexl7ywtq2swMG2n6Sjx722s6nEpKjEwbWhocW90K+1p9KawdGmnaScubChqseopMubpMawkKONqbqZz8vDqba/xsyRqqKwut20xbi11KPB2e+spJ6rsbDApKuFk5p1o7Wrsa+ds6q2treftdTGsqnHtpiu0pm3qbSupomxtbKhqNedqZajpKqOgYSLipW0m6qfqMunvNi9sqiJpaXFwZ/AqtTOwa7TxMm/scKmwbWUtqeYjIRJNEtKP3hxqqy1laTBm72xt6e/vMTgsrek07DDorHAvrHFt8ewvqnFq6KFf0IFAAAAIyJ9mKSwmrq3m7Ght6e4nq2vssnbnMSxsbGztMTLu7W9uc+dj5J8OgAAAAAAAABEZnmrzLGzobbOk8WUzcKwutGjyb+1zpqzobS+mbi3p669pqZKAAAAAAAAAAAecJOLu7HImryutcTEzr7AvKPIqa6+q6+NqKOrvq+xs8C8pX5WAAAAAAAAAAAAOoafo9qmprfQsc2nsbW0uba1qMC5vMzBvNCxnq6isK6rpIxIAAAAAAAAAAAAM4WpmszGs8m8wqqxtbexoKfAstPOtbybw8mrq63BxKGmqYhEAAAAAAAAAAAASIWfwbbJqqbGpKamm8DTwcWzqcGmoKrJvrOmp7uzp8OiiYhuFQAAAAAAAAALVJfLk7TP0aSslLWcpMyimba5usmrtMGwzca3s7a6k5yhmYxtQAAAAAAAAAA2eaKokqPRl8ehtcWjxI+xqbrAxsaspLqqkI+rq7KzlLKYrZyjbzEAAAAAACp2iq+vx7mcqruhs77GwpvHpranxLO5vLSqzL7BmJPOvpS2rZeWqmljOCRsZm2GmJWzuKmwnbeTssuv4KKwtMPIt5zLv8GbvLHDz6WxsqS4tpyYoniOjopxpraNwsC8pMKhtcK9sby0u6qkrqPJ4MLKprWlwbmnzbXCw8vIsqyjmsKYtI+SsKKcxZqiu8mypdazqbXGh6O/vLSxvcWrrcCun7GivcGpsbjFwbS1w7ezma2xrZ2Tury1pq60wriqr6XUrM681KfEqqqso6qz0bGfwc2OvqCYv8vQs6y0ur/HuLy3qLzNw5XQq93bxNasta2+uby60Lixub++p6+yp5ysi7CfrrHR0tWzqb+gsKWxv6K4t7i9r7SvnM3BwKuZuqfS0a3LwbScv8TFrbe3t6zHv6+8xLq5wKe/qbjJrsjBzZ94qNm9tLnAtt67o6S3uMbIyai/rrunzs++qcm8ocLFvpnBxavHvsWasr6eudOezsapqqm8kcKesbDDp6nK0raxu7i3ppK6tcjI0K3BoLi7prDapcWuw4ufsdGzoa7CnLayr7ypv8DSvLWkraHNkL2+wa/bsZyrqsu1pqSvp6zAm6m5nsHOusWzub24zbLIstPQv6OrjcaxrLigsLvI3avHrqa9tp621qWgvKqctqqpv6rG066trbisusamvMzHqs6pyp7DtLOyqMC7xqrEyajKzqCl3LSijKOUq7K8wrTAw7StvdO2sb6xurivvqqsnKu7y+q1sNefxrzRsrSOmaSgoLeBcW6AiaCizqexvdqxq8Wum5utnsa80bmwwcCm0rnDrcfbs6a4tLJ4k4qTkaiqkoyLnZDIxbK3n6i9q6SxwKS+wMC/t7HGp8uhsrqYv8iks8PBv4BzbUdtnKOFgYqTu7m1tcPisamjt6SYqqrH0a+vybixxajD2qC/tM3IqrWnv4lsW0xqipeimaKdubrKrKPMvZWtvsveyrywqayltsi/p8LKtbO3v5epobe+p7GFb3J6wrOTtbiWsc2/ubi/qLG9uM6a2rCtt8m0zsu6tra9otC7vq+w05u+q5StiKSgj7Sir626trGsn5W6o6/BxcW6vr67pLzGtrmP"]];
for(var k=0;k<D.length;k++){var d=D[k];var c=document.getElementById(d[0]);var ctx=c.getContext("2d");
var w=d[1],h=d[2],ch=d[3],b=atob(d[4]);var im=ctx.createImageData(w,h);var p=im.data;
for(var i=0;i<w*h;i++){if(ch==1){var v=b.charCodeAt(i);p[4*i]=v;p[4*i+1]=v;p[4*i+2]=v;}else{p[4*i]=b.charCodeAt(3*i);p[4*i+1]=b.charCodeAt(3*i+1);p[4*i+2]=b.charCodeAt(3*i+2);}p[4*i+3]=255;}
ctx.putImageData(im,0,0);}})();
</script>
</body></html>
